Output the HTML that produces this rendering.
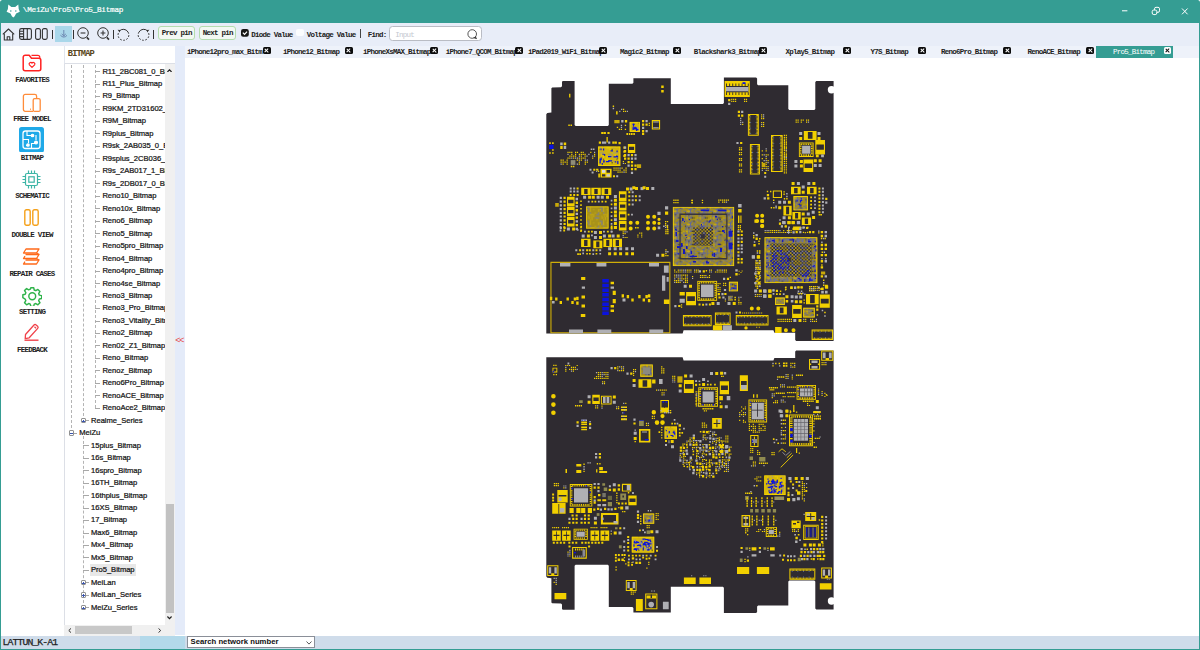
<!DOCTYPE html>
<html><head><meta charset="utf-8"><title>Pro5_Bitmap</title>
<style>
*{box-sizing:border-box;margin:0;padding:0}
html,body{width:1200px;height:650px;overflow:hidden}
body{background:#359d93;position:relative;font-family:"Liberation Mono",monospace;color:#111}
.abs,.abs>*,#tree>*,#tabs>*,#side>*,#tool>*{position:absolute}
i,b{display:block;font-style:normal}
#corner1,#corner2{position:absolute;top:0;width:3px;height:3px;background:#fff}
#title{left:0;top:0;width:1200px;height:22.600px;background:#359d93;border-radius:2.500px 2.500px 0 0}
#ttext{left:22.800px;top:5.100px;font-size:7.700px;letter-spacing:-0.250px;color:#fff;line-height:10px;white-space:nowrap;-webkit-text-stroke:0.200px #fff}
#inner{left:1.200px;top:22.600px;width:1197.600px;height:625.900px;background:#fff;overflow:hidden}
#tool{left:1.200px;top:22.600px;width:1197.600px;height:23.100px;background:#e8edf8}
#side{left:1.200px;top:45.700px;width:62.400px;height:590px;background:#fff}
.sic{}
.sic.c{left:0;width:61.400px;display:flex;justify-content:center}
.sic svg{display:block}
.slb{left:0;width:61.200px;text-align:center;font-size:7.500px;letter-spacing:-0.750px;line-height:10px;font-weight:bold;color:#222;white-space:nowrap;text-indent:0.700px}
#thead{left:63.600px;top:45.700px;width:111.400px;height:18.700px;background:#fff;border-left:1px solid #e2e6ee;border-bottom:1px solid #dcdfe6}
#thead span{position:absolute;left:3.200px;top:3px;font-size:8.700px;letter-spacing:-0.850px;line-height:10px;color:#5a4620;font-weight:bold}
#tree{left:0;top:0;width:164.800px;height:625px;overflow:hidden}
#treeb{left:63.600px;top:64.400px;width:111.400px;height:571px;border-left:1px solid #dcdfe6;border-right:1px solid #dcdfe6}
.ti{font-family:"Liberation Sans",sans-serif;font-size:7.600px;line-height:12px;height:12px;white-space:nowrap;color:#111;padding:0 1.500px;letter-spacing:-0.030px;-webkit-text-stroke:0.220px #111}
.ti.sel{background:#e8e8e8}
.hd{height:0.600px;background:#a8a8a8}
.vd{width:0;border-left:0.700px dashed #b4b4b4}
.bx{width:5.600px;height:5.600px;border:0.600px solid #919191;background:#fff;border-radius:1px}
.bx .h{position:absolute;left:0.800px;top:1.900px;width:2.800px;height:0.700px;background:#3a55b0}
.bx .v{position:absolute;left:1.850px;top:0.800px;width:0.700px;height:2.800px;background:#3a55b0}
#vsb{left:164.800px;top:64.400px;width:10.200px;height:560.600px;background:#f0f0f0}
#vsb .th{position:absolute;left:1.400px;top:440px;width:7.800px;height:108.500px;background:#c2c2c2}
#hsb{left:64.200px;top:625px;width:100.600px;height:10.500px;background:#f0f0f0}
#hsb .th{position:absolute;left:10.800px;top:1.200px;width:57px;height:8px;background:#c8c8c8}
#sbc{left:164.800px;top:625px;width:10.200px;height:10.500px;background:#f0f0f0}
#split{left:175px;top:45.700px;width:10px;height:589.800px;background:#e4ebf9}
#split span{position:absolute;left:0.300px;top:289.400px;font-size:8.800px;letter-spacing:-1.200px;line-height:10px;color:#e8483f;font-family:"Liberation Sans",sans-serif}
#tabs{left:185px;top:45.700px;width:1013.800px;height:12.400px;background:#eef2fa}
#tabs>*{margin-left:-185px}
.tb{top:1.700px;font-size:7.500px;letter-spacing:-0.750px;line-height:10px;white-space:nowrap;color:#222;font-weight:bold}
.tb.w{color:#fff;font-weight:normal}
.cx{top:0.900px;margin-left:-185.800px !important;width:7.800px;height:7.600px;background:#0c0c0c;border-radius:1.500px}
.cx:before,.cx:after{content:"";position:absolute;left:1.500px;top:3.200px;width:4.800px;height:1.200px;background:#fff;transform:rotate(45deg)}
.cx:after{transform:rotate(-45deg)}
.tbact{left:1096px;top:0.300px;width:77.200px;height:12.100px;background:#359d93}
.tbact + .tb + .cx{background:#fff}
.tbact + .tb + .cx:before,.tbact + .tb + .cx:after{background:#111}
#canvas{left:185px;top:58.100px;width:1013.800px;height:577.400px;background:#fff}
#status{left:1.200px;top:635.500px;width:1197.600px;height:13px;background:#cfdcea}
#status .seg{position:absolute;left:139px;top:0;width:45px;height:13px;background:#b3d9ea}
#status .lt{position:absolute;left:1.300px;top:2.300px;font-size:9.800px;letter-spacing:-0.900px;line-height:10px;-webkit-text-stroke:0.250px #222;color:#222;white-space:nowrap}
#combo{position:absolute;left:185.800px;top:0.300px;width:128.400px;height:12.600px;background:#fff;border:0.800px solid #8a8f98}
#combo span{position:absolute;left:2.500px;top:0.600px;font-family:"Liberation Sans",sans-serif;font-weight:bold;font-size:7.700px;line-height:10px;white-space:nowrap;color:#111;letter-spacing:0.020px}
#combo svg{position:absolute;right:2.200px;top:3.800px}
.sep{top:7.600px;width:1px;height:8.600px;background:#333}
.tico{top:5px}
.pin{top:3.800px;height:13.700px;border:1px solid #b4dcae;border-radius:3px;background:#f3f8f3;font-size:7.500px;letter-spacing:-0.750px;line-height:12.800px;font-weight:bold;color:#222;text-align:center;white-space:nowrap}
.tl{top:7.200px;font-size:7.500px;letter-spacing:-0.750px;line-height:10px;font-weight:bold;color:#222;white-space:nowrap}
#find{left:388px;top:3.600px;width:92.500px;height:15.200px;border:1px solid #b9bcc4;border-radius:3.500px;background:#fff}
#find span{position:absolute;left:5px;top:2.600px;font-size:7.500px;letter-spacing:-0.750px;line-height:10px;color:#c4c8d0}
</style></head><body>
<div class="abs">
<div id="corner1" style="left:0"></div><div id="corner2" style="left:1197px"></div>
<div id="title"></div>
<svg style="left:6px;top:3.500px" width="14.500" height="14" viewBox="0 0 14.500 14"><path d="M2.300 0.400L5.400 2.900L9.200 2.900L12.300 0.400L12.700 5L13.800 7.800L10.100 9.600L8.700 12.200L7.300 13.600L5.900 12.200L4.500 9.600L0.600 7.800L1.900 5z" fill="#fff"/><circle cx="4.800" cy="7" r="0.750" fill="#359d93"/><circle cx="9.800" cy="7" r="0.750" fill="#359d93"/></svg>
<div id="ttext">\MeiZu\Pro5\Pro5_Bitmap</div>
<svg style="left:1120px;top:5px" width="72" height="13" viewBox="0 0 72 13" fill="none" stroke="#fff" stroke-width="1"><path d="M2 5.800h5.400"/><rect x="32.200" y="5" width="4.600" height="4.600" rx="1.600"/><path d="M34.500 4.800v-1a1.500 1.500 0 0 1 1.500-1.500h2a1.500 1.500 0 0 1 1.500 1.500v2a1.500 1.500 0 0 1-1.500 1.500h-1"/><path d="M62 3.500l5.600 5.800M67.600 3.500l-5.600 5.800"/></svg>
<div id="inner"></div>
<div id="tool">

<svg class="tico" style="left:0.700px;top:5px" width="13" height="13" viewBox="0 0 13 13" fill="none" stroke="#333" stroke-width="1.100" stroke-linejoin="round"><path d="M0.800 6.400l5.700-5.400l5.700 5.400"/><path d="M2.300 5.600v6.400h8.400v-6.400"/><path d="M5.200 12v-3.300h2.600v3.300"/></svg>
<svg class="tico" style="left:17.500px;top:5.200px" width="13" height="12" viewBox="0 0 13 12" fill="none" stroke="#333" stroke-width="1.100"><rect x="0.600" y="0.600" width="11.800" height="10.800" rx="1.800"/><path d="M4.600 0.600v10.800M8.300 0.600v10.800M0.600 3.200h4M0.600 5.900h4M0.600 8.600h4"/></svg>
<svg class="tico" style="left:33.500px;top:5.200px" width="13" height="12" viewBox="0 0 13 12" fill="none" stroke="#333" stroke-width="1.100"><rect x="0.600" y="0.600" width="4.800" height="10.800" rx="1.600"/><rect x="7.400" y="0.600" width="4.800" height="10.800" rx="1.600"/></svg>
<i class="sep" style="left:50.800px"></i>
<i style="left:54.300px;top:3.400px;width:16.500px;height:16.200px;background:#a9d7ea"></i>
<svg class="tico" style="left:58.700px;top:7.400px" width="7.600" height="8" viewBox="0 0 9 9.500" fill="none" stroke="#5b6fa0" stroke-width="0.900"><path d="M4.500 0v6.800M2 4.600l2.500 2.400l2.500-2.400M0.500 6.200q4 4.400 8 0"/></svg>
<i class="sep" style="left:71.500px"></i>
<svg class="tico" style="left:75.600px;top:4.800px" width="13" height="13.500" viewBox="0 0 13 13.500" fill="none" stroke="#333" stroke-width="1"><circle cx="6" cy="6" r="5.300"/><path d="M3.600 6h4.800" stroke-width="1.100"/><path d="M9.800 10.400l2.200 2.200" stroke-width="1.600"/></svg>
<svg class="tico" style="left:95.600px;top:4.800px" width="13" height="13.500" viewBox="0 0 13 13.500" fill="none" stroke="#333" stroke-width="1"><circle cx="6" cy="6" r="5.300"/><path d="M3.600 6h4.800M6 3.600v4.800" stroke-width="1.100"/><path d="M9.800 10.400l2.200 2.200" stroke-width="1.600"/></svg>
<i class="sep" style="left:111.800px"></i>
<svg class="tico" style="left:115.600px;top:5px" width="13" height="13" viewBox="0 0 13 13" fill="none" stroke="#333" stroke-width="1"><path d="M2.200 3.200a5.400 5.400 0 0 1 8.800 0.800"/><path d="M11 4a5.400 5.400 0 1 1-9.600 1" stroke-dasharray="1.800 1.500"/><path d="M0.600 1.800l2.600 0.200l-0.400 2.600z" fill="#333" stroke="none"/></svg>
<svg class="tico" style="left:135.600px;top:5px" width="13" height="13" viewBox="0 0 13 13" fill="none" stroke="#333" stroke-width="1"><path d="M10.800 3.200a5.400 5.400 0 0 0-8.800 0.800"/><path d="M2 4a5.400 5.400 0 1 0 9.600 1" stroke-dasharray="1.800 1.500"/><path d="M12.400 1.800l-2.600 0.200l0.400 2.600z" fill="#333" stroke="none"/></svg>
<i class="sep" style="left:151.800px"></i>
<div class="pin" style="left:157.200px;width:37px">Prev pin</div>
<div class="pin" style="left:198px;width:37px">Next pin</div>
<svg style="left:240.300px;top:6.600px" width="7.800" height="7.800" viewBox="0 0 8 8"><rect width="8" height="8" rx="2.200" fill="#151515"/><path d="M1.900 3.800l1.700 1.800l2.600-3" fill="none" stroke="#fff" stroke-width="1.200"/></svg>
<span class="tl" style="left:250px">Diode Value</span>
<i style="left:295.300px;top:6px;width:7.200px;height:7.200px;background:#fbfcfe;border-radius:2px"></i>
<span class="tl" style="left:305.500px">Voltage Value</span>
<i class="sep" style="left:358.600px;top:6.500px;height:9px;background:#444"></i>
<span class="tl" style="left:366.500px">Find:</span>
<div id="find"><span>Input</span><svg style="position:absolute;left:76.500px;top:2.300px" width="10.500" height="10.500" viewBox="0 0 10.500 10.500" fill="none" stroke="#444" stroke-width="0.900"><circle cx="5.200" cy="5" r="4.300"/><path d="M6.400 8.400q2 1.600 3.600 1.200q-1.200-0.800-1.200-2.200" fill="#444" stroke-width="0.500"/></svg></div>

</div>
<div id="side">
<div class="sic c" style="top:8.3px"><svg width="20" height="18" viewBox="0 0 20 18" fill="none" stroke="#ff2222" stroke-width="1.5" stroke-linejoin="round"><path d="M1.2 3.2a2 2 0 0 1 2-2h4l2.3 3h7.3a2 2 0 0 1 2 2v8.600a2 2 0 0 1-2 2H3.200a2 2 0 0 1-2-2z"/><path d="M9.500 1.4h6.300a2 2 0 0 1 2 2v1.200" stroke-width="1.200"/><path d="M10 13.400l-2.600-2.600a1.500 1.500 0 0 1 2.600-1.700a1.500 1.500 0 0 1 2.600 1.700z" stroke-width="1.200"/></svg></div>
<div class="sic c" style="top:47.0px"><svg width="20" height="20" viewBox="0 0 20 20" fill="none" stroke="#ff8c3a" stroke-width="1.300" stroke-linejoin="round"><path d="M11 18.300H3.200a1.800 1.800 0 0 1-1.800-1.800V3.200a1.800 1.800 0 0 1 1.800-1.800h9.600a1.800 1.800 0 0 1 1.800 1.800v2.300"/><rect x="11.200" y="5.600" width="7" height="12.800" rx="1.500" fill="#fff"/><path d="M8 16.200h.8" stroke-width="1.400"/></svg></div>
<div class="sic" style="top:81.0px;left:18.3px"><svg width="25" height="25.500" viewBox="0 0 25 25.500"><rect width="25" height="25.500" rx="2.500" fill="#1fa9e8"/><g fill="none" stroke="#fff" stroke-width="1.300"><rect x="4" y="4" width="17" height="17.500" rx="2.500"/><path d="M8 4v4.500h4.500M17 8v5M4 12.500h5.500v3.500M12.500 21.500v-5h4M9 18.500h-2" stroke-width="1.100"/><circle cx="17" cy="15.500" r="1.400" fill="#fff"/><circle cx="13.500" cy="8.500" r="1.200" fill="#fff"/><circle cx="9" cy="18" r="1.200" fill="#fff"/></g></svg></div>
<div class="sic c" style="top:124.5px"><svg width="19" height="19" viewBox="0 0 19 19" fill="none" stroke="#3cb5a5" stroke-width="1.200"><rect x="3.500" y="3.500" width="12" height="12" rx="1.500"/><rect x="6.800" y="6.800" width="5.400" height="5.400"/><path d="M6.500 0.500v3M9.500 0.500v3M12.500 0.500v3M6.500 15.500v3M9.500 15.500v3M12.500 15.500v3M0.500 6.500h3M0.500 9.500h3M0.500 12.500h3M15.500 6.500h3M15.500 9.500h3M15.500 12.500h3"/></svg></div>
<div class="sic c" style="top:163.3px"><svg width="15" height="17" viewBox="0 0 15 17" fill="none" stroke="#f5a11a" stroke-width="1.400"><rect x="0.800" y="0.800" width="5.400" height="15.400" rx="1.600"/><rect x="8.800" y="0.800" width="5.400" height="15.400" rx="1.600"/></svg></div>
<div class="sic c" style="top:202.0px"><svg width="19" height="17" viewBox="0 0 19 17" fill="none" stroke="#ff6a1a" stroke-width="1.300" stroke-linejoin="round"><path d="M4 1h13l-2.500 4h-13z"/><path d="M3.500 6.500h13.500l-2.500 4h-13l1.500-2.400"/><path d="M3.500 12h13.500l-2.500 4h-13l1.500-2.400"/><path d="M14.500 5l2.500 1.500M14.500 10.500l2.500 1.500" /></svg></div>
<div class="sic c" style="top:240.1px"><svg width="20.500" height="20.500" viewBox="0 0 24 24" fill="none" stroke="#2fb34a" stroke-width="1.700" stroke-linejoin="round"><circle cx="12" cy="12" r="4"/><path d="M10.300 2h3.400l.6 2.700 1.900.8 2.400-1.500 2.400 2.400-1.500 2.400.8 1.900 2.700.6v3.400l-2.700.6-.8 1.900 1.500 2.400-2.400 2.400-2.400-1.500-1.900.8-.6 2.700h-3.400l-.6-2.700-1.900-.8-2.400 1.500-2.400-2.400 1.500-2.400-.8-1.900L1 13.700v-3.400l2.700-.6.8-1.900L3 5.400l2.400-2.400 2.400 1.500 1.900-.8z"/></svg></div>
<div class="sic c" style="top:276.9px"><svg width="17" height="18" viewBox="0 0 17 18" fill="none" stroke="#f0424a" stroke-width="1.300" stroke-linejoin="round"><path d="M2.500 11.500l8.500-9.500a1.500 1.500 0 0 1 2.100-.1l1.500 1.400a1.500 1.500 0 0 1 .1 2.100l-8.500 9.400-4 .9z"/><path d="M11.500 3.800l1.500 1.400" /><path d="M1.500 17.200h14" stroke-width="1.400"/></svg></div>
<div class="slb" style="top:29.5px">FAVORITES</div>
<div class="slb" style="top:68.1px">FREE MODEL</div>
<div class="slb" style="top:107.1px">BITMAP</div>
<div class="slb" style="top:145.7px">SCHEMATIC</div>
<div class="slb" style="top:184.4px">DOUBLE VIEW</div>
<div class="slb" style="top:223.1px">REPAIR CASES</div>
<div class="slb" style="top:261.7px">SETTING</div>
<div class="slb" style="top:299.6px">FEEDBACK</div>
</div>
<div id="thead"><span>BITMAP</span></div>
<div id="treeb"></div>
<div id="tree">
<i class="vd" style="left:71.4px;top:64.5px;height:368.5px"></i>
<i class="vd" style="left:83.4px;top:64.5px;height:356.1px"></i>
<i class="vd" style="left:95.4px;top:64.5px;height:343.6px"></i>
<i class="vd" style="left:83.4px;top:436.0px;height:171.6px"></i>
<div class="ti" style="left:100.9px;top:65.5px">R11_2BC081_0_Bitmap</div>
<i class="hd" style="left:95.4px;top:71.1px;width:4.6px"></i>
<div class="ti" style="left:100.9px;top:78.0px">R11_Plus_Bitmap</div>
<i class="hd" style="left:95.4px;top:83.6px;width:4.6px"></i>
<div class="ti" style="left:100.9px;top:90.4px">R9_Bitmap</div>
<i class="hd" style="left:95.4px;top:96.0px;width:4.6px"></i>
<div class="ti" style="left:100.9px;top:102.9px">R9KM_2TD31602_Bitmap</div>
<i class="hd" style="left:95.4px;top:108.5px;width:4.6px"></i>
<div class="ti" style="left:100.9px;top:115.4px">R9M_Bitmap</div>
<i class="hd" style="left:95.4px;top:121.0px;width:4.6px"></i>
<div class="ti" style="left:100.9px;top:127.8px">R9plus_Bitmap</div>
<i class="hd" style="left:95.4px;top:133.4px;width:4.6px"></i>
<div class="ti" style="left:100.9px;top:140.3px">R9sk_2AB035_0_Bitmap</div>
<i class="hd" style="left:95.4px;top:145.9px;width:4.6px"></i>
<div class="ti" style="left:100.9px;top:152.8px">R9splus_2CB036_Bitmap</div>
<i class="hd" style="left:95.4px;top:158.4px;width:4.6px"></i>
<div class="ti" style="left:100.9px;top:165.3px">R9s_2AB017_1_Bitmap</div>
<i class="hd" style="left:95.4px;top:170.9px;width:4.6px"></i>
<div class="ti" style="left:100.9px;top:177.7px">R9s_2DB017_0_Bitmap</div>
<i class="hd" style="left:95.4px;top:183.3px;width:4.6px"></i>
<div class="ti" style="left:100.9px;top:190.2px">Reno10_Bitmap</div>
<i class="hd" style="left:95.4px;top:195.8px;width:4.6px"></i>
<div class="ti" style="left:100.9px;top:202.7px">Reno10x_Bitmap</div>
<i class="hd" style="left:95.4px;top:208.3px;width:4.6px"></i>
<div class="ti" style="left:100.9px;top:215.1px">Reno6_Bitmap</div>
<i class="hd" style="left:95.4px;top:220.7px;width:4.6px"></i>
<div class="ti" style="left:100.9px;top:227.6px">Reno5_Bitmap</div>
<i class="hd" style="left:95.4px;top:233.2px;width:4.6px"></i>
<div class="ti" style="left:100.9px;top:240.1px">Reno5pro_Bitmap</div>
<i class="hd" style="left:95.4px;top:245.7px;width:4.6px"></i>
<div class="ti" style="left:100.9px;top:252.6px">Reno4_Bitmap</div>
<i class="hd" style="left:95.4px;top:258.2px;width:4.6px"></i>
<div class="ti" style="left:100.9px;top:265.0px">Reno4pro_Bitmap</div>
<i class="hd" style="left:95.4px;top:270.6px;width:4.6px"></i>
<div class="ti" style="left:100.9px;top:277.5px">Reno4se_Bitmap</div>
<i class="hd" style="left:95.4px;top:283.1px;width:4.6px"></i>
<div class="ti" style="left:100.9px;top:290.0px">Reno3_Bitmap</div>
<i class="hd" style="left:95.4px;top:295.6px;width:4.6px"></i>
<div class="ti" style="left:100.9px;top:302.4px">Reno3_Pro_Bitmap</div>
<i class="hd" style="left:95.4px;top:308.0px;width:4.6px"></i>
<div class="ti" style="left:100.9px;top:314.9px">Reno3_Vitality_Bitmap</div>
<i class="hd" style="left:95.4px;top:320.5px;width:4.6px"></i>
<div class="ti" style="left:100.9px;top:327.4px">Reno2_Bitmap</div>
<i class="hd" style="left:95.4px;top:333.0px;width:4.6px"></i>
<div class="ti" style="left:100.9px;top:339.8px">Ren02_Z1_Bitmap</div>
<i class="hd" style="left:95.4px;top:345.4px;width:4.6px"></i>
<div class="ti" style="left:100.9px;top:352.3px">Reno_Bitmap</div>
<i class="hd" style="left:95.4px;top:357.9px;width:4.6px"></i>
<div class="ti" style="left:100.9px;top:364.8px">Renoz_Bitmap</div>
<i class="hd" style="left:95.4px;top:370.4px;width:4.6px"></i>
<div class="ti" style="left:100.9px;top:377.2px">Reno6Pro_Bitmap</div>
<i class="hd" style="left:95.4px;top:382.8px;width:4.6px"></i>
<div class="ti" style="left:100.9px;top:389.7px">RenoACE_Bitmap</div>
<i class="hd" style="left:95.4px;top:395.3px;width:4.6px"></i>
<div class="ti" style="left:100.9px;top:402.2px">RenoAce2_Bitmap</div>
<i class="hd" style="left:95.4px;top:407.8px;width:4.6px"></i>
<div class="ti" style="left:89.5px;top:414.7px">Realme_Series</div>
<i class="hd" style="left:83.4px;top:420.3px;width:5.2px"></i>
<i class="bx" style="left:80.6px;top:417.8px"><b class="h"></b><b class="v"></b></i>
<div class="ti" style="left:77.8px;top:427.1px">MeiZu</div>
<i class="hd" style="left:71.4px;top:432.7px;width:5.5px"></i>
<i class="bx" style="left:68.6px;top:430.2px"><b class="h"></b></i>
<div class="ti" style="left:89.5px;top:439.6px">15plus_Bitmap</div>
<i class="hd" style="left:83.4px;top:445.2px;width:5.2px"></i>
<div class="ti" style="left:89.5px;top:452.1px">16s_Bitmap</div>
<i class="hd" style="left:83.4px;top:457.7px;width:5.2px"></i>
<div class="ti" style="left:89.5px;top:464.5px">16spro_Bitmap</div>
<i class="hd" style="left:83.4px;top:470.1px;width:5.2px"></i>
<div class="ti" style="left:89.5px;top:477.0px">16TH_Bitmap</div>
<i class="hd" style="left:83.4px;top:482.6px;width:5.2px"></i>
<div class="ti" style="left:89.5px;top:489.5px">16thplus_Bitmap</div>
<i class="hd" style="left:83.4px;top:495.1px;width:5.2px"></i>
<div class="ti" style="left:89.5px;top:502.0px">16XS_Bitmap</div>
<i class="hd" style="left:83.4px;top:507.6px;width:5.2px"></i>
<div class="ti" style="left:89.5px;top:514.4px">17_Bitmap</div>
<i class="hd" style="left:83.4px;top:520.0px;width:5.2px"></i>
<div class="ti" style="left:89.5px;top:526.9px">Max6_Bitmap</div>
<i class="hd" style="left:83.4px;top:532.5px;width:5.2px"></i>
<div class="ti" style="left:89.5px;top:539.4px">Mx4_Bitmap</div>
<i class="hd" style="left:83.4px;top:545.0px;width:5.2px"></i>
<div class="ti" style="left:89.5px;top:551.8px">Mx5_Bitmap</div>
<i class="hd" style="left:83.4px;top:557.4px;width:5.2px"></i>
<div class="ti sel" style="left:89.5px;top:564.3px">Pro5_Bitmap</div>
<i class="hd" style="left:83.4px;top:569.9px;width:5.2px"></i>
<div class="ti" style="left:89.5px;top:576.8px">MeiLan</div>
<i class="hd" style="left:83.4px;top:582.4px;width:5.2px"></i>
<i class="bx" style="left:80.6px;top:579.9px"><b class="h"></b><b class="v"></b></i>
<div class="ti" style="left:89.5px;top:589.2px">MeiLan_Series</div>
<i class="hd" style="left:83.4px;top:594.8px;width:5.2px"></i>
<i class="bx" style="left:80.6px;top:592.3px"><b class="h"></b><b class="v"></b></i>
<div class="ti" style="left:89.5px;top:601.7px">MeiZu_Series</div>
<i class="hd" style="left:83.4px;top:607.3px;width:5.2px"></i>
<i class="bx" style="left:80.6px;top:604.8px"><b class="h"></b><b class="v"></b></i>
</div>
<div id="vsb"><svg style="position:absolute;left:2.600px;top:4.500px" width="5" height="3.500" viewBox="0 0 5 3.500" fill="none" stroke="#222" stroke-width="1.200"><path d="M0.400 3l2.100-2.200l2.100 2.200"/></svg><div class="th"></div><svg style="position:absolute;left:2.600px;top:552px" width="5" height="3.500" viewBox="0 0 5 3.500" fill="none" stroke="#222" stroke-width="1.200"><path d="M0.400 0.500l2.100 2.200l2.100-2.200"/></svg></div>
<div id="hsb"><svg style="position:absolute;left:3.500px;top:3px" width="3.500" height="5" viewBox="0 0 3.500 5" fill="none" stroke="#333" stroke-width="1"><path d="M3 0.400l-2.200 2.100l2.200 2.100"/></svg><div class="th"></div><svg style="position:absolute;left:93.500px;top:3px" width="3.500" height="5" viewBox="0 0 3.500 5" fill="none" stroke="#333" stroke-width="1"><path d="M0.500 0.400l2.200 2.100l-2.200 2.100"/></svg></div>
<div id="sbc"></div>
<div id="tabs">
<span class="tb" style="left:187px">iPhone12pro_max_Bitm</span><i class="cx" style="left:263.5px"></i>
<span class="tb" style="left:283px">iPhone12_Bitmap</span><i class="cx" style="left:345.5px"></i>
<span class="tb" style="left:363px">iPhoneXsMAX_Bitmap</span><i class="cx" style="left:431px"></i>
<span class="tb" style="left:445.8px">iPhone7_QCOM_Bitmap</span><i class="cx" style="left:515.8px"></i>
<span class="tb" style="left:528px">iPad2019_WiFi_Bitmap</span><i class="cx" style="left:600px"></i>
<span class="tb" style="left:620px">Magic2_Bitmap</span><i class="cx" style="left:674px"></i>
<span class="tb" style="left:693.8px">Blackshark3_Bitmap</span><i class="cx" style="left:760px"></i>
<span class="tb" style="left:785.5px">Xplay5_Bitmap</span><i class="cx" style="left:844px"></i>
<span class="tb" style="left:870.5px">Y7S_Bitmap</span><i class="cx" style="left:918.8px"></i>
<span class="tb" style="left:941px">Reno6Pro_Bitmap</span><i class="cx" style="left:1004px"></i>
<span class="tb" style="left:1027.5px">RenoACE_Bitmap</span><i class="cx" style="left:1086.8px"></i>
<div class="tbact"></div><span class="tb w" style="left:1113px">Pro5_Bitmap</span><i class="cx" style="left:1164.3px"></i>
</div>
<div id="split"><span>&lt;&lt;</span></div>
<div id="canvas">
<svg style="position:absolute;left:-185px;top:-58.1px" width="1200" height="650" viewBox="0 0 1200 650" shape-rendering="auto"><defs><pattern id="bga" width="13.36" height="13.36" patternUnits="userSpaceOnUse"><rect width="13.36" height="13.36" fill="#a48e1c"/><path fill="#c8ab12" d="M6.98 8.65v4.51h1.05v-4.51zM0.30 11.99v1.17h1.05v-1.17zM3.64 1.97h2.84v1.05h-2.84zM5.31 10.32h4.51v1.05h-4.51zM5.31 0.30h4.51v1.05h-4.51zM6.98 3.64h2.84v1.05h-2.84zM1.97 3.64v4.51h1.05v-4.51zM3.64 3.64v1.17h1.05v-1.17zM0.30 5.31v1.17h1.05v-1.17zM3.64 3.64h2.84v1.05h-2.84zM5.31 5.31v1.17h1.05v-1.17zM5.31 10.32h2.84v1.05h-2.84z"/><path fill="#5f66a0" d="M10.32 3.64h1.17v1.05h-1.17zM8.65 6.98v4.51h1.05v-4.51zM8.65 1.97h2.84v1.05h-2.84zM6.98 11.99h4.51v1.05h-4.51zM11.99 11.99h4.51v1.05h-4.51zM6.98 0.30h4.51v1.05h-4.51zM10.32 0.30v4.51h1.05v-4.51zM8.65 10.32v4.51h1.05v-4.51zM11.99 0.30h4.51v1.05h-4.51zM5.31 1.97v1.17h1.05v-1.17zM11.99 8.65h4.51v1.05h-4.51zM6.98 11.99v1.17h1.05v-1.17zM8.65 6.98h1.17v1.05h-1.17zM1.97 5.31v2.84h1.05v-2.84zM8.65 3.64h2.84v1.05h-2.84zM1.97 6.98h4.51v1.05h-4.51zM3.64 1.97h4.51v1.05h-4.51zM6.98 11.99v1.17h1.05v-1.17zM1.97 10.32h1.17v1.05h-1.17zM8.65 6.98v2.84h1.05v-2.84zM3.64 0.30h4.51v1.05h-4.51zM11.99 8.65h1.17v1.05h-1.17zM3.64 10.32h1.17v1.05h-1.17zM8.65 3.64v1.17h1.05v-1.17zM6.98 3.64v2.84h1.05v-2.84zM3.64 11.99v2.84h1.05v-2.84zM8.65 11.99h2.84v1.05h-2.84zM10.32 3.64h1.17v1.05h-1.17zM3.64 11.99h2.84v1.05h-2.84zM11.99 6.98v4.51h1.05v-4.51zM8.65 1.97v2.84h1.05v-2.84zM0.30 6.98v2.84h1.05v-2.84zM6.98 11.99v2.84h1.05v-2.84zM6.98 8.65h4.51v1.05h-4.51zM0.30 11.99v4.51h1.05v-4.51zM8.65 6.98h2.84v1.05h-2.84zM8.65 8.65v2.84h1.05v-2.84zM10.32 8.65v1.17h1.05v-1.17zM11.99 8.65v2.84h1.05v-2.84zM3.64 5.31v2.84h1.05v-2.84z"/><path fill="#3a3626" d="M11.99 6.98v1.17h1.05v-1.17zM10.32 3.64h1.17v1.05h-1.17zM6.98 0.30h1.17v1.05h-1.17zM11.99 3.64v1.17h1.05v-1.17zM3.64 0.30v1.17h1.05v-1.17zM3.64 0.30h1.17v1.05h-1.17zM3.64 11.99v1.17h1.05v-1.17z"/></pattern><pattern id="bgb" width="13.36" height="13.36" patternUnits="userSpaceOnUse"><rect width="13.36" height="13.36" fill="#d2b40e"/><path fill="#ecd000" d="M1.97 11.99h2.84v1.05h-2.84zM3.64 11.99h4.51v1.05h-4.51zM0.30 6.98v2.84h1.05v-2.84zM10.32 1.97v1.17h1.05v-1.17zM6.98 1.97h2.84v1.05h-2.84zM1.97 8.65v2.84h1.05v-2.84zM11.99 1.97v1.17h1.05v-1.17zM6.98 1.97v1.17h1.05v-1.17zM5.31 8.65v2.84h1.05v-2.84zM5.31 0.30h4.51v1.05h-4.51z"/><path fill="#8a8ca6" d="M10.32 6.98v2.84h1.05v-2.84zM1.97 5.31v1.17h1.05v-1.17zM6.98 6.98h4.51v1.05h-4.51zM11.99 5.31v1.17h1.05v-1.17zM0.30 5.31h1.17v1.05h-1.17zM8.65 6.98h2.84v1.05h-2.84zM10.32 6.98v1.17h1.05v-1.17zM11.99 0.30h1.17v1.05h-1.17z"/><path fill="#3a3626" d="M10.32 1.97h1.17v1.05h-1.17zM1.97 11.99v1.17h1.05v-1.17zM10.32 1.97h1.17v1.05h-1.17z"/></pattern><pattern id="bgu" width="13.36" height="13.36" patternUnits="userSpaceOnUse"><rect width="13.36" height="13.36" fill="#a8921a"/><path fill="#c4a814" d="M8.65 3.64v2.84h1.05v-2.84zM1.97 1.97v2.84h1.05v-2.84zM5.31 0.30h1.17v1.05h-1.17zM1.97 5.31v1.17h1.05v-1.17zM0.30 1.97v1.17h1.05v-1.17zM0.30 10.32v1.17h1.05v-1.17zM0.30 3.64h2.84v1.05h-2.84zM1.97 6.98v4.51h1.05v-4.51zM3.64 1.97v4.51h1.05v-4.51zM5.31 8.65v1.17h1.05v-1.17zM1.97 0.30h4.51v1.05h-4.51zM10.32 8.65v2.84h1.05v-2.84zM11.99 8.65h2.84v1.05h-2.84zM3.64 5.31v1.17h1.05v-1.17zM11.99 8.65h4.51v1.05h-4.51zM1.97 1.97h4.51v1.05h-4.51zM8.65 3.64h2.84v1.05h-2.84zM1.97 8.65v2.84h1.05v-2.84zM11.99 11.99v1.17h1.05v-1.17zM6.98 11.99v4.51h1.05v-4.51z"/><path fill="#767ba0" d="M0.30 6.98v4.51h1.05v-4.51zM11.99 6.98h4.51v1.05h-4.51zM8.65 0.30h2.84v1.05h-2.84zM1.97 11.99h1.17v1.05h-1.17zM6.98 3.64h4.51v1.05h-4.51zM10.32 11.99h1.17v1.05h-1.17z"/></pattern><pattern id="chk" width="13.36" height="13.36" patternUnits="userSpaceOnUse"><rect width="13.36" height="13.36" fill="#17173c"/><path fill="#ccae14" d="M0.00 0.00h1.67v1.67h-1.67zM3.34 0.00h1.67v1.67h-1.67zM10.02 0.00h1.67v1.67h-1.67zM5.01 1.67h1.67v1.67h-1.67zM8.35 1.67h1.67v1.67h-1.67zM11.69 1.67h1.67v1.67h-1.67zM0.00 3.34h1.67v1.67h-1.67zM3.34 3.34h1.67v1.67h-1.67zM6.68 3.34h1.67v1.67h-1.67zM10.02 3.34h1.67v1.67h-1.67zM1.67 5.01h1.67v1.67h-1.67zM5.01 5.01h1.67v1.67h-1.67zM11.69 5.01h1.67v1.67h-1.67zM3.34 6.68h1.67v1.67h-1.67zM6.68 6.68h1.67v1.67h-1.67zM10.02 6.68h1.67v1.67h-1.67zM1.67 8.35h1.67v1.67h-1.67zM8.35 8.35h1.67v1.67h-1.67zM11.69 8.35h1.67v1.67h-1.67zM3.34 10.02h1.67v1.67h-1.67zM6.68 10.02h1.67v1.67h-1.67zM10.02 10.02h1.67v1.67h-1.67zM1.67 11.69h1.67v1.67h-1.67zM5.01 11.69h1.67v1.67h-1.67zM8.35 11.69h1.67v1.67h-1.67zM11.69 11.69h1.67v1.67h-1.67z"/><path fill="#8e8e98" d="M6.68 0.00h1.67v1.67h-1.67zM1.67 1.67h1.67v1.67h-1.67zM8.35 5.01h1.67v1.67h-1.67zM0.00 6.68h1.67v1.67h-1.67zM5.01 8.35h1.67v1.67h-1.67zM0.00 10.02h1.67v1.67h-1.67z"/></pattern><pattern id="chkg" width="13.36" height="13.36" patternUnits="userSpaceOnUse"><rect width="13.36" height="13.36" fill="#17173c"/><path fill="#ccae14" d="M0.00 0.00h1.67v1.67h-1.67zM3.34 0.00h1.67v1.67h-1.67zM10.02 0.00h1.67v1.67h-1.67zM5.01 1.67h1.67v1.67h-1.67zM8.35 1.67h1.67v1.67h-1.67zM0.00 3.34h1.67v1.67h-1.67zM3.34 3.34h1.67v1.67h-1.67zM10.02 3.34h1.67v1.67h-1.67zM1.67 5.01h1.67v1.67h-1.67zM5.01 5.01h1.67v1.67h-1.67zM8.35 5.01h1.67v1.67h-1.67zM6.68 6.68h1.67v1.67h-1.67zM10.02 6.68h1.67v1.67h-1.67zM1.67 8.35h1.67v1.67h-1.67zM5.01 8.35h1.67v1.67h-1.67zM8.35 8.35h1.67v1.67h-1.67zM11.69 8.35h1.67v1.67h-1.67zM6.68 10.02h1.67v1.67h-1.67zM10.02 10.02h1.67v1.67h-1.67zM1.67 11.69h1.67v1.67h-1.67z"/><path fill="#8e8e98" d="M6.68 0.00h1.67v1.67h-1.67zM1.67 1.67h1.67v1.67h-1.67zM11.69 1.67h1.67v1.67h-1.67zM6.68 3.34h1.67v1.67h-1.67zM11.69 5.01h1.67v1.67h-1.67zM0.00 6.68h1.67v1.67h-1.67zM3.34 6.68h1.67v1.67h-1.67zM0.00 10.02h1.67v1.67h-1.67zM3.34 10.02h1.67v1.67h-1.67zM5.01 11.69h1.67v1.67h-1.67zM8.35 11.69h1.67v1.67h-1.67zM11.69 11.69h1.67v1.67h-1.67z"/></pattern></defs><path d="M546.3 333.4L546.3 114.2L547.3 112.9L551.4 112.5L551.4 88.3L552.2 87.4L561.0 87.2L562.0 86.2L562.0 81.8L562.8 81.0L574.6 81.0L574.6 125.0L575.6 126.0L607.8 126.0L608.8 125.0L608.8 83.8L632.4 83.8L633.4 82.8L633.4 78.3L670.8 78.3L670.8 103.9L722.9 103.9L723.9 102.9L723.9 77.6L756.1 77.6L757.1 78.6L757.1 84.2L758.1 85.2L788.3 85.2L788.3 109.1L789.3 110.1L814.3 110.1L815.3 109.1L815.3 82.1L816.3 81.1L833.6 81.1L833.6 341.0L796.2 341.0L795.2 340.0L795.2 332.7L774.4 332.7L773.4 330.3L683.6 330.3L682.6 333.4z" fill="#2f2b31"/><circle cx="831.5" cy="89.7" r="3.7" fill="#fff"/><rect x="831.5" y="87.2" width="3" height="5" fill="#fff"/><rect x="672.9" y="206.9" width="61.2" height="59.2" fill="url(#bga)"/>
<path fill="#f2d000" d="M672.9 206.9h61.2v.9h-61.2zM672.9 265.2h61.2v.9h-61.2zM672.9 207.8h.9v57.4h-.9zM733.2 207.8h.9v57.4h-.9z"/>
<path fill="#38343c" d="M679.4 213.6h48.1v1.3h-48.1zM679.4 258.1h48.1v1.3h-48.1zM679.4 214.9h1.3v43.2h-1.3zM726.2 214.9h1.3v43.2h-1.3z"/>
<rect x="693.1" y="227.4" width="20" height="18.4" fill="url(#chk)" /><rect x="701" y="234.2" width="3.8" height="4.4" fill="#35313a"/>
<path fill="#1418c0" d="M700.6 209.4h8.6v1.8h-8.6zM717.8 209.4h8.7v1.8h-8.7zM728.6 230.7h3.8v6.1h-3.8zM728.6 242.4h3.8v6.8h-3.8zM689.5 255.7h7.5v1.2h-7.5zM713.5 253h1.5v4h-1.5zM675.5 232h1.5v4h-1.5zM676 240h2.6v2h-2.6zM677 246h3.6v2h-3.6zM681 243h1.6v4h-1.6zM683 249h2v5h-2zM686 246h1.6v3h-1.6zM722 230h2.6v2h-2.6zM720 248h2v4h-2zM706 262h3v1.6h-3zM693 261h3v1.6h-3zM682 218h1.6v3h-1.6zM715 216h2v1.6h-2zM722.4 226.3h.9v1.2h-.9zM694.3 243.6h1.2v1.2h-1.2zM690.8 252.1h1.2v1.9h-1.2zM708.6 221.3h1.3v1.2h-1.3zM709.5 220.1h1.2v1.7h-1.2zM723.8 232h1.2v.9h-1.2zM718.4 243.7h2.2v1.2h-2.2zM689 219h1v1.2h-1zM700.8 224.1h1.2v1.5h-1.2zM716.8 218.7h1.2v1.5h-1.2zM686 237.2h1.2v.8h-1.2zM704.6 234h.9v1.2h-.9zM685.1 234.8h1.5v1.2h-1.5zM683.9 221h1.1v1.2h-1.1zM711.9 254.1h1.2v1.6h-1.2zM722 226h1.4v1.2h-1.4zM701.5 225.7h1.2v1.1h-1.2zM724.1 239.7h1.2v.8h-1.2zM690.7 250.7h1.4v1.2h-1.4zM675.6 229.3h1.2v1.6h-1.2zM692.2 255.3h1.7v1.1h-1.7zM677.5 253.3h1.9v1.2h-1.9zM705.9 261.5h1.9v1h-1.9zM711 225.3h1.1v1.2h-1.1zM731.9 215.8h.9v1.9h-.9zM675 228.8h1.8v1.2h-1.8zM729.8 228.7h.9v1.7h-.9zM706.2 260.8h1.2v1.8h-1.2zM719.5 218.7h1.2v1.2h-1.2zM681.4 244.7h1.5v1.2h-1.5zM726.5 240.3h1.2v1.2h-1.2zM694.1 234.2h1.1v.8h-1.1z"/>
<rect x="764.6" y="237.2" width="52.7" height="45.9" fill="url(#bga)"/>
<path fill="#f2d000" d="M764.6 237.2h52.7v.9h-52.7zM764.6 282.2h52.7v.9h-52.7zM764.6 238.1h.9v44.1h-.9zM816.4 238.1h.9v44.1h-.9z"/>
<rect x="770.4" y="243.4" width="41.7" height="33.4" fill="url(#chkg)"/><rect x="787.4" y="258" width="3.4" height="3.4" fill="#35313a"/>
<path fill="#666c9e" d="M810.6 240.1h1.2v1.7h-1.2zM801.7 239.6h1.2v2.7h-1.2zM786.5 239h3.3v1.2h-3.3zM797.9 239.3h1.2v3.2h-1.2zM808.3 239.5h1.2v3.4h-1.2zM772 240.7h1.6v1.2h-1.6zM813.7 238.7h1.4v1.2h-1.4zM774.7 241.4h2v1.2h-2zM798.6 239.6h1.2v1.9h-1.2zM767.1 238.8h1.2v2.5h-1.2zM802.3 239.2h1.2v3.2h-1.2zM772.8 238.6h1.2v3h-1.2zM802.7 238.9h1.1v1.2h-1.1zM796.8 241h3v1.2h-3zM776.9 279.9h1.2v1.1h-1.2zM786.6 277h1.2v3.7h-1.2zM775.7 278.6h1.2v2.5h-1.2zM804.3 277h2.6v1.2h-2.6zM773.6 278.8h1.2v3.1h-1.2zM807.4 279.2h1.2v1.3h-1.2zM811.3 278.4h3.4v1.2h-3.4zM806.8 279.2h2.7v1.2h-2.7zM780.1 277.3h1.2v1.1h-1.2zM797 278.3h1.2v1.3h-1.2zM811.7 279.2h1.2v1.6h-1.2zM773.7 278.4h2.8v1.2h-2.8zM797.5 280.2h4v1.2h-4zM781.4 277.9h1.2v1.7h-1.2zM767.4 264.2h1.1v2.4h-1.1zM766.1 256.9h1.2v1.9h-1.2zM767.7 257.2h1.7v1.2h-1.7zM767 246.1h1.4v1.2h-1.4zM767.2 259.6h2v1.2h-2zM766.2 273.4h1.2v1.8h-1.2zM766.7 246.4h2.7v1.2h-2.7zM766.9 246.1h2.7v1.2h-2.7zM766.6 260.3h2.2v1.2h-2.2zM767.2 244.6h2.4v1.2h-2.4zM812.5 250.4h1.8v1.2h-1.8zM812.5 259.8h1.1v1.2h-1.1zM813.3 264.9h1.2v2.4h-1.2zM813.8 246.7h1.7v1.1h-1.7zM812.4 263.5h1.1v1.2h-1.1zM813.6 273.2h1.2v1.1h-1.2zM812.2 264.9h1.2v1.5h-1.2zM814.4 266.7h1.2v1.9h-1.2zM813.4 262.4h2.3v1.2h-2.3zM814.6 265.2h1.2v1.5h-1.2z"/>
<path fill="#1418c0" d="M789.3 239.2h1.4v1.2h-1.4zM789.7 239.3h3v1.2h-3zM769.4 241.1h1v1.2h-1zM814.7 240.7h1.2v1.6h-1.2zM782.1 239.5h1.2v2.5h-1.2zM773.6 239.4h1.2v3.4h-1.2zM792.9 238.9h1.2v3.3h-1.2zM808.3 239.2h1.2v1.5h-1.2zM808.1 241h3v1.2h-3zM771.8 240.1h2.9v1.2h-2.9zM814.7 277.7h1.2v1.3h-1.2zM809.4 277.6h1.2v2.3h-1.2zM809.9 279.6h2.9v1.2h-2.9zM809 278.5h1.2v2.4h-1.2zM794.2 280.6h1.6v1.2h-1.6zM799.1 279.3h2.5v1.2h-2.5zM804.1 279h1.2v2.9h-1.2zM797.8 277.7h2.3v1.2h-2.3zM766.1 262.4h2.4v1.2h-2.4zM766.5 257.3h1.2v1.8h-1.2zM766.2 265.9h1.2v1.7h-1.2zM766.9 244.9h1.6v1.2h-1.6zM767.1 274.8h2.2v1.2h-2.2zM767.6 264h1.2v2.1h-1.2zM768 262.4h1.2v1.1h-1.2zM766.5 253.4h1.2v2h-1.2zM815.3 249.2h1.2v2.3h-1.2zM812.4 266.2h2v1.1h-2zM814.9 274.5h1.2v2.1h-1.2zM814.5 257.6h1.2v1.2h-1.2zM814.5 269.6h1.2v2.4h-1.2zM813.8 254.9h1.2v1.5h-1.2zM815 245.2h1.2v2.4h-1.2zM814.7 275.5h1.1v1.2h-1.1zM814 246.1h2.3v1.2h-2.3zM813.6 265h1.2v1.2h-1.2zM777.1 250.1h1.7v1.7h-1.7zM780.4 250.1h1.7v1.7h-1.7zM773.7 253.4h1.7v1.7h-1.7zM780.4 253.4h1.7v1.7h-1.7zM783.8 253.4h1.7v1.7h-1.7zM772.1 255.1h1.7v1.7h-1.7zM775.4 255.1h1.7v1.7h-1.7zM785.4 255.1h1.7v1.7h-1.7zM773.7 256.8h1.7v1.7h-1.7zM780.4 256.8h1.7v1.7h-1.7zM783.8 256.8h1.7v1.7h-1.7zM787.1 256.8h1.7v1.7h-1.7zM772.1 258.4h1.7v1.7h-1.7zM775.4 258.4h1.7v1.7h-1.7zM782.1 258.4h1.7v1.7h-1.7zM770.4 260.1h1.7v1.7h-1.7zM780.4 260.1h1.7v1.7h-1.7zM783.8 260.1h1.7v1.7h-1.7zM787.1 260.1h1.7v1.7h-1.7zM772.1 261.8h1.7v1.7h-1.7zM775.4 261.8h1.7v1.7h-1.7zM782.1 261.8h1.7v1.7h-1.7zM785.4 261.8h1.7v1.7h-1.7zM773.7 263.4h1.7v1.7h-1.7zM777.1 263.4h1.7v1.7h-1.7zM780.4 263.4h1.7v1.7h-1.7zM787.1 263.4h1.7v1.7h-1.7zM772.1 265.1h1.7v1.7h-1.7zM778.8 265.1h1.7v1.7h-1.7zM773.7 266.8h1.7v1.7h-1.7zM777.1 266.8h1.7v1.7h-1.7zM780.4 266.8h1.7v1.7h-1.7zM783.8 266.8h1.7v1.7h-1.7zM787.1 266.8h1.7v1.7h-1.7zM778.8 268.4h1.7v1.7h-1.7zM782.1 268.4h1.7v1.7h-1.7zM773.7 270.1h1.7v1.7h-1.7zM807.1 270.1h1.7v1.7h-1.7zM778.8 271.8h1.7v1.7h-1.7zM782.1 271.8h1.7v1.7h-1.7zM805.5 271.8h1.7v1.7h-1.7zM803.8 273.5h1.7v1.7h-1.7zM807.1 273.5h1.7v1.7h-1.7zM802.1 275.1h1.7v1.7h-1.7zM805.5 275.1h1.7v1.7h-1.7z"/>
<rect x="586.1" y="206.4" width="22.4" height="22.2" fill="url(#bgu)"/>
<path fill="#f2d000" d="M586.1 206.4h22.4v.8h-22.4zM586.1 227.8h22.4v.8h-22.4zM586.1 207.2h.8v20.6h-.8zM607.7 207.2h.8v20.6h-.8z"/>
<rect x="598.1" y="146.6" width="22.2" height="19.4" fill="url(#bgb)"/>
<path fill="#f2d000" d="M598.1 146.6h22.2v.9h-22.2zM598.1 165.1h22.2v.9h-22.2zM598.1 147.5h.9v17.6h-.9zM619.4 147.5h.9v17.6h-.9z"/>
<path fill="#0a12de" d="M616 155.6h1.2v1.7h-1.2zM613.5 156.3h2.9v1.2h-2.9zM599.5 158.4h1.2v3.2h-1.2zM614.7 161.2h1.5v1.2h-1.5zM601.7 163h1.2v1.7h-1.2zM600.4 148.6h1.2v1.6h-1.2zM616.5 150.6h1.2v1.6h-1.2zM609 160.2h3.1v1.2h-3.1zM604 154.1h1.2v1.7h-1.2zM608.2 160h1.2v2.2h-1.2zM600.6 157.4h1.2v2.8h-1.2zM603 148.5h1.2v1.9h-1.2zM616.9 155.8h1.2v1.2h-1.2zM608 156h3.4v1.2h-3.4zM603 161.4h1.7v1.2h-1.7zM610.6 150.2h2.4v1.2h-2.4zM616.9 157.4h1.2v1.2h-1.2zM617.2 160.9h1.2v3h-1.2zM602.5 153.7h1.2v1.4h-1.2zM603.3 160.3h1.4v1.2h-1.4zM605.9 161h2.5v1.2h-2.5zM599.6 160h1.2v3.4h-1.2z"/>
<rect x="629.7" y="121.9" width="10.2" height="10" fill="url(#bgb)"/>
<path fill="#f2d000" d="M629.7 121.9h10.2v.9h-10.2zM629.7 131h10.2v.9h-10.2zM629.7 122.8h.9v8.2h-.9zM639 122.8h.9v8.2h-.9zM651.8 120.1h8.3v1.1h-8.3zM651.8 128.4h8.3v1.1h-8.3zM651.8 121.2h1.1v7.2h-1.1zM659 121.2h1.1v7.2h-1.1zM600.5 168.7h11.1v8.9h-11.1z"/>
<path fill="#0a12de" d="M636.2 129h2.2v1.2h-2.2zM632.9 123.5h1.2v2.9h-1.2zM635.1 128.1h1.2v1.5h-1.2zM632.6 126.7h1.2v1.4h-1.2zM634 127.3h2.7v1.2h-2.7zM634.5 126.8h1.2v1.8h-1.2zM632.5 128h1.2v1.9h-1.2zM632.5 123.8h2.2v1.2h-2.2zM633.4 128.3h1.7v1.2h-1.7zM636 128.1h1.2v2.8h-1.2z"/>
<path fill="#b0b0b4" d="M653.2 121.4h5.5v1h-5.5zM653.2 127.2h5.5v1h-5.5z"/>
<path fill="#d8d8e0" d="M602 170h3.3v2.8h-3.3z"/>
<path fill="#c8c8cc" d="M606.5 174.2h3.5v2.4h-3.5z"/>
<path fill="#2f2b31" d="M606.5 170h3.5v2.8h-3.5zM602 174.2h3.3v2.4h-3.3z"/>
<rect x="793.5" y="196.1" width="14.4" height="14.2" fill="url(#bga)"/>
<path fill="#f2d000" d="M793.5 196.1h14.4v.9h-14.4zM793.5 209.4h14.4v.9h-14.4zM793.5 197h.9v12.4h-.9zM807 197h.9v12.4h-.9zM772.8 190.5h9.2v1.1h-9.2zM772.8 197h9.2v1.1h-9.2zM772.8 191.6h1.1v5.4h-1.1zM780.9 191.6h1.1v5.4h-1.1z"/>
<path fill="#0a12de" d="M800.5 199.9h1.7v1.2h-1.7zM799.4 205.2h2.2v1.2h-2.2zM798.9 203.7h1.3v1.2h-1.3zM799.9 200.3h1.2v2.1h-1.2zM796.6 200h1v1.8h-1zM800.8 198.2h1.2v1.2h-1.2z"/>
<path fill="#2f2b31" d="M774.4 192.8h6v3h-6z"/>
<rect x="728.9" y="281.8" width="9.1" height="9.5" fill="url(#bga)"/>
<path fill="#f2d000" d="M728.9 281.8h9.1v.9h-9.1zM728.9 290.4h9.1v.9h-9.1zM728.9 282.7h.9v7.7h-.9zM737.1 282.7h.9v7.7h-.9z"/>
<path fill="#0a12de" d="M735.1 287.6h1.4v1.2h-1.4zM731.2 287.4h2.1v1h-2.1zM733.2 287.8h1.5v1.2h-1.5zM734.3 285.3h2.2v1.2h-2.2z"/>
<rect x="728" y="295.8" width="4.9" height="5" fill="url(#bga)"/>
<path fill="#f2d000" d="M697.3 280.9h19.8v19.9h-19.8z"/>
<path fill="#2f2b31" d="M698.2 281.8h18v18.1h-18z"/>
<path fill="#f2d000" d="M699.3 281.8h1v1.7h-1zM699.3 298.2h1v1.7h-1zM701.1 281.8h1v1.7h-1zM701.1 298.2h1v1.7h-1zM702.8 281.8h1v1.7h-1zM702.8 298.2h1v1.7h-1zM704.6 281.8h1v1.7h-1zM704.6 298.2h1v1.7h-1zM706.3 281.8h1v1.7h-1zM706.3 298.2h1v1.7h-1zM708.1 281.8h1v1.7h-1zM708.1 298.2h1v1.7h-1zM709.8 281.8h1v1.7h-1zM709.8 298.2h1v1.7h-1zM711.6 281.8h1v1.7h-1zM711.6 298.2h1v1.7h-1zM713.3 281.8h1v1.7h-1zM713.3 298.2h1v1.7h-1zM698.2 282.9h1.7v1h-1.7zM714.5 282.9h1.7v1h-1.7zM698.2 284.7h1.7v1h-1.7zM714.5 284.7h1.7v1h-1.7zM698.2 286.4h1.7v1h-1.7zM714.5 286.4h1.7v1h-1.7zM698.2 288.2h1.7v1h-1.7zM714.5 288.2h1.7v1h-1.7zM698.2 290h1.7v1h-1.7zM714.5 290h1.7v1h-1.7zM698.2 291.7h1.7v1h-1.7zM714.5 291.7h1.7v1h-1.7zM698.2 293.5h1.7v1h-1.7zM714.5 293.5h1.7v1h-1.7zM698.2 295.3h1.7v1h-1.7zM714.5 295.3h1.7v1h-1.7zM698.2 297h1.7v1h-1.7zM714.5 297h1.7v1h-1.7zM798.9 142.5h14.7v14.4h-14.7z"/>
<path fill="#b0b0b4" d="M701 284.6h12.4v12.5h-12.4z"/>
<path fill="#2f2b31" d="M799.8 143.4h12.9v12.6h-12.9z"/>
<path fill="#f2d000" d="M800.9 143.4h1v1.7h-1zM800.9 154.3h1v1.7h-1zM802.7 143.4h1v1.7h-1zM802.7 154.3h1v1.7h-1zM804.5 143.4h1v1.7h-1zM804.5 154.3h1v1.7h-1zM806.2 143.4h1v1.7h-1zM806.2 154.3h1v1.7h-1zM808 143.4h1v1.7h-1zM808 154.3h1v1.7h-1zM809.8 143.4h1v1.7h-1zM809.8 154.3h1v1.7h-1zM799.8 144.5h1.7v1h-1.7zM811 144.5h1.7v1h-1.7zM799.8 146.2h1.7v1h-1.7zM811 146.2h1.7v1h-1.7zM799.8 148h1.7v1h-1.7zM811 148h1.7v1h-1.7zM799.8 149.7h1.7v1h-1.7zM811 149.7h1.7v1h-1.7zM799.8 151.4h1.7v1h-1.7zM811 151.4h1.7v1h-1.7zM799.8 153.2h1.7v1h-1.7zM811 153.2h1.7v1h-1.7zM724.6 81.1h25.2v15.9h-25.2z"/>
<path fill="#b0b0b4" d="M802.1 145.7h8.3v8h-8.3z"/>
<path fill="#2f2b31" d="M726 86h22.4v6.3h-22.4z"/>
<path fill="#b0b0b4" d="M726 87h22.4v4.3h-22.4z"/>
<path fill="#2f2b31" d="M726.1 83.4h.9v2.6h-.9zM726.1 92.3h.9v2.6h-.9zM729.2 83.4h.9v2.6h-.9zM729.2 92.3h.9v2.6h-.9zM732.3 83.4h.9v2.6h-.9zM732.3 92.3h.9v2.6h-.9zM735.4 83.4h.9v2.6h-.9zM735.4 92.3h.9v2.6h-.9zM738.5 83.4h.9v2.6h-.9zM738.5 92.3h.9v2.6h-.9zM741.6 83.4h.9v2.6h-.9zM741.6 92.3h.9v2.6h-.9zM744.7 83.4h.9v2.6h-.9zM744.7 92.3h.9v2.6h-.9zM747.8 83.4h.9v2.6h-.9zM747.8 92.3h.9v2.6h-.9z"/>
<path fill="#f2d000" d="M747.9 114h10.9v1h-10.9zM747.9 134.7h10.9v1h-10.9zM747.9 115h1v19.7h-1zM757.8 115h1v19.7h-1zM749.9 143.9h10v1h-10zM749.9 173.6h10v1h-10zM749.9 144.9h1v28.7h-1zM758.9 144.9h1v28.7h-1zM771 135h11.7v1h-11.7zM771 171.1h11.7v1h-11.7zM771 136h1v35.1h-1zM781.7 136h1v35.1h-1zM682.9 314.9h28.7v1h-28.7zM682.9 325.2h28.7v1h-28.7zM682.9 315.9h1v9.3h-1zM710.6 315.9h1v9.3h-1zM714.9 312.5h15.7v1h-15.7zM714.9 323.9h15.7v1h-15.7zM714.9 313.5h1v10.4h-1zM729.6 313.5h1v10.4h-1zM735.8 314.9h32.7v1h-32.7zM735.8 324.6h32.7v1h-32.7zM735.8 315.9h1v8.7h-1zM767.5 315.9h1v8.7h-1zM811.6 329.4h21.5v1h-21.5zM811.6 339.1h21.5v1h-21.5zM811.6 330.4h1v8.7h-1zM832.1 330.4h1v8.7h-1zM712.9 325.3h9.2v4.9h-9.2zM627.9 143.9h7.3v9.2h-7.3zM581.2 187.8h9.4v7.3h-9.4zM591.3 187.8h9.5v7.3h-9.5zM601.5 187.8h9.8v7.3h-9.8zM567 196.7h7.6v9.7h-7.6zM567 207.1h7.6v9h-7.6zM567 216.8h7.6v9.7h-7.6zM618.9 191.2h7.6v9.7h-7.6zM618.9 201.6h7.6v9h-7.6zM618.9 211.3h7.6v9h-7.6zM618.9 221h7.6v9.5h-7.6zM581.1 238.8h9.4v8.3h-9.4zM593.3 240.5h9v7.8h-9zM603.4 238.8h8.6v8.3h-8.6zM612.7 238.8h9.3v8.3h-9.3zM803.8 130.9h12.8v9h-12.8zM815.3 139.9h9.7v14.5h-9.7zM803.5 159.4h9.7v12.7h-9.7zM791 186.8h9.7v7.5h-9.7zM807 186.8h9.6v7.5h-9.6zM783.4 205.7h8.3v9.7h-8.3zM792.4 212h8.3v7.6h-8.3zM801.8 217.5h9.3v7.6h-9.3zM686.1 291.9h9.9v13.4h-9.9z"/>
<path fill="#0a12de" d="M742.5 82.2h3v1.8h-3z"/>
<path fill="#dcbc0a" d="M748.7 115h1.6v.9h-1.6zM756.4 115h1.6v.9h-1.6zM748.7 116.4h1.6v.9h-1.6zM756.4 116.4h1.6v.9h-1.6zM748.7 117.8h1.6v.9h-1.6zM756.4 117.8h1.6v.9h-1.6zM748.7 119.2h1.6v.9h-1.6zM756.4 119.2h1.6v.9h-1.6zM748.7 120.6h1.6v.9h-1.6zM756.4 120.6h1.6v.9h-1.6zM748.7 122h1.6v.9h-1.6zM756.4 122h1.6v.9h-1.6zM748.7 123.4h1.6v.9h-1.6zM756.4 123.4h1.6v.9h-1.6zM748.7 124.8h1.6v.9h-1.6zM756.4 124.8h1.6v.9h-1.6zM748.7 126.3h1.6v.9h-1.6zM756.4 126.3h1.6v.9h-1.6zM748.7 127.7h1.6v.9h-1.6zM756.4 127.7h1.6v.9h-1.6zM748.7 129.1h1.6v.9h-1.6zM756.4 129.1h1.6v.9h-1.6zM748.7 130.5h1.6v.9h-1.6zM756.4 130.5h1.6v.9h-1.6zM748.7 131.9h1.6v.9h-1.6zM756.4 131.9h1.6v.9h-1.6zM748.7 133.3h1.6v.9h-1.6zM756.4 133.3h1.6v.9h-1.6zM750.7 144.9h1.6v.9h-1.6zM757.5 144.9h1.6v.9h-1.6zM750.7 146.3h1.6v.9h-1.6zM757.5 146.3h1.6v.9h-1.6zM750.7 147.8h1.6v.9h-1.6zM757.5 147.8h1.6v.9h-1.6zM750.7 149.2h1.6v.9h-1.6zM757.5 149.2h1.6v.9h-1.6zM750.7 150.6h1.6v.9h-1.6zM757.5 150.6h1.6v.9h-1.6zM750.7 152.1h1.6v.9h-1.6zM757.5 152.1h1.6v.9h-1.6zM750.7 153.5h1.6v.9h-1.6zM757.5 153.5h1.6v.9h-1.6zM750.7 154.9h1.6v.9h-1.6zM757.5 154.9h1.6v.9h-1.6zM750.7 156.4h1.6v.9h-1.6zM757.5 156.4h1.6v.9h-1.6zM750.7 157.8h1.6v.9h-1.6zM757.5 157.8h1.6v.9h-1.6zM750.7 159.2h1.6v.9h-1.6zM757.5 159.2h1.6v.9h-1.6zM750.7 160.7h1.6v.9h-1.6zM757.5 160.7h1.6v.9h-1.6zM750.7 162.1h1.6v.9h-1.6zM757.5 162.1h1.6v.9h-1.6zM750.7 163.6h1.6v.9h-1.6zM757.5 163.6h1.6v.9h-1.6zM750.7 165h1.6v.9h-1.6zM757.5 165h1.6v.9h-1.6zM750.7 166.4h1.6v.9h-1.6zM757.5 166.4h1.6v.9h-1.6zM750.7 167.9h1.6v.9h-1.6zM757.5 167.9h1.6v.9h-1.6zM750.7 169.3h1.6v.9h-1.6zM757.5 169.3h1.6v.9h-1.6zM750.7 170.7h1.6v.9h-1.6zM757.5 170.7h1.6v.9h-1.6zM750.7 172.2h1.6v.9h-1.6zM757.5 172.2h1.6v.9h-1.6zM771.8 136h1.6v.9h-1.6zM780.3 136h1.6v.9h-1.6zM771.8 137.5h1.6v.9h-1.6zM780.3 137.5h1.6v.9h-1.6zM771.8 138.9h1.6v.9h-1.6zM780.3 138.9h1.6v.9h-1.6zM771.8 140.4h1.6v.9h-1.6zM780.3 140.4h1.6v.9h-1.6zM771.8 141.8h1.6v.9h-1.6zM780.3 141.8h1.6v.9h-1.6zM771.8 143.3h1.6v.9h-1.6zM780.3 143.3h1.6v.9h-1.6zM771.8 144.8h1.6v.9h-1.6zM780.3 144.8h1.6v.9h-1.6zM771.8 146.2h1.6v.9h-1.6zM780.3 146.2h1.6v.9h-1.6zM771.8 147.7h1.6v.9h-1.6zM780.3 147.7h1.6v.9h-1.6zM771.8 149.2h1.6v.9h-1.6zM780.3 149.2h1.6v.9h-1.6zM771.8 150.6h1.6v.9h-1.6zM780.3 150.6h1.6v.9h-1.6zM771.8 152.1h1.6v.9h-1.6zM780.3 152.1h1.6v.9h-1.6zM771.8 153.6h1.6v.9h-1.6zM780.3 153.6h1.6v.9h-1.6zM771.8 155h1.6v.9h-1.6zM780.3 155h1.6v.9h-1.6zM771.8 156.5h1.6v.9h-1.6zM780.3 156.5h1.6v.9h-1.6zM771.8 157.9h1.6v.9h-1.6zM780.3 157.9h1.6v.9h-1.6zM771.8 159.4h1.6v.9h-1.6zM780.3 159.4h1.6v.9h-1.6zM771.8 160.9h1.6v.9h-1.6zM780.3 160.9h1.6v.9h-1.6zM771.8 162.3h1.6v.9h-1.6zM780.3 162.3h1.6v.9h-1.6zM771.8 163.8h1.6v.9h-1.6zM780.3 163.8h1.6v.9h-1.6zM771.8 165.2h1.6v.9h-1.6zM780.3 165.2h1.6v.9h-1.6zM771.8 166.7h1.6v.9h-1.6zM780.3 166.7h1.6v.9h-1.6zM771.8 168.2h1.6v.9h-1.6zM780.3 168.2h1.6v.9h-1.6zM771.8 169.6h1.6v.9h-1.6zM780.3 169.6h1.6v.9h-1.6zM683.9 315.7h.9v1.6h-.9zM683.9 323.8h.9v1.6h-.9zM685.3 315.7h.9v1.6h-.9zM685.3 323.8h.9v1.6h-.9zM686.7 315.7h.9v1.6h-.9zM686.7 323.8h.9v1.6h-.9zM688.1 315.7h.9v1.6h-.9zM688.1 323.8h.9v1.6h-.9zM689.5 315.7h.9v1.6h-.9zM689.5 323.8h.9v1.6h-.9zM690.9 315.7h.9v1.6h-.9zM690.9 323.8h.9v1.6h-.9zM692.3 315.7h.9v1.6h-.9zM692.3 323.8h.9v1.6h-.9zM693.7 315.7h.9v1.6h-.9zM693.7 323.8h.9v1.6h-.9zM695.1 315.7h.9v1.6h-.9zM695.1 323.8h.9v1.6h-.9zM696.5 315.7h.9v1.6h-.9zM696.5 323.8h.9v1.6h-.9zM698 315.7h.9v1.6h-.9zM698 323.8h.9v1.6h-.9zM699.4 315.7h.9v1.6h-.9zM699.4 323.8h.9v1.6h-.9zM700.8 315.7h.9v1.6h-.9zM700.8 323.8h.9v1.6h-.9zM702.2 315.7h.9v1.6h-.9zM702.2 323.8h.9v1.6h-.9zM703.6 315.7h.9v1.6h-.9zM703.6 323.8h.9v1.6h-.9zM705 315.7h.9v1.6h-.9zM705 323.8h.9v1.6h-.9zM706.4 315.7h.9v1.6h-.9zM706.4 323.8h.9v1.6h-.9zM707.8 315.7h.9v1.6h-.9zM707.8 323.8h.9v1.6h-.9zM709.2 315.7h.9v1.6h-.9zM709.2 323.8h.9v1.6h-.9zM715.9 313.3h.9v1.6h-.9zM715.9 322.5h.9v1.6h-.9zM717.3 313.3h.9v1.6h-.9zM717.3 322.5h.9v1.6h-.9zM718.6 313.3h.9v1.6h-.9zM718.6 322.5h.9v1.6h-.9zM720 313.3h.9v1.6h-.9zM720 322.5h.9v1.6h-.9zM721.4 313.3h.9v1.6h-.9zM721.4 322.5h.9v1.6h-.9zM722.8 313.3h.9v1.6h-.9zM722.8 322.5h.9v1.6h-.9zM724.1 313.3h.9v1.6h-.9zM724.1 322.5h.9v1.6h-.9zM725.5 313.3h.9v1.6h-.9zM725.5 322.5h.9v1.6h-.9zM726.9 313.3h.9v1.6h-.9zM726.9 322.5h.9v1.6h-.9zM728.2 313.3h.9v1.6h-.9zM728.2 322.5h.9v1.6h-.9zM736.8 315.7h.9v1.6h-.9zM736.8 323.2h.9v1.6h-.9zM738.3 315.7h.9v1.6h-.9zM738.3 323.2h.9v1.6h-.9zM739.7 315.7h.9v1.6h-.9zM739.7 323.2h.9v1.6h-.9zM741.2 315.7h.9v1.6h-.9zM741.2 323.2h.9v1.6h-.9zM742.6 315.7h.9v1.6h-.9zM742.6 323.2h.9v1.6h-.9zM744.1 315.7h.9v1.6h-.9zM744.1 323.2h.9v1.6h-.9zM745.6 315.7h.9v1.6h-.9zM745.6 323.2h.9v1.6h-.9zM747 315.7h.9v1.6h-.9zM747 323.2h.9v1.6h-.9zM748.5 315.7h.9v1.6h-.9zM748.5 323.2h.9v1.6h-.9zM750 315.7h.9v1.6h-.9zM750 323.2h.9v1.6h-.9zM751.4 315.7h.9v1.6h-.9zM751.4 323.2h.9v1.6h-.9zM752.9 315.7h.9v1.6h-.9zM752.9 323.2h.9v1.6h-.9zM754.3 315.7h.9v1.6h-.9zM754.3 323.2h.9v1.6h-.9zM755.8 315.7h.9v1.6h-.9zM755.8 323.2h.9v1.6h-.9zM757.3 315.7h.9v1.6h-.9zM757.3 323.2h.9v1.6h-.9zM758.7 315.7h.9v1.6h-.9zM758.7 323.2h.9v1.6h-.9zM760.2 315.7h.9v1.6h-.9zM760.2 323.2h.9v1.6h-.9zM761.7 315.7h.9v1.6h-.9zM761.7 323.2h.9v1.6h-.9zM763.1 315.7h.9v1.6h-.9zM763.1 323.2h.9v1.6h-.9zM764.6 315.7h.9v1.6h-.9zM764.6 323.2h.9v1.6h-.9zM766 315.7h.9v1.6h-.9zM766 323.2h.9v1.6h-.9zM812.6 330.2h.9v1.6h-.9zM812.6 337.7h.9v1.6h-.9zM814 330.2h.9v1.6h-.9zM814 337.7h.9v1.6h-.9zM815.4 330.2h.9v1.6h-.9zM815.4 337.7h.9v1.6h-.9zM816.8 330.2h.9v1.6h-.9zM816.8 337.7h.9v1.6h-.9zM818.2 330.2h.9v1.6h-.9zM818.2 337.7h.9v1.6h-.9zM819.6 330.2h.9v1.6h-.9zM819.6 337.7h.9v1.6h-.9zM821 330.2h.9v1.6h-.9zM821 337.7h.9v1.6h-.9zM822.4 330.2h.9v1.6h-.9zM822.4 337.7h.9v1.6h-.9zM823.7 330.2h.9v1.6h-.9zM823.7 337.7h.9v1.6h-.9zM825.1 330.2h.9v1.6h-.9zM825.1 337.7h.9v1.6h-.9zM826.5 330.2h.9v1.6h-.9zM826.5 337.7h.9v1.6h-.9zM827.9 330.2h.9v1.6h-.9zM827.9 337.7h.9v1.6h-.9zM829.3 330.2h.9v1.6h-.9zM829.3 337.7h.9v1.6h-.9zM830.7 330.2h.9v1.6h-.9zM830.7 337.7h.9v1.6h-.9z"/>
<path fill="#5a7ad0" d="M750.3 116.4h.8v.8h-.8zM755.6 116.4h.8v.8h-.8zM750.3 122h.8v.8h-.8zM755.6 122h.8v.8h-.8zM750.3 127.7h.8v.8h-.8zM755.6 127.7h.8v.8h-.8zM750.3 133.3h.8v.8h-.8zM755.6 133.3h.8v.8h-.8zM752.3 146.3h.8v.8h-.8zM756.7 146.3h.8v.8h-.8zM752.3 152.1h.8v.8h-.8zM756.7 152.1h.8v.8h-.8zM752.3 157.8h.8v.8h-.8zM756.7 157.8h.8v.8h-.8zM752.3 163.6h.8v.8h-.8zM756.7 163.6h.8v.8h-.8zM752.3 169.3h.8v.8h-.8zM756.7 169.3h.8v.8h-.8zM773.4 137.5h.8v.8h-.8zM779.5 137.5h.8v.8h-.8zM773.4 143.3h.8v.8h-.8zM779.5 143.3h.8v.8h-.8zM773.4 149.2h.8v.8h-.8zM779.5 149.2h.8v.8h-.8zM773.4 155h.8v.8h-.8zM779.5 155h.8v.8h-.8zM773.4 160.9h.8v.8h-.8zM779.5 160.9h.8v.8h-.8zM773.4 166.7h.8v.8h-.8zM779.5 166.7h.8v.8h-.8zM685.3 317.3h.8v.8h-.8zM685.3 323h.8v.8h-.8zM690.9 317.3h.8v.8h-.8zM690.9 323h.8v.8h-.8zM696.5 317.3h.8v.8h-.8zM696.5 323h.8v.8h-.8zM702.2 317.3h.8v.8h-.8zM702.2 323h.8v.8h-.8zM707.8 317.3h.8v.8h-.8zM707.8 323h.8v.8h-.8zM717.3 314.9h.8v.8h-.8zM717.3 321.7h.8v.8h-.8zM722.8 314.9h.8v.8h-.8zM722.8 321.7h.8v.8h-.8zM728.2 314.9h.8v.8h-.8zM728.2 321.7h.8v.8h-.8zM738.3 317.3h.8v.8h-.8zM738.3 322.4h.8v.8h-.8zM744.1 317.3h.8v.8h-.8zM744.1 322.4h.8v.8h-.8zM750 317.3h.8v.8h-.8zM750 322.4h.8v.8h-.8zM755.8 317.3h.8v.8h-.8zM755.8 322.4h.8v.8h-.8zM761.7 317.3h.8v.8h-.8zM761.7 322.4h.8v.8h-.8zM814 331.8h.8v.8h-.8zM814 336.9h.8v.8h-.8zM819.6 331.8h.8v.8h-.8zM819.6 336.9h.8v.8h-.8zM825.1 331.8h.8v.8h-.8zM825.1 336.9h.8v.8h-.8zM830.7 331.8h.8v.8h-.8zM830.7 336.9h.8v.8h-.8z"/>
<path fill="#b0b0b4" d="M722.7 325.3h9.2v4.9h-9.2zM560 263h10.4v3.5h-10.4zM596.5 263h9.9v3.5h-9.9zM649 263h10v3.5h-10z"/>
<path fill="#d0ae08" d="M550.4 261.8h120v1.1h-120zM550.4 332.2h120v1.1h-120zM550.4 262.9h1.1v69.3h-1.1zM669.3 262.9h1.1v69.3h-1.1z"/>
<path fill="#2f2b31" d="M629 146.8h5.1v3.3h-5.1zM584.2 188.9h3.4v5.1h-3.4zM594.3 188.9h3.4v5.1h-3.4zM604.6 188.9h3.5v5.1h-3.5zM568.1 199.8h5.4v3.5h-5.4zM568.1 210h5.4v3.2h-5.4zM568.1 219.9h5.4v3.5h-5.4zM620 194.3h5.4v3.5h-5.4zM620 204.5h5.4v3.2h-5.4zM620 214.2h5.4v3.2h-5.4zM620 224h5.4v3.4h-5.4zM584.1 239.9h3.4v6.1h-3.4zM596.2 241.6h3.2v5.6h-3.2zM606.2 239.9h3.1v6.1h-3.1zM615.7 239.9h3.3v6.1h-3.3zM807.9 132h4.6v6.8h-4.6zM816.4 144.5h7.5v5.2h-7.5zM804.6 163.5h7.5v4.6h-7.5zM794.1 187.9h3.5v5.3h-3.5zM810.1 187.9h3.5v5.3h-3.5zM786.1 206.8h3v7.5h-3zM795.1 213.1h3v5.4h-3zM804.8 218.6h3.3v5.4h-3.3zM687.2 296.2h7.7v4.8h-7.7z"/>
<path fill="#c9a90a" d="M614.3 120.1h5.3v3.2h-5.3zM636.9 164.2h4.2v3.7h-4.2zM555.2 203h3.6v3.7h-3.6z"/>
<path fill="#f2d000" d="M663.9 299.5h5.5v4.4h-5.5zM581.1 276.9h4.2v3.1h-4.2zM581.5 295.6h3.5v2.8h-3.5zM581.5 304.6h3.5v2.8h-3.5zM580.8 314h4.5v3h-4.5zM610.6 281.7h3.4v2.5h-3.4zM612.7 290.7h3.1v4.2h-3.1zM612.7 299h3.1v4.2h-3.1zM610.6 305h3.4v2.4h-3.4zM610.6 309.4h3.4v2.5h-3.4zM549.9 296.8h2.4v3.2h-2.4zM555.1 297.4h2.4v3.2h-2.4zM559.6 300.9h2.4v3.2h-2.4zM566.5 297.4h2.4v3.2h-2.4zM571.3 300.9h2.4v3.2h-2.4zM573.7 297.4h2.4v3.2h-2.4zM576.2 296.8h2.4v3.2h-2.4zM576.2 301.6h2.4v3.2h-2.4zM621.6 294.3h2.4v3.2h-2.4zM626.7 295h2.4v3.2h-2.4zM631.3 298.4h2.4v3.2h-2.4zM638.2 295h2.4v3.2h-2.4zM642.6 298.4h2.4v3.2h-2.4zM645.4 295h2.4v3.2h-2.4zM647.9 294.3h2.4v3.2h-2.4zM647.9 299.1h2.4v3.2h-2.4zM569.1 93.8h1.3v3.6h-1.3zM661.2 85.6h2.5v2.5h-2.5zM661.2 89.9h2.5v2.5h-2.5zM612.7 105.6h1.4v1.4h-1.4zM616.1 111.3h1.5v3.2h-1.5zM623 108.8h1.2v1.2h-1.2zM623 110.7h1.2v1.2h-1.2zM624.9 110.7h1.2v1.2h-1.2zM624.9 120.1h2.3v2.3h-2.3zM624.8 124.7h1.3v1.3h-1.3zM616.8 126.7h1.3v1.3h-1.3zM618.8 128.7h1.3v1.3h-1.3zM620.8 128.7h1.3v1.3h-1.3zM624.8 128.7h1.3v1.3h-1.3zM642 120.1h2.2v2.2h-2.2zM642 123.6h2.2v2.2h-2.2zM642 130.1h2.2v2.2h-2.2zM642 132.8h2.2v2.2h-2.2zM645.5 123.6h2.2v2.2h-2.2zM648.7 122.7h1.2v1.2h-1.2zM648.7 124.8h1.2v1.2h-1.2zM626.4 132.9h1.6v2h-1.6zM628.8 132.9h1.6v2h-1.6zM631 132.9h1.6v2h-1.6zM633.3 132.9h1.6v2h-1.6zM568.3 124.6h1.5v1.5h-1.5zM570.5 124.6h1.5v1.5h-1.5zM601.2 131.9h2.2v2.2h-2.2zM603.7 131.9h2.2v2.2h-2.2zM607.4 131.9h2.2v2.2h-2.2zM606.5 137.1h1.3v5.5h-1.3zM598.8 141.6h2.2v2.2h-2.2zM612.3 141.6h2.2v2.2h-2.2zM614.7 141.6h2.2v2.2h-2.2zM618.5 142h2.2v2.2h-2.2zM623.3 146.4h2.3v2.3h-2.3zM623.3 150.5h2.3v2.3h-2.3zM623.3 154.7h2.3v2.3h-2.3zM549.2 142.3h1.6v1.6h-1.6zM552.1 142.3h1.6v1.6h-1.6zM552.1 149.2h1.6v1.6h-1.6zM549.2 152.2h1.6v1.6h-1.6zM552.1 152.2h1.6v1.6h-1.6zM563.7 142.4h2.5v2.8h-2.5zM560.2 146.1h2.5v2.8h-2.5zM567.4 151.8h1.2v1.2h-1.2zM569.3 151.8h1.2v1.2h-1.2zM571.2 151.8h1.2v1.2h-1.2zM575 151.8h1.2v1.2h-1.2zM576.9 151.8h1.2v1.2h-1.2zM580.7 151.8h1.2v1.2h-1.2zM582.6 151.8h1.2v1.2h-1.2zM590.2 151.8h1.2v1.2h-1.2zM571.2 153.7h1.2v1.2h-1.2zM575 153.7h1.2v1.2h-1.2zM578.8 153.7h1.2v1.2h-1.2zM580.7 153.7h1.2v1.2h-1.2zM582.6 153.7h1.2v1.2h-1.2zM584.5 153.7h1.2v1.2h-1.2zM594 153.7h1.2v1.2h-1.2zM569.3 155.6h1.2v1.2h-1.2zM571.2 155.6h1.2v1.2h-1.2zM573.1 155.6h1.2v1.2h-1.2zM575 155.6h1.2v1.2h-1.2zM580.7 155.6h1.2v1.2h-1.2zM584.5 155.6h1.2v1.2h-1.2zM594 155.6h1.2v1.2h-1.2zM567.4 157.5h1.2v1.2h-1.2zM569.3 157.5h1.2v1.2h-1.2zM573.1 157.5h1.2v1.2h-1.2zM578.8 157.5h1.2v1.2h-1.2zM580.7 157.5h1.2v1.2h-1.2zM582.6 157.5h1.2v1.2h-1.2zM584.5 157.5h1.2v1.2h-1.2zM592.1 157.5h1.2v1.2h-1.2zM560.5 159.4h1.3v1.3h-1.3zM562.5 159.4h1.3v1.3h-1.3zM566.5 159.4h1.3v1.3h-1.3zM560.5 161.4h1.3v1.3h-1.3zM562.5 161.4h1.3v1.3h-1.3zM564.5 161.4h1.3v1.3h-1.3zM566.5 161.4h1.3v1.3h-1.3zM562.5 163.4h1.3v1.3h-1.3zM566.5 163.4h1.3v1.3h-1.3zM576.7 159.4h1.3v1.3h-1.3zM580.7 159.4h1.3v1.3h-1.3zM578.7 161.4h1.3v1.3h-1.3zM584.7 161.4h1.3v1.3h-1.3zM586.7 161.4h1.3v1.3h-1.3zM578.7 163.4h1.3v1.3h-1.3zM584.7 163.4h1.3v1.3h-1.3zM570.8 165.8h1.5v1.5h-1.5zM572.9 165.8h1.5v1.5h-1.5zM593.3 168.8h2v2h-2zM596.4 168.8h2v2h-2zM596.1 168.8h1.2v1.2h-1.2zM598 170.7h1.2v1.2h-1.2zM598.3 173.6h1.6v4h-1.6zM624 150h2.2v2.2h-2.2zM624 154.1h2.2v2.2h-2.2zM630.9 154.1h2.2v2.2h-2.2zM624 157.6h2.2v2.2h-2.2zM627.5 157.6h2.2v2.2h-2.2zM627.5 161h2.2v2.2h-2.2zM630.9 161h2.2v2.2h-2.2zM630.9 164.5h2.2v2.2h-2.2zM634.4 164.5h2.2v2.2h-2.2zM630.9 168h2.2v2.2h-2.2zM634.4 168h2.2v2.2h-2.2zM622.8 161h1.2v1.2h-1.2zM624.7 162.9h1.2v1.2h-1.2zM613.4 167.4h1.3v1.3h-1.3zM615.4 167.4h1.3v1.3h-1.3zM617.4 167.4h1.3v1.3h-1.3zM621.4 167.4h1.3v1.3h-1.3zM625.4 167.4h1.3v1.3h-1.3zM613.4 169.4h1.3v1.3h-1.3zM615.4 169.4h1.3v1.3h-1.3zM617.4 169.4h1.3v1.3h-1.3zM619.4 169.4h1.3v1.3h-1.3zM623.4 169.4h1.3v1.3h-1.3zM625.4 169.4h1.3v1.3h-1.3zM617.4 171.4h1.3v1.3h-1.3zM619.4 171.4h1.3v1.3h-1.3zM621.4 171.4h1.3v1.3h-1.3zM625.4 171.4h1.3v1.3h-1.3zM613 175.3h2v2h-2zM576.6 187.4h2v2h-2zM569.7 193.9h2v2h-2zM573.2 193.9h2v2h-2zM576.6 193.9h2v2h-2zM563.5 196.8h2.2v2.2h-2.2zM580.2 200.5h1.6v1.6h-1.6zM563.5 200.5h2.2v2.2h-2.2zM575.6 201.5h2.4v2.4h-2.4zM580.2 204.3h1.6v1.6h-1.6zM563.5 204.2h2.2v2.2h-2.2zM580.2 208h1.6v1.6h-1.6zM563.5 208h2.2v2.2h-2.2zM575.6 209h2.4v2.4h-2.4zM580.2 211.7h1.6v1.6h-1.6zM563.5 211.7h2.2v2.2h-2.2zM580.2 215.5h1.6v1.6h-1.6zM563.5 215.4h2.2v2.2h-2.2zM575.6 216.4h2.4v2.4h-2.4zM580.2 219.2h1.6v1.6h-1.6zM563.5 219.2h2.2v2.2h-2.2zM580.2 222.9h1.6v1.6h-1.6zM563.5 222.9h2.2v2.2h-2.2zM575.6 223.9h2.4v2.4h-2.4zM580.2 226.7h1.6v1.6h-1.6zM563.5 226.7h2.2v2.2h-2.2zM580.2 230.4h1.6v1.6h-1.6zM588.1 195.7h3v3h-3zM591.8 195.7h3v3h-3zM606 195.7h3v3h-3zM591.4 200.7h1.8v1.8h-1.8zM594.5 200.7h1.8v1.8h-1.8zM601.4 200.7h1.8v1.8h-1.8zM604.8 200.7h1.8v1.8h-1.8zM613.9 198.8h3v3h-3zM610.7 203.6h1.7v1.7h-1.7zM613.9 202.7h3v3h-3zM610.7 211.4h1.7v1.7h-1.7zM613.9 210.5h3v3h-3zM613.9 214.3h3v3h-3zM610.7 219.2h1.7v1.7h-1.7zM613.9 222.1h3v3h-3zM610.7 226.9h1.7v1.7h-1.7zM613.9 226h3v3h-3zM626 187.4h3v3h-3z"/>
<path fill="#b0b0b4" d="M569 329.4h14v3.5h-14zM597.4 329.4h13.9v3.5h-13.9zM649.3 329.4h13.9v3.5h-13.9zM663.9 265.4h4.8v7.4h-4.8zM662 275.5h3.3v15.2h-3.3zM666.6 277h2.1v4.7h-2.1zM581.8 286.6h3.2v2.1h-3.2zM610.6 286.6h3.4v2.1h-3.4zM552 301h2.6v2.6h-2.6zM622.5 298.6h3v3h-3zM612.7 107.8h1.4v1.4h-1.4zM621.1 108.8h1.2v1.2h-1.2zM619.2 110.7h1.2v1.2h-1.2zM626.8 110.7h1.2v1.2h-1.2zM621.2 120.1h2.3v2.3h-2.3zM620.8 124.7h1.3v1.3h-1.3zM620.8 126.7h1.3v1.3h-1.3zM642 126.8h2.2v2.2h-2.2zM645.5 120.1h2.2v2.2h-2.2zM645.5 130.1h2.2v2.2h-2.2zM601.9 141.6h2.2v2.2h-2.2zM604 141.6h2.2v2.2h-2.2zM608.1 141.6h2.2v2.2h-2.2zM560.2 142.4h2.5v2.8h-2.5zM563.7 146.1h2.5v2.8h-2.5zM590.7 148.5h1.6v1.6h-1.6zM592.9 148.5h1.6v1.6h-1.6zM594 151.8h1.2v1.2h-1.2zM567.4 153.7h1.2v1.2h-1.2zM588.3 153.7h1.2v1.2h-1.2zM578.8 155.6h1.2v1.2h-1.2zM586.4 155.6h1.2v1.2h-1.2zM592.1 155.6h1.2v1.2h-1.2zM571.2 157.5h1.2v1.2h-1.2zM575 157.5h1.2v1.2h-1.2zM576.9 157.5h1.2v1.2h-1.2zM560.5 163.4h1.3v1.3h-1.3zM578.7 159.4h1.3v1.3h-1.3zM584.7 159.4h1.3v1.3h-1.3zM586.7 159.4h1.3v1.3h-1.3zM576.7 163.4h1.3v1.3h-1.3zM589.5 168.8h2v2h-2zM591.6 171.5h2v2h-2zM596.1 170.7h1.2v1.2h-1.2zM624 146.5h2.2v2.2h-2.2zM627.5 154.1h2.2v2.2h-2.2zM634.4 154.1h2.2v2.2h-2.2zM630.9 157.6h2.2v2.2h-2.2zM634.4 157.6h2.2v2.2h-2.2zM627.5 164.5h2.2v2.2h-2.2zM630.9 171.7h2.2v2.2h-2.2zM622.8 162.9h1.2v1.2h-1.2zM619.4 167.4h1.3v1.3h-1.3zM623.4 171.4h1.3v1.3h-1.3zM616.2 175.3h2v2h-2zM569.7 187.4h2v2h-2zM573.2 187.4h2v2h-2zM569.7 190.5h2v2h-2zM573.2 190.5h2v2h-2zM576.6 190.5h2v2h-2zM559.7 196.8h2.2v2.2h-2.2zM575.6 197.8h2.4v2.4h-2.4zM559.7 200.5h2.2v2.2h-2.2zM559.7 204.2h2.2v2.2h-2.2zM575.6 205.2h2.4v2.4h-2.4zM559.7 208h2.2v2.2h-2.2zM559.7 211.7h2.2v2.2h-2.2zM575.6 212.7h2.4v2.4h-2.4zM559.7 215.4h2.2v2.2h-2.2zM559.7 219.2h2.2v2.2h-2.2zM575.6 220.2h2.4v2.4h-2.4zM559.7 222.9h2.2v2.2h-2.2zM559.7 226.7h2.2v2.2h-2.2zM575.6 227.7h2.4v2.4h-2.4zM583.1 195.7h3v3h-3zM596.6 195.7h3v3h-3zM600.8 195.7h3v3h-3zM587.8 200.7h1.8v1.8h-1.8zM597.9 200.7h1.8v1.8h-1.8zM613.9 195h3v3h-3zM610.7 199.8h1.7v1.7h-1.7zM610.7 207.5h1.7v1.7h-1.7zM613.9 206.6h3v3h-3zM610.7 215.3h1.7v1.7h-1.7zM613.9 218.2h3v3h-3zM610.7 223h1.7v1.7h-1.7zM610.7 230.8h1.7v1.7h-1.7zM629.6 187.4h3v3h-3z"/>
<path fill="#0a12de" d="M602.3 279h6.5v3.5h-6.5zM602.3 283.8h6.5v3.5h-6.5zM602.3 288.4h6.5v3.5h-6.5zM602.3 293.1h6.5v3.5h-6.5zM602.3 297.7h6.5v3.5h-6.5zM602.3 302.5h6.5v3.5h-6.5zM602.3 307.1h6.5v3.5h-6.5zM602.3 311.5h6.5v3.5h-6.5zM549.1 144.7h4.4v4.4h-4.4z"/>
<path fill="#8f8d78" d="M570.7 160.1h4.7v4.8h-4.7z"/>
<path fill="#f2d000" d="M632.3 186.3h3v3h-3zM635 187.1h3v3h-3z"/>
<path fill="#b0b0b4" d="M640.5 187.1h3v3h-3z"/>
<path fill="#f2d000" d="M642.6 186.3h3v3h-3zM646 187.1h3v3h-3zM633.1 187.1h1.4v1.4h-1.4zM628.3 191.3h2v2h-2zM628.3 195.3h2v2h-2zM634.9 195.3h2v2h-2zM628.3 199.2h2v2h-2zM634.9 199.2h2v2h-2zM628.3 203.4h2v2h-2zM627.7 213.8h1.8v1.8h-1.8zM628.7 222.8a2 2 0 1 0 4 0a2 2 0 1 0 -4 0zM635.3 222.8a2 2 0 1 0 4 0a2 2 0 1 0 -4 0zM646 216.8a2 2 0 1 0 4 0a2 2 0 1 0 -4 0zM652.2 216.8a2 2 0 1 0 4 0a2 2 0 1 0 -4 0zM646 222.8a2 2 0 1 0 4 0a2 2 0 1 0 -4 0zM652.2 222.8a2 2 0 1 0 4 0a2 2 0 1 0 -4 0zM646 228.6a2 2 0 1 0 4 0a2 2 0 1 0 -4 0zM652.2 228.6a2 2 0 1 0 4 0a2 2 0 1 0 -4 0zM628.7 228.6a2 2 0 1 0 4 0a2 2 0 1 0 -4 0zM657.4 219.3a1.6 1.6 0 1 0 3.2 0a1.6 1.6 0 1 0 -3.2 0zM657.4 223.3a1.6 1.6 0 1 0 3.2 0a1.6 1.6 0 1 0 -3.2 0zM665 211.5h3.2v3.2h-3.2zM665 221h1.3v1.3h-1.3zM666.9 221h1.3v1.3h-1.3zM665 222.9h1.3v1.3h-1.3zM665 224.8h1.3v1.3h-1.3zM666.9 226.7h1.3v1.3h-1.3zM666.9 228.6h1.3v1.3h-1.3zM673.3 199.6h1.3v1.3h-1.3zM675.3 199.6h1.3v1.3h-1.3zM677.3 199.6h1.3v1.3h-1.3zM673.3 201.9h1.3v1.3h-1.3zM675.3 201.9h1.3v1.3h-1.3zM677.3 201.9h1.3v1.3h-1.3zM691.5 199.8h1.4v1.4h-1.4zM691.5 202h1.4v1.4h-1.4zM728.1 99.1h2.2v2.2h-2.2zM731.2 98.8h1.2v1.2h-1.2zM733.1 98.8h1.2v1.2h-1.2zM735 98.8h1.2v1.2h-1.2zM731.2 100.7h1.2v1.2h-1.2zM733.1 100.7h1.2v1.2h-1.2zM735 100.7h1.2v1.2h-1.2zM744 98.8h1.2v1.2h-1.2zM745.9 98.8h1.2v1.2h-1.2zM744 100.7h1.2v1.2h-1.2zM745.9 100.7h1.2v1.2h-1.2zM737.8 110.7h2.2v2.2h-2.2zM737.8 114.6h2.2v2.2h-2.2zM741.1 114.6h2.2v2.2h-2.2zM742.1 123.8h1.2v1.2h-1.2zM761.1 114.3h1.2v1.2h-1.2zM761.1 116.2h1.2v1.2h-1.2zM761.1 118.1h1.2v1.2h-1.2zM763 118.1h1.2v1.2h-1.2zM761.1 121.9h1.2v1.2h-1.2zM763 121.9h1.2v1.2h-1.2zM763 123.8h1.2v1.2h-1.2zM761.1 125.7h1.2v1.2h-1.2zM763 125.7h1.2v1.2h-1.2zM795.6 119.6h1.2v1.2h-1.2zM797.5 119.6h1.2v1.2h-1.2zM795.6 121.5h1.2v1.2h-1.2zM797.5 121.5h1.2v1.2h-1.2zM800.7 119.6h1.2v1.2h-1.2zM802.6 119.6h1.2v1.2h-1.2zM800.7 121.5h1.2v1.2h-1.2zM806 119.6h1.2v1.2h-1.2zM807.9 119.6h1.2v1.2h-1.2zM806 121.5h1.2v1.2h-1.2zM799.2 137h3v3h-3zM817.5 137h3v3h-3zM740.1 141.9h2.2v2.2h-2.2zM738.9 147.2h1.3v1.3h-1.3zM740.8 147.2h1.3v1.3h-1.3zM738.9 149.1h1.3v1.3h-1.3zM740.8 149.1h1.3v1.3h-1.3zM738.9 152h1.3v1.3h-1.3zM740.8 152h1.3v1.3h-1.3zM738.9 153.9h1.3v1.3h-1.3zM740.8 153.9h1.3v1.3h-1.3zM738.9 157.9h1.3v1.3h-1.3zM740.8 157.9h1.3v1.3h-1.3zM738.9 159.8h1.3v1.3h-1.3zM740.8 159.8h1.3v1.3h-1.3zM738.9 163.4h1.3v1.3h-1.3zM740.8 163.4h1.3v1.3h-1.3zM738.9 165.3h1.3v1.3h-1.3zM740.8 165.3h1.3v1.3h-1.3zM738.9 169.3h1.3v1.3h-1.3zM740.8 169.3h1.3v1.3h-1.3zM738.9 171.2h1.3v1.3h-1.3zM740.8 171.2h1.3v1.3h-1.3zM761.7 150.3h1.2v1.2h-1.2zM765.6 150.3h1.2v1.2h-1.2zM761.7 154.2h1.2v1.2h-1.2zM765.6 154.2h1.2v1.2h-1.2zM767.5 154.2h1.2v1.2h-1.2zM761.7 158.1h1.2v1.2h-1.2zM765.6 158.1h1.2v1.2h-1.2zM767.5 160h1.2v1.2h-1.2zM761.7 162h1.2v1.2h-1.2zM765.6 162h1.2v1.2h-1.2zM765.6 163.9h1.2v1.2h-1.2zM763.6 165.9h1.2v1.2h-1.2zM765.6 165.9h1.2v1.2h-1.2zM767.5 165.9h1.2v1.2h-1.2zM761.7 167.8h1.2v1.2h-1.2zM763.6 167.8h1.2v1.2h-1.2zM765.6 167.8h1.2v1.2h-1.2zM767.5 169.8h1.2v1.2h-1.2z"/>
<path fill="#b0b0b4" d="M651.3 187.1h3v3h-3zM630 188.2h1.4v1.4h-1.4zM631.7 191.3h2v2h-2zM631.7 195.3h2v2h-2zM638.7 195.3h2v2h-2zM631.7 199.2h2v2h-2zM638.7 199.2h2v2h-2zM631.7 203.4h2v2h-2zM631.1 213.8h1.8v1.8h-1.8zM657.4 211.8h3.2v3.2h-3.2zM665 206.2h3.2v3.2h-3.2zM657.7 226.6h2.6v2.6h-2.6zM666.9 224.8h1.3v1.3h-1.3zM665 226.7h1.3v1.3h-1.3zM728.1 102.8h2.2v2.2h-2.2zM741.1 110.7h2.2v2.2h-2.2zM740.1 117.8h1.2v1.2h-1.2zM740.1 119.8h1.2v1.2h-1.2zM740.1 121.8h1.2v1.2h-1.2zM742.1 121.8h1.2v1.2h-1.2zM740.1 123.8h1.2v1.2h-1.2zM763 114.3h1.2v1.2h-1.2zM763 116.2h1.2v1.2h-1.2zM761.1 123.8h1.2v1.2h-1.2zM807.9 121.5h1.2v1.2h-1.2zM799.2 131.9h3v3h-3zM817.5 131.9h3v3h-3zM736.4 141.9h2.2v2.2h-2.2zM765.6 148.3h1.2v1.2h-1.2zM763.6 154.2h1.2v1.2h-1.2zM765.6 156.1h1.2v1.2h-1.2zM763.6 160h1.2v1.2h-1.2zM765.6 160h1.2v1.2h-1.2zM767.5 162h1.2v1.2h-1.2zM763.6 163.9h1.2v1.2h-1.2zM767.5 167.8h1.2v1.2h-1.2zM761.7 169.8h1.2v1.2h-1.2zM765.6 169.8h1.2v1.2h-1.2z"/>
<path fill="#c9a90a" d="M761.7 162.8h3.7v4.2h-3.7z"/>
<path fill="#f2d000" d="M764.2 171.9h2v2h-2zM783.8 134.8h1.2v1.2h-1.2zM785.7 134.8h1.2v1.2h-1.2zM783.8 136.7h1.2v1.2h-1.2zM785.7 136.7h1.2v1.2h-1.2zM783.8 138.6h1.2v1.2h-1.2zM785.7 138.6h1.2v1.2h-1.2zM783.8 140.5h1.2v1.2h-1.2zM785.7 140.5h1.2v1.2h-1.2zM783.8 142.4h1.2v1.2h-1.2zM785.7 142.4h1.2v1.2h-1.2zM783.8 144.3h1.2v1.2h-1.2zM785.7 144.3h1.2v1.2h-1.2zM783.8 146.2h1.2v1.2h-1.2zM785.7 146.2h1.2v1.2h-1.2zM783.8 148.1h1.2v1.2h-1.2zM785.7 148.1h1.2v1.2h-1.2zM783.8 150h1.2v1.2h-1.2zM785.7 150h1.2v1.2h-1.2zM783.8 151.9h1.2v1.2h-1.2zM783.8 153.8h1.2v1.2h-1.2zM785.7 153.8h1.2v1.2h-1.2zM785.7 155.7h1.2v1.2h-1.2zM783.8 157.6h1.2v1.2h-1.2zM785.7 157.6h1.2v1.2h-1.2zM783.8 140h1.2v1.2h-1.2zM783.8 141.9h1.2v1.2h-1.2zM785.7 141.9h1.2v1.2h-1.2zM783.8 143.8h1.2v1.2h-1.2zM785.7 143.8h1.2v1.2h-1.2zM783.8 145.7h1.2v1.2h-1.2zM783.8 147.6h1.2v1.2h-1.2zM785.7 147.6h1.2v1.2h-1.2zM783.8 149.5h1.2v1.2h-1.2zM785.7 151.4h1.2v1.2h-1.2zM783.8 153.3h1.2v1.2h-1.2zM785.7 153.3h1.2v1.2h-1.2z"/>
<path fill="#b0b0b4" d="M764.2 175.7h2v2h-2zM783.8 155.7h1.2v1.2h-1.2zM785.7 149.5h1.2v1.2h-1.2z"/>
<path fill="#f2d000" d="M783.8 155.2h1.2v1.2h-1.2zM785.7 155.2h1.2v1.2h-1.2zM783.8 157.1h1.2v1.2h-1.2zM783.8 159h1.2v1.2h-1.2zM785.7 159h1.2v1.2h-1.2zM783.8 160.9h1.2v1.2h-1.2zM785.7 160.9h1.2v1.2h-1.2zM783.8 162.8h1.2v1.2h-1.2zM785.7 162.8h1.2v1.2h-1.2zM785.7 164.7h1.2v1.2h-1.2zM783.8 166.6h1.2v1.2h-1.2zM785.7 166.6h1.2v1.2h-1.2zM783.8 168.5h1.2v1.2h-1.2zM785.7 168.5h1.2v1.2h-1.2zM783.8 170.4h1.2v1.2h-1.2zM785.7 170.4h1.2v1.2h-1.2zM783.8 172.3h1.2v1.2h-1.2zM785.7 172.3h1.2v1.2h-1.2zM799.9 160h3v3h-3zM799.9 164.4h3v3h-3zM813.8 159.3h3v3h-3zM818.6 159.3h3v3h-3zM815.9 154.5h2.8v2.8h-2.8zM791.6 182.1h3v3h-3zM812.4 182.1h3v3h-3zM801.7 190.8h3v3h-3zM766.8 190.8h1.4v1.4h-1.4zM770 190.8h1.4v1.4h-1.4zM783.4 191.2h1.4v1.4h-1.4zM783.4 193.6h1.4v1.4h-1.4zM773 199.5h1.4v1.4h-1.4zM783.8 198.1h1.4v1.4h-1.4zM786.2 198.1h1.4v1.4h-1.4zM770.7 207.1h1.4v1.4h-1.4zM773.2 207.1h1.4v1.4h-1.4zM766.8 193.9h2.3v2.3h-2.3zM767.1 197.3h2.3v2.3h-2.3zM787.9 200.8h3v3h-3zM778.2 206.3h3v3h-3zM818.4 187.4h2v2h-2zM818.4 190.8h2v2h-2zM818.4 194.2h2v2h-2zM818.4 197.6h2v2h-2zM818.4 201h2v2h-2zM818.4 204.4h2v2h-2zM818.4 207.8h2v2h-2zM818.4 211.2h2v2h-2zM810.2 196.5h1.8v1.8h-1.8zM810.2 200.1h1.8v1.8h-1.8zM810.2 203.7h1.8v1.8h-1.8zM810.2 207.3h1.8v1.8h-1.8zM825.2 197.7h2.2v2.2h-2.2zM801.7 212.5h3v3h-3zM812.1 216h3v3h-3zM787.9 216.3h3v3h-3zM787.5 221.3h3v3h-3zM791.6 221.3h3v3h-3zM779.2 222.9h1.6v1.6h-1.6zM781.2 225.7h1.6v1.6h-1.6zM784.7 225.7h1.6v1.6h-1.6zM806.8 226.7h1.6v1.6h-1.6zM818.6 213.9h1.6v1.6h-1.6zM820.4 213.9h1.6v1.6h-1.6z"/>
<path fill="#b0b0b4" d="M785.7 157.1h1.2v1.2h-1.2zM783.8 164.7h1.2v1.2h-1.2zM794.4 160h3v3h-3zM794.4 164.4h3v3h-3zM813.8 164.1h3v3h-3zM818.6 164.1h3v3h-3zM821.1 154.5h2.8v2.8h-2.8zM796.9 182.1h3v3h-3zM807.3 182.1h3v3h-3zM801.7 185.6h3v3h-3zM786.2 193h1.4v1.4h-1.4zM786.2 195.8h1.4v1.4h-1.4zM773 201.9h1.4v1.4h-1.4zM775.4 207.1h1.4v1.4h-1.4zM775.4 205.5h1.4v1.4h-1.4zM763.6 197.3h2.3v2.3h-2.3zM778.2 200.8h3v3h-3zM783 200.8h3v3h-3zM821.9 187.4h2v2h-2zM821.9 190.8h2v2h-2zM821.9 194.2h2v2h-2zM821.9 197.6h2v2h-2zM821.9 201h2v2h-2zM821.9 204.4h2v2h-2zM821.9 207.8h2v2h-2zM821.9 211.2h2v2h-2zM814.1 196.5h1.8v1.8h-1.8zM814.1 200.1h1.8v1.8h-1.8zM814.1 203.7h1.8v1.8h-1.8zM814.1 207.3h1.8v1.8h-1.8zM825.2 201.5h2.2v2.2h-2.2zM811.7 210.7h3v3h-3zM806.8 212.5h3v3h-3zM782.6 216.3h3v3h-3zM782.6 221.3h3v3h-3zM796.9 221.3h3v3h-3zM779.2 219.2h1.6v1.6h-1.6zM788.2 226.4h1.6v1.6h-1.6zM799.9 226.7h1.6v1.6h-1.6zM803.4 226.7h1.6v1.6h-1.6z"/>
<path fill="#c9a90a" d="M740.2 215.4h1.4v7.6h-1.4z"/>
<path fill="#f2d000" d="M793.1 226.5h7.6v3.7h-7.6zM755.1 215.8a2 2 0 1 0 4 0a2 2 0 1 0 -4 0zM760.2 215.8a2 2 0 1 0 4 0a2 2 0 1 0 -4 0zM755.1 221a2 2 0 1 0 4 0a2 2 0 1 0 -4 0zM760.2 221a2 2 0 1 0 4 0a2 2 0 1 0 -4 0zM760.2 226.1a2 2 0 1 0 4 0a2 2 0 1 0 -4 0zM738.1 209.1h3.5v3.5h-3.5zM738 215.4h1.4v7.6h-1.4zM737.8 225.1h1.3v1.3h-1.3zM739.7 225.1h1.3v1.3h-1.3zM737.8 227h1.3v1.3h-1.3zM739.7 227h1.3v1.3h-1.3zM737.8 228.9h1.3v1.3h-1.3zM739.7 228.9h1.3v1.3h-1.3zM691.4 199.8h1.3v1.3h-1.3zM691.4 202h1.3v1.3h-1.3zM701.8 199.8h1.3v1.3h-1.3zM701.8 202h1.3v1.3h-1.3zM718.2 199.5h1.3v1.3h-1.3zM720.1 199.5h1.3v1.3h-1.3zM722 199.5h1.3v1.3h-1.3zM723.9 199.5h1.3v1.3h-1.3zM725.8 199.5h1.3v1.3h-1.3zM727.7 199.5h1.3v1.3h-1.3zM718.2 201.4h1.3v1.3h-1.3zM722 201.4h1.3v1.3h-1.3zM723.9 201.4h1.3v1.3h-1.3zM674.1 269.6h1.2v1.2h-1.2zM677.7 269.6h1.2v1.2h-1.2zM681.3 269.6h1.2v1.2h-1.2zM686.7 269.6h1.2v1.2h-1.2zM688.5 269.6h1.2v1.2h-1.2zM690.3 269.6h1.2v1.2h-1.2zM674.1 271.4h1.2v1.2h-1.2zM675.9 271.4h1.2v1.2h-1.2zM677.7 271.4h1.2v1.2h-1.2zM679.5 271.4h1.2v1.2h-1.2zM681.3 271.4h1.2v1.2h-1.2zM686.7 271.4h1.2v1.2h-1.2zM688.5 271.4h1.2v1.2h-1.2zM695.8 269.6h1.2v1.2h-1.2zM697.6 269.6h1.2v1.2h-1.2zM694 271.4h1.2v1.2h-1.2zM695.8 271.4h1.2v1.2h-1.2zM697.6 271.4h1.2v1.2h-1.2zM710.8 269.6h1.2v1.2h-1.2zM709 271.4h1.2v1.2h-1.2zM718.5 269.6h1.2v1.2h-1.2zM720.3 269.6h1.2v1.2h-1.2zM723.9 269.6h1.2v1.2h-1.2zM725.7 269.6h1.2v1.2h-1.2zM714.9 271.4h1.2v1.2h-1.2zM716.7 271.4h1.2v1.2h-1.2zM718.5 271.4h1.2v1.2h-1.2zM720.3 271.4h1.2v1.2h-1.2zM722.1 271.4h1.2v1.2h-1.2zM723.9 271.4h1.2v1.2h-1.2zM725.7 271.4h1.2v1.2h-1.2zM702.7 270.2h2.2v2.2h-2.2zM705.7 270h1.4v1.4h-1.4zM674.1 274.6h1.2v1.2h-1.2zM681.3 274.6h1.2v1.2h-1.2zM683.1 274.6h1.2v1.2h-1.2zM684.9 274.6h1.2v1.2h-1.2zM686.7 274.6h1.2v1.2h-1.2zM674.1 276.4h1.2v1.2h-1.2zM681.3 276.4h1.2v1.2h-1.2zM684.9 276.4h1.2v1.2h-1.2zM677.7 278.2h1.2v1.2h-1.2zM681.3 278.2h1.2v1.2h-1.2zM683.1 278.2h1.2v1.2h-1.2zM684.9 278.2h1.2v1.2h-1.2zM686.7 278.2h1.2v1.2h-1.2zM674.1 280h1.2v1.2h-1.2zM675.9 280h1.2v1.2h-1.2zM677.7 280h1.2v1.2h-1.2zM684.9 280h1.2v1.2h-1.2zM686.7 280h1.2v1.2h-1.2zM675.9 281.8h1.2v1.2h-1.2zM677.7 281.8h1.2v1.2h-1.2zM679.5 281.8h1.2v1.2h-1.2zM684.9 281.8h1.2v1.2h-1.2zM686.7 281.8h1.2v1.2h-1.2zM692 275.9h1.2v1.2h-1.2zM699.9 274.9h1.2v1.2h-1.2zM701.7 274.9h1.2v1.2h-1.2zM703.5 274.9h1.2v1.2h-1.2zM705.3 274.9h1.2v1.2h-1.2zM708.9 274.9h1.2v1.2h-1.2zM699.9 276.7h1.2v1.2h-1.2zM701.7 276.7h1.2v1.2h-1.2zM703.5 276.7h1.2v1.2h-1.2zM707.1 276.7h1.2v1.2h-1.2zM708.9 276.7h1.2v1.2h-1.2zM689 284.7h3v3h-3zM679.6 291.9h5.2v3.7h-5.2zM678.2 304.9h2.2v2.2h-2.2zM680.9 304.3h1.3v1.3h-1.3zM680.9 306.4h1.3v1.3h-1.3zM698.5 303.4h2v2h-2zM702.1 303.7h2v2h-2zM708.9 303.4h2v2h-2zM711.4 302.1h3v3h-3zM717.5 283.1h1.2v1.2h-1.2zM719.4 283.1h1.2v1.2h-1.2zM717.5 285h1.2v1.2h-1.2zM719.4 286.9h1.2v1.2h-1.2zM717.5 288.8h1.2v1.2h-1.2zM719.4 288.8h1.2v1.2h-1.2zM717.5 290.7h1.2v1.2h-1.2zM719.4 290.7h1.2v1.2h-1.2zM726.9 277.8h2.2v2.2h-2.2zM718.4 296.4h2.2v2.2h-2.2zM717.7 293.1h2.2v2.2h-2.2zM724.3 292.9h2.2v2.2h-2.2zM729.7 276.8h1.3v1.3h-1.3zM723.1 282.8h1.2v1.2h-1.2zM725 282.8h1.2v1.2h-1.2zM723.1 284.7h1.2v1.2h-1.2zM725 284.7h1.2v1.2h-1.2zM724.8 300.4h1.2v1.2h-1.2zM732.7 302.1h3v3h-3zM734.4 296.7h1.5v1.5h-1.5zM734.4 299.1h1.5v1.5h-1.5zM738.2 298.5h1.3v1h-1.3zM738.2 300.2h1.3v1h-1.3zM738.2 301.9h1.3v1h-1.3zM740.3 301.9h1.3v1h-1.3zM738.2 303.6h1.3v1h-1.3zM740.3 303.6h1.3v1h-1.3zM735.3 273.1h2.4v2.4h-2.4zM740.7 230.5h2.1v2.1h-2.1zM737.4 233.9h2.1v2.1h-2.1zM740.7 233.9h2.1v2.1h-2.1zM740.7 240.8h2.1v2.1h-2.1zM737.4 244.3h2.1v2.1h-2.1zM737.4 251.2h2.1v2.1h-2.1zM737.4 258.1h2.1v2.1h-2.1zM740.7 258.1h2.1v2.1h-2.1zM737.4 261.5h2.1v2.1h-2.1zM740.7 261.5h2.1v2.1h-2.1zM738.6 270.8h1v1h-1zM740.5 272.1h1v1h-1zM738.6 273.8h1v1h-1zM741.6 270.4h1v1h-1zM756.8 255.5h3v3h-3zM755.2 260.2h1.4v1.4h-1.4zM755.2 262.3h1.4v1.4h-1.4zM757.3 262.3h1.4v1.4h-1.4zM759.4 262.3h1.4v1.4h-1.4zM755.2 264.4h1.4v1.4h-1.4zM757.3 264.4h1.4v1.4h-1.4zM759.4 264.4h1.4v1.4h-1.4zM757.3 266.5h1.4v1.4h-1.4zM757.3 268.6h1.4v1.4h-1.4zM757.3 270.7h1.4v1.4h-1.4zM759.4 270.7h1.4v1.4h-1.4zM755.2 272.8h1.4v1.4h-1.4zM757.3 272.8h1.4v1.4h-1.4zM755.2 274.9h1.4v1.4h-1.4zM755.2 277h1.4v1.4h-1.4zM759.4 277h1.4v1.4h-1.4zM757.3 279.1h1.4v1.4h-1.4zM755.2 281.2h1.4v1.4h-1.4zM757.3 281.2h1.4v1.4h-1.4zM759.4 281.2h1.4v1.4h-1.4zM755.2 283.3h1.4v1.4h-1.4zM757.3 283.3h1.4v1.4h-1.4zM759.4 283.3h1.4v1.4h-1.4zM755.2 285.4h1.4v1.4h-1.4zM758.8 289.4h3.1v3.1h-3.1zM768.3 289.4h3.1v3.1h-3.1zM756.7 294h1.2v1.2h-1.2zM758.6 294h1.2v1.2h-1.2zM760.5 294h1.2v1.2h-1.2zM754.8 295.9h1.2v1.2h-1.2zM756.7 295.9h1.2v1.2h-1.2zM768.3 294.6h3.1v3.1h-3.1zM749.8 308.6a2 2 0 1 0 4 0a2 2 0 1 0 -4 0zM756.3 308.6a2 2 0 1 0 4 0a2 2 0 1 0 -4 0zM744.3 327.9a1.7 1.7 0 1 0 3.4 0a1.7 1.7 0 1 0 -3.4 0zM739 311.5h2v2h-2zM742.1 312.5h1.1v1.1h-1.1zM744 312.5h1.1v1.1h-1.1zM745.9 312.5h1.1v1.1h-1.1zM747.8 312.5h1.1v1.1h-1.1zM751.6 312.5h1.1v1.1h-1.1zM753.5 312.5h1.1v1.1h-1.1zM757.3 312.5h1.1v1.1h-1.1zM761.1 312.5h1.1v1.1h-1.1zM756.2 326.7h1v1h-1zM758.8 326.7h1v1h-1zM784.9 287.1h1.2v1.2h-1.2zM784.9 289.2h1.2v1.2h-1.2zM790.3 286.5h2.4v2.4h-2.4zM794.3 286.8h1.8v1.8h-1.8zM797.5 286.5h1.8v1.8h-1.8zM800.9 286.5h1.8v1.8h-1.8zM809 286h1.2v1.2h-1.2zM810.9 286h1.2v1.2h-1.2zM812.8 286h1.2v1.2h-1.2zM814.7 286h1.2v1.2h-1.2zM816.6 286h1.2v1.2h-1.2zM809 287.9h1.2v1.2h-1.2zM812.8 287.9h1.2v1.2h-1.2zM814.7 287.9h1.2v1.2h-1.2zM816.6 287.9h1.2v1.2h-1.2zM818.5 287.9h1.2v1.2h-1.2zM812.8 289.8h1.2v1.2h-1.2zM814.7 289.8h1.2v1.2h-1.2zM818.5 289.8h1.2v1.2h-1.2zM821.3 287.5h2.4v2.4h-2.4zM824.8 284.8h3v3h-3zM785.4 295.2h3v3h-3zM785.6 299.9h2.6v2.6h-2.6zM794.8 300.3h3v3h-3zM799.2 300.3h3v3h-3zM803.5 299.4h1.4v1.4h-1.4zM803.5 302.2h1.4v1.4h-1.4z"/>
<path fill="#b0b0b4" d="M738.1 204h3.5v3.5h-3.5zM725.8 201.4h1.3v1.3h-1.3zM679.5 269.6h1.2v1.2h-1.2zM683.1 269.6h1.2v1.2h-1.2zM684.9 269.6h1.2v1.2h-1.2zM683.1 271.4h1.2v1.2h-1.2zM684.9 271.4h1.2v1.2h-1.2zM690.3 271.4h1.2v1.2h-1.2zM694 269.6h1.2v1.2h-1.2zM709 269.6h1.2v1.2h-1.2zM710.8 271.4h1.2v1.2h-1.2zM716.7 269.6h1.2v1.2h-1.2zM722.1 269.6h1.2v1.2h-1.2zM698.8 270.2h2.2v2.2h-2.2zM675.9 274.6h1.2v1.2h-1.2zM677.7 274.6h1.2v1.2h-1.2zM679.5 274.6h1.2v1.2h-1.2zM675.9 276.4h1.2v1.2h-1.2zM677.7 276.4h1.2v1.2h-1.2zM679.5 276.4h1.2v1.2h-1.2zM686.7 276.4h1.2v1.2h-1.2zM674.1 278.2h1.2v1.2h-1.2zM679.5 278.2h1.2v1.2h-1.2zM679.5 280h1.2v1.2h-1.2zM681.3 280h1.2v1.2h-1.2zM674.1 281.8h1.2v1.2h-1.2zM683.1 281.8h1.2v1.2h-1.2zM692 277.7h1.2v1.2h-1.2zM705.3 276.7h1.2v1.2h-1.2zM683.7 284.7h3v3h-3zM679.6 298.8h5.2v3.9h-5.2zM674.3 305.1h2.2v2.2h-2.2zM705.4 303.4h2v2h-2zM716.7 302.1h3v3h-3zM717.5 286.9h1.2v1.2h-1.2zM723 277.8h2.2v2.2h-2.2zM723.9 288.9h2.2v2.2h-2.2zM722.3 296.4h2.2v2.2h-2.2zM721.4 293.1h2.2v2.2h-2.2zM724.8 298.5h1.2v1.2h-1.2zM727.5 302.1h3v3h-3zM738.2 296.8h1.3v1h-1.3zM740.3 296.8h1.3v1h-1.3zM735.3 269.2h2.4v2.4h-2.4zM737.4 230.5h2.1v2.1h-2.1zM737.4 237.4h2.1v2.1h-2.1zM740.7 237.4h2.1v2.1h-2.1zM737.4 240.8h2.1v2.1h-2.1zM740.7 244.3h2.1v2.1h-2.1zM737.4 247.7h2.1v2.1h-2.1zM740.7 247.7h2.1v2.1h-2.1zM740.7 251.2h2.1v2.1h-2.1zM737.4 254.6h2.1v2.1h-2.1zM752 255.5h3v3h-3zM759.4 260.2h1.4v1.4h-1.4zM755.2 266.5h1.4v1.4h-1.4zM759.4 266.5h1.4v1.4h-1.4zM755.2 268.6h1.4v1.4h-1.4zM759.4 268.6h1.4v1.4h-1.4zM755.2 270.7h1.4v1.4h-1.4zM759.4 274.9h1.4v1.4h-1.4zM759.4 285.4h1.4v1.4h-1.4zM754.1 289.4h3.1v3.1h-3.1zM763 289.4h3.1v3.1h-3.1zM772.6 289.4h1.8v1.8h-1.8zM754.8 294h1.2v1.2h-1.2zM758.6 295.9h1.2v1.2h-1.2zM760.5 295.9h1.2v1.2h-1.2zM763 294.6h3.1v3.1h-3.1zM735.5 311.5h2v2h-2zM749.7 312.5h1.1v1.1h-1.1zM755.4 312.5h1.1v1.1h-1.1zM759.2 312.5h1.1v1.1h-1.1zM810.9 287.9h1.2v1.2h-1.2zM809 289.8h1.2v1.2h-1.2zM810.9 289.8h1.2v1.2h-1.2zM816.6 289.8h1.2v1.2h-1.2zM821.2 290.8h2.6v2.6h-2.6zM825 290.8h2.6v2.6h-2.6zM790.6 295.2h3v3h-3zM794.8 295.6h3v3h-3zM799.2 295.6h3v3h-3zM797.3 292.5h1.4v1.4h-1.4zM799.7 292.5h1.4v1.4h-1.4zM802.1 292.5h1.4v1.4h-1.4zM804.2 293.6h1.4v1.4h-1.4zM790.8 299.9h2.6v2.6h-2.6z"/>
<rect x="775.1" y="297.6" width="9.7" height="7.4" fill="url(#bga)"/>
<path fill="#f2d000" d="M775.1 297.6h9.7v.9h-9.7zM775.1 304.1h9.7v.9h-9.7zM775.1 298.5h.9v5.6h-.9zM783.9 298.5h.9v5.6h-.9zM806 293.9h12.7v10.4h-12.7zM819.7 294.6h10.1v13.2h-10.1zM776.5 306.4h10.4v8h-10.4zM792.1 305h9.7v12.9h-9.7z"/>
<path fill="#2f2b31" d="M810.1 295h4.6v8.2h-4.6zM820.8 298.8h7.9v4.8h-7.9zM779.8 307.5h3.7v5.8h-3.7zM793.2 309.1h7.5v4.6h-7.5z"/>
<rect x="803.2" y="307.8" width="11.6" height="9.6" fill="url(#bga)"/>
<path fill="#f2d000" d="M803.2 307.8h11.6v.9h-11.6zM803.2 316.5h11.6v.9h-11.6zM803.2 308.7h.9v7.8h-.9zM813.9 308.7h.9v7.8h-.9zM816.2 305.3h2.2v2.2h-2.2zM816.2 308.5h2.2v2.2h-2.2zM824.2 311.8h1.5v1.5h-1.5zM816.6 314.3h1.5v1.5h-1.5zM777.5 318.8h1.2v1.2h-1.2zM779.4 318.8h1.2v1.2h-1.2zM781.3 318.8h1.2v1.2h-1.2zM783.2 318.8h1.2v1.2h-1.2zM785.1 318.8h1.2v1.2h-1.2zM787 318.8h1.2v1.2h-1.2zM788.9 318.8h1.2v1.2h-1.2zM790.8 318.8h1.2v1.2h-1.2zM777.5 320.7h1.2v1.2h-1.2zM779.4 320.7h1.2v1.2h-1.2zM781.3 320.7h1.2v1.2h-1.2zM783.2 320.7h1.2v1.2h-1.2zM785.1 320.7h1.2v1.2h-1.2zM787 320.7h1.2v1.2h-1.2zM788.9 320.7h1.2v1.2h-1.2zM790.8 320.7h1.2v1.2h-1.2zM798.5 319h3v3h-3zM805.1 318.8h1.2v1.2h-1.2zM803.2 320.7h1.2v1.2h-1.2zM805.1 320.7h1.2v1.2h-1.2zM810.1 318.8h1.2v1.2h-1.2zM812 318.8h1.2v1.2h-1.2zM812 320.7h1.2v1.2h-1.2zM813.9 320.7h1.2v1.2h-1.2zM815.8 320.7h1.2v1.2h-1.2zM775.1 327.1h6.5v5.8h-6.5zM783.9 330.2a2 2 0 1 0 4 0a2 2 0 1 0 -4 0zM791.5 330.2a2 2 0 1 0 4 0a2 2 0 1 0 -4 0zM754.4 219.6h3.2v3.2h-3.2zM760.6 219.6h3.2v3.2h-3.2zM760.2 225.9a2 2 0 1 0 4 0a2 2 0 1 0 -4 0zM778.9 222.6h2.2v2.2h-2.2zM787.4 220.9h3.2v3.2h-3.2zM791.6 220.9h3.2v3.2h-3.2zM784.7 225.3h2.2v2.2h-2.2zM792.5 227.8h2.2v2.2h-2.2zM795.6 227.8h2.2v2.2h-2.2zM806 226.9h2.2v2.2h-2.2zM795.6 231h2.2v2.2h-2.2zM808.9 231h2.2v2.2h-2.2zM812.2 231h2.2v2.2h-2.2zM770.2 230.1h1.2v1.2h-1.2zM772 230.1h1.2v1.2h-1.2zM773.9 230.1h1.2v1.2h-1.2zM775.7 230.1h1.2v1.2h-1.2zM777.6 230.1h1.2v1.2h-1.2zM783.1 230.1h1.2v1.2h-1.2z"/>
<path fill="#b0b0b4" d="M821.7 309.8h1.5v1.5h-1.5zM824.2 315.3h1.5v1.5h-1.5zM793.3 319h3v3h-3zM803.2 318.8h1.2v1.2h-1.2zM815.8 318.8h1.2v1.2h-1.2zM810.1 320.7h1.2v1.2h-1.2zM782.1 220.9h3.2v3.2h-3.2zM796.9 220.9h3.2v3.2h-3.2zM780.8 225.3h2.2v2.2h-2.2zM799.2 227.8h2.2v2.2h-2.2zM802.3 226.5h2.2v2.2h-2.2zM792.5 231.2h2.2v2.2h-2.2zM799.2 231h2.2v2.2h-2.2zM788 227.6h1.2v6.2h-1.2zM764.6 230.1h1.2v1.2h-1.2zM766.5 230.1h1.2v1.2h-1.2zM768.3 230.1h1.2v1.2h-1.2zM779.4 230.1h1.2v1.2h-1.2z"/>
<path fill="#c9a90a" d="M821 271.5h4.2v3h-4.2z"/>
<path fill="#f2d000" d="M786.8 230.1h1.2v1.2h-1.2zM788.7 230.1h1.2v1.2h-1.2zM790.5 230.1h1.2v1.2h-1.2zM764.6 231.9h1.2v1.2h-1.2zM766.5 231.9h1.2v1.2h-1.2zM768.3 231.9h1.2v1.2h-1.2zM770.2 231.9h1.2v1.2h-1.2zM772 231.9h1.2v1.2h-1.2zM773.9 231.9h1.2v1.2h-1.2zM777.6 231.9h1.2v1.2h-1.2zM779.4 231.9h1.2v1.2h-1.2zM781.3 231.9h1.2v1.2h-1.2zM783.1 231.9h1.2v1.2h-1.2zM785 231.9h1.2v1.2h-1.2zM790.5 231.9h1.2v1.2h-1.2zM802.8 231.7h1.2v1.2h-1.2zM804.7 232.1h1.2v1.2h-1.2zM806.9 231.7h1.2v1.2h-1.2zM820.7 230.9h2.4v2.4h-2.4zM820.7 234.8h2.4v2.4h-2.4zM820.7 243.8h2.4v2.4h-2.4zM824.6 243.8h2.4v2.4h-2.4zM820.7 247.7h2.4v2.4h-2.4zM824.6 247.7h2.4v2.4h-2.4zM820.7 253.9h2.4v2.4h-2.4zM824.6 253.9h2.4v2.4h-2.4zM820.7 260.1h2.4v2.4h-2.4zM820.7 266.2h2.4v2.4h-2.4zM820.7 275.2h2.4v2.4h-2.4zM818.1 232.2h1.4v1.4h-1.4zM820.8 237.8h1.4v1.4h-1.4zM824.5 237.8h1.4v1.4h-1.4zM821.6 251.6h1.4v1.4h-1.4zM821.2 264.3h1.4v1.4h-1.4zM823 279.6h1.4v1.4h-1.4zM823 284.6h1.4v1.4h-1.4zM753 235h1.5v1.5h-1.5zM753 237.1h1.5v1.5h-1.5zM759 238h1.5v1.5h-1.5zM758.3 240.4h1.5v1.5h-1.5zM758.3 242.9h1.5v1.5h-1.5zM756.7 250.3h1.5v1.5h-1.5zM759 250.3h1.5v1.5h-1.5zM759 252.3h1.5v1.5h-1.5zM758.7 260.1h1.5v1.5h-1.5zM756.2 262.6h1.5v1.5h-1.5zM755.5 267h1.5v1.5h-1.5zM757.7 267h1.5v1.5h-1.5zM759.2 268.5h1.5v1.5h-1.5zM756.2 275.7h1.5v1.5h-1.5zM758.7 275.7h1.5v1.5h-1.5zM758.7 278.1h1.5v1.5h-1.5zM756.2 280.2h1.5v1.5h-1.5zM756.7 285.5h1.5v1.5h-1.5zM756.7 287.6h1.5v1.5h-1.5zM755.5 237.6h2.3v2.3h-2.3zM753.4 244.1h2.3v2.3h-2.3zM757.9 272.1h2.3v2.3h-2.3zM757.9 281.9h2.3v2.3h-2.3zM756.9 255.3h3.2v3.2h-3.2zM785.1 286.4h1.5v1.5h-1.5zM785.1 288.5h1.5v1.5h-1.5zM798.4 292.9h1.5v1.5h-1.5zM800.8 292.9h1.5v1.5h-1.5zM790.3 286.6h2.3v2.3h-2.3zM797.3 286.3h2.3v2.3h-2.3zM800.4 286.3h2.3v2.3h-2.3zM809.3 286.3h1.3v1.3h-1.3zM813.3 286.3h1.3v1.3h-1.3zM809.3 288.3h1.3v1.3h-1.3zM809.3 290.3h1.3v1.3h-1.3zM811.3 290.3h1.3v1.3h-1.3zM820.3 288h2v2h-2zM825 285.5h3.2v3.2h-3.2zM775.8 289.7h2.2v2.2h-2.2zM779.9 290.5h1.4v1.4h-1.4zM768.3 289.6h3.2v3.2h-3.2zM768.3 294.5h3.2v3.2h-3.2zM776 293.2h1.8v1.8h-1.8zM779.1 293.2h1.8v1.8h-1.8zM563.3 226.2h1.8v1.8h-1.8zM563.3 229.6h1.8v1.8h-1.8zM580.3 225.8h1.8v1.8h-1.8zM580.3 229.4h1.8v1.8h-1.8zM572.1 227.4h3v3h-3zM587.8 230.7h1.9v1.9h-1.9zM591 230.7h1.9v1.9h-1.9zM606.9 230.7h1.9v1.9h-1.9zM610.7 225.4h1.9v1.9h-1.9zM610.7 227.5h1.9v1.9h-1.9zM599 231.1h3v3h-3zM586.9 234.6h3v3h-3zM599 236h3v3h-3zM608.1 234.6h3v3h-3zM616.7 234.6h3v3h-3zM613.9 226h3v3h-3zM635 227h1.5v1.5h-1.5zM637.2 227h1.5v1.5h-1.5zM666.6 225.6h1.5v1.5h-1.5zM665.3 229.2h1.3v1.3h-1.3zM667.2 229.2h1.3v1.3h-1.3zM665.3 231.1h1.3v1.3h-1.3zM667.2 231.1h1.3v1.3h-1.3zM665.3 233h1.3v1.3h-1.3zM667.2 233h1.3v1.3h-1.3zM622.6 231.2h1.2v1.2h-1.2zM622.6 233.1h1.2v1.2h-1.2zM624.5 233.1h1.2v1.2h-1.2zM624.5 236.9h1.2v1.2h-1.2zM626.4 236.9h1.2v1.2h-1.2zM639.2 232.6h1.2v1.2h-1.2zM641.1 232.6h1.2v1.2h-1.2zM637.3 234.5h1.2v1.2h-1.2zM641.1 234.5h1.2v1.2h-1.2zM637.3 236.4h1.2v1.2h-1.2zM641.1 236.4h1.2v1.2h-1.2zM579.1 249.2h2v2h-2zM586.1 249.2h2v2h-2zM588.8 249.2h2v2h-2zM595.5 249.2h2v2h-2zM577.2 253.2h1.7v1.7h-1.7zM579.3 253.2h1.7v1.7h-1.7zM586.2 252.9h1.7v1.7h-1.7zM589 252.9h1.7v1.7h-1.7zM595.6 252.9h1.7v1.7h-1.7zM608.1 252.3h3v3h-3zM613.7 252.3h3v3h-3zM619.1 252.3h3v3h-3zM625.3 252.3h3v3h-3zM631 252.3h3v3h-3zM661.4 253.7h3v3h-3zM665.3 249.2h1.3v1.3h-1.3zM665.3 253h1.3v1.3h-1.3zM665.3 254.9h1.3v1.3h-1.3zM667.2 254.9h1.3v1.3h-1.3z"/>
<path fill="#b0b0b4" d="M775.7 231.9h1.2v1.2h-1.2zM786.8 231.9h1.2v1.2h-1.2zM788.7 231.9h1.2v1.2h-1.2zM824.6 230.9h2.4v2.4h-2.4zM824.6 234.8h2.4v2.4h-2.4zM824.6 260.1h2.4v2.4h-2.4zM824.6 275.2h2.4v2.4h-2.4zM818.1 230.4h1.4v1.4h-1.4zM822.8 237.8h1.4v1.4h-1.4zM821.2 241.5h1.4v1.4h-1.4zM823.7 251.6h1.4v1.4h-1.4zM821.2 258.1h1.4v1.4h-1.4zM825.1 258.1h1.4v1.4h-1.4zM823 282.1h1.4v1.4h-1.4zM753 232.2h1.5v1.5h-1.5zM753.8 241.2h1.5v1.5h-1.5zM756.7 252.3h1.5v1.5h-1.5zM756.2 260.1h1.5v1.5h-1.5zM758.7 262.6h1.5v1.5h-1.5zM756.2 278.1h1.5v1.5h-1.5zM758.7 285.5h1.5v1.5h-1.5zM755.5 233.9h2.3v2.3h-2.3zM754.2 272.4h2.3v2.3h-2.3zM754.2 281.9h2.3v2.3h-2.3zM751.7 255.3h3.2v3.2h-3.2zM797.7 290.4h1.5v1.5h-1.5zM800.8 290.4h1.5v1.5h-1.5zM794 286.6h2.3v2.3h-2.3zM811.3 288.3h1.3v1.3h-1.3zM813.3 288.3h1.3v1.3h-1.3zM813.3 290.3h1.3v1.3h-1.3zM817.8 286.5h2v2h-2zM772.4 289.3h2.2v2.2h-2.2zM763.4 289.6h3.2v3.2h-3.2zM763.4 294.5h3.2v3.2h-3.2zM772.6 293h1.8v1.8h-1.8zM782.8 293.2h1.8v1.8h-1.8zM559.6 226.2h1.8v1.8h-1.8zM559.6 229.6h1.8v1.8h-1.8zM576.7 228.9h1.8v1.8h-1.8zM566.9 227.4h3v3h-3zM584 230.7h1.9v1.9h-1.9zM603 230.7h1.9v1.9h-1.9zM610.7 230.7h1.9v1.9h-1.9zM591 234.4h1.9v1.9h-1.9zM593.9 231.1h3v3h-3zM581.7 234.6h3v3h-3zM593.9 236h3v3h-3zM602.9 234.6h3v3h-3zM611.6 234.6h3v3h-3zM663.1 225.6h1.5v1.5h-1.5zM624.5 231.2h1.2v1.2h-1.2zM626.4 231.2h1.2v1.2h-1.2zM622.6 235h1.2v1.2h-1.2zM622.6 236.9h1.2v1.2h-1.2zM575.3 249.2h2v2h-2zM582.2 249.2h2v2h-2zM592.3 249.2h2v2h-2zM599.2 249.2h2v2h-2zM582.3 252.5h1.7v1.7h-1.7zM592.4 253.2h1.7v1.7h-1.7zM599.4 252.9h1.7v1.7h-1.7zM608.1 247.3h3v3h-3zM613.7 247.3h3v3h-3zM619.1 247.3h3v3h-3zM625.3 247.3h3v3h-3zM631 247.3h3v3h-3zM656.1 253.7h3v3h-3zM665.3 251.1h1.3v1.3h-1.3zM667.2 251.1h1.3v1.3h-1.3z"/><g transform="matrix(1 0 0 -1 0 690.7)"><path d="M546.3 333.4L546.3 114.2L547.3 112.9L551.4 112.5L551.4 88.3L552.2 87.4L561.0 87.2L562.0 86.2L562.0 81.8L562.8 81.0L574.6 81.0L574.6 125.0L575.6 126.0L607.8 126.0L608.8 125.0L608.8 83.8L632.4 83.8L633.4 82.8L633.4 78.3L670.8 78.3L670.8 103.9L722.9 103.9L723.9 102.9L723.9 77.6L756.1 77.6L757.1 78.6L757.1 84.2L758.1 85.2L788.3 85.2L788.3 109.1L789.3 110.1L814.3 110.1L815.3 109.1L815.3 82.1L816.3 81.1L833.6 81.1L833.6 340.3L796.2 340.3L795.2 339.3L795.2 332.7L774.4 332.7L773.4 330.3L683.6 330.3L682.6 333.4z" fill="#2f2b31"/><circle cx="831.5" cy="89.7" r="3.7" fill="#fff"/><rect x="831.5" y="87.2" width="3" height="5" fill="#fff"/></g><path fill="#f2d000" d="M553.2 364.7h1.3v1.3h-1.3zM555.3 364.7h1.3v1.3h-1.3zM553.2 374h1.3v1.3h-1.3zM555.7 374h1.3v1.3h-1.3zM552.5 367.7h4.8v.9h-4.8zM552.5 371.6h4.8v.9h-4.8zM552.5 368.6h.9v3h-.9zM556.4 368.6h.9v3h-.9zM565.2 364.9h1.2v1.2h-1.2zM567.1 364.9h1.2v1.2h-1.2zM569 364.9h1.2v1.2h-1.2zM576.6 364.9h1.2v1.2h-1.2zM570.9 366.8h1.2v1.2h-1.2zM572.8 366.8h1.2v1.2h-1.2zM574.7 366.8h1.2v1.2h-1.2zM565.2 368.7h1.2v1.2h-1.2zM569 368.7h1.2v1.2h-1.2zM570.9 368.7h1.2v1.2h-1.2zM572.8 368.7h1.2v1.2h-1.2zM574.7 368.7h1.2v1.2h-1.2zM565.2 370.6h1.2v1.2h-1.2zM572.8 370.6h1.2v1.2h-1.2zM597.8 372.1h1.2v1.2h-1.2zM599.7 372.1h1.2v1.2h-1.2zM603.5 372.1h1.2v1.2h-1.2zM605.4 372.1h1.2v1.2h-1.2zM607.3 372.1h1.2v1.2h-1.2zM597.8 374h1.2v1.2h-1.2zM599.7 374h1.2v1.2h-1.2zM605.4 374h1.2v1.2h-1.2zM595.9 375.9h1.2v1.2h-1.2zM597.8 375.9h1.2v1.2h-1.2zM599.7 375.9h1.2v1.2h-1.2zM605.4 375.9h1.2v1.2h-1.2zM607.3 375.9h1.2v1.2h-1.2zM594 377.8h1.2v1.2h-1.2zM595.9 377.8h1.2v1.2h-1.2zM597.8 377.8h1.2v1.2h-1.2zM599.7 377.8h1.2v1.2h-1.2zM601.6 377.8h1.2v1.2h-1.2zM603.5 377.8h1.2v1.2h-1.2zM605.4 377.8h1.2v1.2h-1.2zM607.3 377.8h1.2v1.2h-1.2zM602 381.2h1.2v1.2h-1.2zM603.9 381.2h1.2v1.2h-1.2zM603.9 383.1h1.2v1.2h-1.2zM614.1 367h2.2v2.2h-2.2zM630.2 372.5h2.2v2.2h-2.2zM617.2 366.3h1.2v1.2h-1.2zM621 366.3h1.2v1.2h-1.2zM617.2 368.2h1.2v1.2h-1.2zM622.9 368.2h1.2v1.2h-1.2zM619.1 370.1h1.2v1.2h-1.2zM621 370.1h1.2v1.2h-1.2zM622.9 370.1h1.2v1.2h-1.2zM633 369.1h1.2v1.2h-1.2zM634.9 369.1h1.2v1.2h-1.2zM633 371h1.2v1.2h-1.2zM633 372.9h1.2v1.2h-1.2zM633 374.8h1.2v1.2h-1.2z"/>
<path fill="#0a12de" d="M552.7 370.9h1.4v1.4h-1.4z"/>
<path fill="#b0b0b4" d="M567.5 362.6h1.8v1.8h-1.8zM565.2 366.8h1.2v1.2h-1.2zM576.6 368.7h1.2v1.2h-1.2zM570.9 370.6h1.2v1.2h-1.2zM595.9 372.1h1.2v1.2h-1.2zM601.6 372.1h1.2v1.2h-1.2zM601.6 374h1.2v1.2h-1.2zM603.5 374h1.2v1.2h-1.2zM607.3 374h1.2v1.2h-1.2zM601.6 375.9h1.2v1.2h-1.2zM602 383.1h1.2v1.2h-1.2zM610.5 367h2.2v2.2h-2.2zM626.4 372.5h2.2v2.2h-2.2zM619.1 366.3h1.2v1.2h-1.2zM622.9 366.3h1.2v1.2h-1.2zM621 368.2h1.2v1.2h-1.2zM617.2 370.1h1.2v1.2h-1.2zM634.9 371h1.2v1.2h-1.2z"/>
<rect x="640.3" y="364.6" width="12.5" height="12.1" fill="url(#bga)"/>
<path fill="#c9a90a" d="M677.4 376.3h5.1v6.4h-5.1z"/>
<path fill="#f2d000" d="M640.3 364.6h12.5v.9h-12.5zM640.3 375.8h12.5v.9h-12.5zM640.3 365.5h.9v10.3h-.9zM651.9 365.5h.9v10.3h-.9zM638.5 379.2h12.9v8.6h-12.9zM632.6 378.9h3v3h-3zM652.1 379.4h3.4v4.2h-3.4zM661.1 366.3h1.3v1.3h-1.3zM661.1 368.3h1.3v1.3h-1.3zM663.1 368.3h1.3v1.3h-1.3zM661.1 370.3h1.3v1.3h-1.3zM663.1 370.3h1.3v1.3h-1.3zM661.1 372.3h1.3v1.3h-1.3zM663.1 372.3h1.3v1.3h-1.3zM672.2 375.7h1.2v1.2h-1.2zM674.1 375.7h1.2v1.2h-1.2zM672.2 377.6h1.2v1.2h-1.2zM674.1 377.6h1.2v1.2h-1.2zM674.1 379.5h1.2v1.2h-1.2zM684.1 374.5h3v3h-3zM678.7 384.2h3v3h-3zM683.9 379.9h10v13h-10zM695.2 384.1h1.8v1.8h-1.8zM697.7 391.2h1.3v1.3h-1.3zM695.7 397.2h1.3v1.3h-1.3zM695.7 399.2h1.3v1.3h-1.3zM697.7 399.2h1.3v1.3h-1.3zM695.7 401.2h1.3v1.3h-1.3zM695.7 403.2h1.3v1.3h-1.3zM697.7 403.2h1.3v1.3h-1.3zM695.7 405.2h1.3v1.3h-1.3zM656 389.6h1.2v1.2h-1.2zM659.8 389.6h1.2v1.2h-1.2zM661.7 389.6h1.2v1.2h-1.2zM663.6 389.6h1.2v1.2h-1.2zM665.5 389.6h1.2v1.2h-1.2zM661.5 392.3h1.2v1.2h-1.2zM663.4 392.3h1.2v1.2h-1.2zM661.5 394.2h1.2v1.2h-1.2zM660.4 399.9h8.6v1h-8.6zM660.4 411h8.6v1h-8.6zM660.4 400.9h1v10.1h-1zM668 400.9h1v10.1h-1zM661.4 407.5h6.6v3.5h-6.6zM592.3 394.7h7.5v9.2h-7.5zM600.9 395.8h10.7v1h-10.7zM600.9 403.4h10.7v1h-10.7zM600.9 396.8h1v6.6h-1zM610.6 396.8h1v6.6h-1zM587.6 400.8h3v3h-3zM612.8 395.5h3v3h-3zM575 405.1h1.3v1.3h-1.3zM576.9 405.1h1.3v1.3h-1.3zM578.8 405.1h1.3v1.3h-1.3zM580.7 405.1h1.3v1.3h-1.3zM595.1 405.3h1.2v1.2h-1.2zM595.1 407.2h1.2v1.2h-1.2zM597 407.2h1.2v1.2h-1.2zM601.4 405.6h1.2v1.2h-1.2zM551.1 396.3a2.3 2.3 0 1 0 4.6 0a2.3 2.3 0 1 0 -4.6 0zM551.1 404.6a2.3 2.3 0 1 0 4.6 0a2.3 2.3 0 1 0 -4.6 0zM551.1 412.7a2.3 2.3 0 1 0 4.6 0a2.3 2.3 0 1 0 -4.6 0zM618 406.2h1.2v1.2h-1.2zM616.1 408.1h1.2v1.2h-1.2zM618 408.1h1.2v1.2h-1.2zM621 406.4h6v1.7h-6zM621 408.9h6v1.9h-6zM621 415.4h6v1.7h-6zM621 418.2h6v2.1h-6zM625.2 402.8h1.2v1.2h-1.2zM651.6 412.2a2.2 2.2 0 1 0 4.4 0a2.2 2.2 0 1 0 -4.4 0zM660.4 416.1a2.1 2.1 0 1 0 4.2 0a2.1 2.1 0 1 0 -4.2 0zM654.7 422.6a2.3 2.3 0 1 0 4.6 0a2.3 2.3 0 1 0 -4.6 0zM660.2 422.6a2.3 2.3 0 1 0 4.6 0a2.3 2.3 0 1 0 -4.6 0zM651.8 415.8h1.2v1.2h-1.2zM653.7 415.8h1.2v1.2h-1.2zM651.8 417.7h1.2v1.2h-1.2zM653.7 417.7h1.2v1.2h-1.2zM633.4 422.4h2.2v2.2h-2.2zM645.9 422.8h1.2v1.2h-1.2zM645.9 424.7h1.2v1.2h-1.2zM647.8 424.7h1.2v1.2h-1.2zM576.5 421.3h2.2v2.2h-2.2zM589 423.1h2.2v2.2h-2.2zM581.2 421.5h5.8v1.5h-5.8zM581.2 423.6h5.8v1.5h-5.8zM581.2 426.4h5.8v1.5h-5.8zM581.2 428.7h5.8v1.5h-5.8z"/>
<path fill="#8c8a80" d="M643 367.4h7v6.6h-7z"/>
<path fill="#b0b0b4" d="M632.6 383.9h3v3h-3zM659 379h3.6v5h-3.6zM672.2 379.5h1.2v1.2h-1.2zM672.2 381.4h1.2v1.2h-1.2zM674.1 381.4h1.2v1.2h-1.2zM689.6 374.5h3v3h-3zM678.7 389.4h3v3h-3zM695.2 380.3h1.8v1.8h-1.8zM695.7 393.2h1.3v1.3h-1.3zM697.7 393.2h1.3v1.3h-1.3zM695.7 395.2h1.3v1.3h-1.3zM697.7 395.2h1.3v1.3h-1.3zM697.7 397.2h1.3v1.3h-1.3zM697.7 405.2h1.3v1.3h-1.3zM657.9 389.6h1.2v1.2h-1.2zM663.4 394.2h1.2v1.2h-1.2zM664.3 412h1.2v1.2h-1.2zM666.2 412h1.2v1.2h-1.2zM668.1 412h1.2v1.2h-1.2zM670 412h1.2v1.2h-1.2zM603 397h6.3v6h-6.3zM587.6 395.2h3v3h-3zM612.8 400.8h3v3h-3zM597 405.3h1.2v1.2h-1.2zM601.4 407.6h1.2v1.2h-1.2zM616.1 406.2h1.2v1.2h-1.2zM622.4 406.9h1.2v1.2h-1.2zM624.1 409.3h1.2v1.2h-1.2zM622.4 415.8h1.2v1.2h-1.2zM624.1 418.6h1.2v1.2h-1.2zM623.1 402.8h1.2v1.2h-1.2zM622.2 412.2h1.2v1.2h-1.2zM633.4 418.5h2.2v2.2h-2.2zM647.8 422.8h1.2v1.2h-1.2zM576.5 424.7h2.2v2.2h-2.2zM589 426.8h2.2v2.2h-2.2zM589.4 421h1.4v1.4h-1.4zM581.2 419.4h5.8v1.5h-5.8z"/>
<path fill="#0a12de" d="M662.5 401.3h1.9v1.5h-1.9zM665.5 401.3h1.8v1.5h-1.8zM623.6 412.2h1.2v1.2h-1.2zM639 420h4.8v.7h-4.8z"/>
<path fill="#8f8a50" d="M579.2 400.2h3.5v2.8h-3.5zM639 420.7h4.8v5.4h-4.8z"/>
<path fill="#2f2b31" d="M642.6 380.3h4.6v6.4h-4.6zM685 384.1h7.8v4.7h-7.8zM664.2 400.9h.7v7.1h-.7zM593.4 397.6h5.3v3.3h-5.3zM605.6 397h1v6h-1z"/>
<path fill="#f2d000" d="M662.3 410h1.3v1.3h-1.3zM664.2 410h1.3v1.3h-1.3zM669.9 410h1.3v1.3h-1.3zM660.4 411.9h1.3v1.3h-1.3zM662.3 411.9h1.3v1.3h-1.3zM666.1 411.9h1.3v1.3h-1.3zM669.9 411.9h1.3v1.3h-1.3zM639 429.1h11.3v1.7h-11.3zM639 440.8h11.3v1.7h-11.3zM639 430.8h1.7v10h-1.7zM648.6 430.8h1.7v10h-1.7zM634.5 440.9h1.4v1.4h-1.4zM633.7 436.9h3v3h-3z"/>
<path fill="#0a12de" d="M581.7 419.8h1v1h-1zM584.5 419.8h1v1h-1zM644.8 439h3.8v1.6h-3.8z"/>
<path fill="#b0b0b4" d="M660.4 410h1.3v1.3h-1.3zM668 410h1.3v1.3h-1.3zM664.2 411.9h1.3v1.3h-1.3zM668 411.9h1.3v1.3h-1.3zM642 431.5h5v1h-5zM634.5 429.4h1.4v1.4h-1.4zM633.7 431.8h3v3h-3z"/>
<rect x="664.6" y="426.6" width="12.4" height="12.2" fill="url(#bgb)"/>
<path fill="#f2d000" d="M664.6 426.6h12.4v.9h-12.4zM664.6 437.9h12.4v.9h-12.4zM664.6 427.5h.9v10.4h-.9zM676.1 427.5h.9v10.4h-.9zM671.3 422.7h1.7v1.7h-1.7zM674.1 422.7h1.7v1.7h-1.7zM678.9 428.5h1.7v1.7h-1.7zM678.9 432h1.7v1.7h-1.7zM678.9 434.8h1.7v1.7h-1.7zM681.4 432h1.7v1.7h-1.7zM658.5 431.3h1.7v1.7h-1.7zM678.6 424.3h2.4v2.4h-2.4zM661.1 426.7h1.3v1.3h-1.3zM661.1 429.3h1.3v1.3h-1.3zM661.1 431.9h1.3v1.3h-1.3zM661.1 434.5h1.3v1.3h-1.3zM661.1 437.2h1.3v1.3h-1.3zM665 440.1h2v2h-2zM670.7 440.1h3v3h-3zM598.8 452.9h2.2v2.2h-2.2zM598.8 456.2h2.2v2.2h-2.2zM576.3 464h5v2.5h-5zM576.3 469.9h5v3h-5zM583.4 463.6h1.3v1.3h-1.3zM583.4 470.7h1.3v1.3h-1.3zM596.8 463.1h1.3v1.3h-1.3zM599.3 463.1h1.3v1.3h-1.3zM565.5 468.9h1.5v4h-1.5zM596.1 469.2h1.3v3.4h-1.3zM599.2 467h3.7v3.2h-3.7zM599.2 470.9h7.9v2.1h-7.9zM699.8 431h1.6v1.6h-1.6zM702.6 430.7h2.3v2.3h-2.3zM705.8 431h2.3v2.3h-2.3zM708.3 430.7h1.2v1.2h-1.2zM708.3 432.4h1.2v1.2h-1.2zM712.3 433.2h1.2v1.2h-1.2zM702.7 434.6h1.2v1.2h-1.2zM704.4 434.6h1.2v1.2h-1.2zM702.7 436.3h1.2v1.2h-1.2zM712.1 435.4h1.2v1.2h-1.2zM715.1 434h1.6v1.6h-1.6zM689.5 437.4h1.2v1.2h-1.2zM689.5 439.1h1.2v1.2h-1.2zM692.6 437.1h2.3v2.3h-2.3zM704.3 437.3h1.2v1.2h-1.2zM705.4 439h1.2v1.2h-1.2zM717.2 437.8h1.2v1.2h-1.2zM718.8 437.3h1.2v1.2h-1.2zM718.8 439h1.2v1.2h-1.2zM688.1 440.5h1.2v1.2h-1.2zM686.4 442.2h1.2v1.2h-1.2zM691.2 440.5h1.2v1.2h-1.2zM689.5 442.2h1.2v1.2h-1.2zM693 441.7h1.2v1.2h-1.2zM696 441.7h1.2v1.2h-1.2zM713.8 440.8h1.2v1.2h-1.2zM712.1 442.5h1.2v1.2h-1.2z"/>
<path fill="#0a12de" d="M674.1 432.6h1.2v2.2h-1.2zM673.4 430.8h1.2v2.9h-1.2zM670.5 434.9h2.4v1.2h-2.4zM672.7 431.8h1v1.2h-1zM666.8 435.6h1.2v1.7h-1.2zM668.7 431.1h1.2v2.1h-1.2zM672.4 435.4h1.2v1.7h-1.2zM665.9 430.1h1v1.2h-1z"/>
<path fill="#b0b0b4" d="M673.7 419.1h1.7v1.7h-1.7zM676.6 422.7h1.7v1.7h-1.7zM683.1 427.8h1.7v1.7h-1.7zM665 443.9h2v2h-2zM668.5 440.3h1v3h-1zM671 445.2h3v3h-3zM595 452.9h2.2v2.2h-2.2zM595 456.2h2.2v2.2h-2.2zM583.4 466.1h1.3v1.3h-1.3zM583.4 468.6h1.3v1.3h-1.3zM587.4 462.2h1.3v1.3h-1.3zM589.5 462.2h1.3v1.3h-1.3zM710 430.7h1.2v1.2h-1.2zM712.3 431.5h1.2v1.2h-1.2zM714 431.5h1.2v1.2h-1.2zM692.7 434.4h2.3v2.3h-2.3zM709.4 434.9h1.6v1.6h-1.6zM712.1 433.7h1.2v1.2h-1.2zM713.8 433.7h1.2v1.2h-1.2zM691.2 437.4h1.2v1.2h-1.2zM702.6 437.3h1.2v1.2h-1.2zM702.6 439h1.2v1.2h-1.2zM705.4 437.3h1.2v1.2h-1.2zM707.1 437.3h1.2v1.2h-1.2zM709.1 437.2h2.3v2.3h-2.3zM712.4 437.7h2.3v2.3h-2.3zM715.5 437.8h1.2v1.2h-1.2zM715.5 439.5h1.2v1.2h-1.2zM720.5 437.3h1.2v1.2h-1.2zM686.4 440.5h1.2v1.2h-1.2zM689.5 440.5h1.2v1.2h-1.2zM693 440h1.2v1.2h-1.2zM694.7 440h1.2v1.2h-1.2zM696 440h1.2v1.2h-1.2zM697.7 440h1.2v1.2h-1.2zM699.2 440.1h2.3v2.3h-2.3zM709.3 441.1h1.6v1.6h-1.6zM712.1 440.8h1.2v1.2h-1.2z"/>
<path fill="#f2d000" d="M715.7 440.3h1.2v1.2h-1.2zM717.4 440.3h1.2v1.2h-1.2zM715.7 442h1.2v1.2h-1.2zM718.8 440.3h1.2v1.2h-1.2zM720.5 440.3h1.2v1.2h-1.2zM721.6 440.6h1.2v1.2h-1.2zM723.3 440.6h1.2v1.2h-1.2zM721.6 442.3h1.2v1.2h-1.2zM682.4 443.6h1.2v1.2h-1.2zM684.1 443.6h1.2v1.2h-1.2zM682.4 445.3h1.2v1.2h-1.2zM686 444.1h1.6v1.6h-1.6zM692.5 443.8h2.3v2.3h-2.3zM695.3 443.4h2.3v2.3h-2.3zM702.4 443.9h1.2v1.2h-1.2zM708.6 444h1.6v1.6h-1.6zM718.6 444h2.3v2.3h-2.3zM721.7 444h2.3v2.3h-2.3zM679.8 446.4h2.3v2.3h-2.3zM682.8 446.8h2.3v2.3h-2.3zM686.4 446.6h1.6v1.6h-1.6zM692 447h1.2v1.2h-1.2zM693.7 447h1.2v1.2h-1.2zM697.5 446.8h1.2v1.2h-1.2zM695.8 448.5h1.2v1.2h-1.2zM702.8 446.8h1.6v1.6h-1.6zM709 446.7h2.3v2.3h-2.3zM711.9 446.6h2.3v2.3h-2.3zM715.1 446.4h1.2v1.2h-1.2zM720.4 446.6h1.2v1.2h-1.2zM723 447.2h1.2v1.2h-1.2zM730.4 446.5h1.2v1.2h-1.2zM728.7 448.2h1.2v1.2h-1.2zM679.8 449.5h2.3v2.3h-2.3zM682.7 450.3h1.2v1.2h-1.2zM684.4 450.3h1.2v1.2h-1.2zM692.6 450.6h1.6v1.6h-1.6zM696.2 449.9h2.3v2.3h-2.3zM704.4 449.5h1.2v1.2h-1.2zM702.7 451.2h1.2v1.2h-1.2zM710.1 449.4h1.2v1.2h-1.2zM708.4 451.1h1.2v1.2h-1.2zM712.2 450.1h1.2v1.2h-1.2zM712.2 451.8h1.2v1.2h-1.2zM719.1 450.5h1.6v1.6h-1.6zM723.5 450.3h1.2v1.2h-1.2zM721.8 452h1.2v1.2h-1.2zM728.1 449.5h2.3v2.3h-2.3zM679.7 454.8h1.2v1.2h-1.2zM682.8 453.3h2.3v2.3h-2.3zM692.5 453.7h1.6v1.6h-1.6zM696.2 453.1h1.2v1.2h-1.2zM696.2 454.8h1.2v1.2h-1.2zM701.8 453.3h1.2v1.2h-1.2zM703.5 453.3h1.2v1.2h-1.2zM705.5 453.8h1.6v1.6h-1.6zM712.2 453.5h2.3v2.3h-2.3zM718.1 453.3h2.3v2.3h-2.3zM724.8 452.6h1.2v1.2h-1.2zM726.5 452.6h1.2v1.2h-1.2zM724.8 454.3h1.2v1.2h-1.2zM728.6 453.5h1.2v1.2h-1.2zM730.3 453.5h1.2v1.2h-1.2zM728.6 455.2h1.2v1.2h-1.2zM681.1 456.5h1.2v1.2h-1.2zM683.1 455.9h1.2v1.2h-1.2zM684.8 455.9h1.2v1.2h-1.2zM683.1 457.6h1.2v1.2h-1.2zM696 455.9h1.2v1.2h-1.2zM697.7 455.9h1.2v1.2h-1.2zM696 457.6h1.2v1.2h-1.2zM700.7 456.7h1.2v1.2h-1.2zM712.3 456h2.3v2.3h-2.3zM715.2 456.5h2.3v2.3h-2.3zM718.9 456.4h1.6v1.6h-1.6zM722 456.4h1.6v1.6h-1.6zM684.4 459.5h1.2v1.2h-1.2zM691.2 459.3h1.2v1.2h-1.2zM689.5 461h1.2v1.2h-1.2zM702.1 458.9h1.2v1.2h-1.2zM703.8 458.9h1.2v1.2h-1.2zM702.1 460.6h1.2v1.2h-1.2zM705.4 459.4h1.6v1.6h-1.6zM708.9 459.5h1.2v1.2h-1.2zM710.6 459.5h1.2v1.2h-1.2zM708.9 461.2h1.2v1.2h-1.2zM721.8 459.2h1.2v1.2h-1.2zM723.5 459.2h1.2v1.2h-1.2zM721.8 460.9h1.2v1.2h-1.2zM725.4 459.4h1.2v1.2h-1.2zM727.1 459.4h1.2v1.2h-1.2zM725.4 461.1h1.2v1.2h-1.2zM728.4 459.3h1.6v1.6h-1.6zM684.3 462.2h1.2v1.2h-1.2zM682.6 463.9h1.2v1.2h-1.2zM686.3 462h1.2v1.2h-1.2zM688 462h1.2v1.2h-1.2zM688.8 462.3h1.2v1.2h-1.2zM688.8 464h1.2v1.2h-1.2zM696.1 462.2h2.3v2.3h-2.3zM699.2 462.6h2.3v2.3h-2.3zM702.2 464.6h1.2v1.2h-1.2zM705.9 462.4h1.2v1.2h-1.2zM707.6 462.4h1.2v1.2h-1.2zM705.9 464.1h1.2v1.2h-1.2zM709.1 462.2h1.2v1.2h-1.2zM710.8 462.2h1.2v1.2h-1.2zM709.1 463.9h1.2v1.2h-1.2zM711.9 464.2h1.2v1.2h-1.2zM715.3 462.2h2.3v2.3h-2.3zM718.7 462.1h1.2v1.2h-1.2zM718.7 463.8h1.2v1.2h-1.2zM721.8 462.3h1.2v1.2h-1.2zM721.8 464h1.2v1.2h-1.2zM725.2 462.9h1.6v1.6h-1.6zM683.4 465.5h1.6v1.6h-1.6zM686.6 465.9h1.6v1.6h-1.6zM688.9 465.5h1.2v1.2h-1.2zM690.6 465.5h1.2v1.2h-1.2zM692 466.1h2.3v2.3h-2.3zM699.4 465.9h1.2v1.2h-1.2zM701.1 465.9h1.2v1.2h-1.2zM701.8 466h2.3v2.3h-2.3zM705.1 465.9h2.3v2.3h-2.3zM708.5 465.2h2.3v2.3h-2.3zM715.4 466.1h1.2v1.2h-1.2zM718.9 465.5h1.2v1.2h-1.2zM723.3 465.2h1.2v1.2h-1.2zM696.2 468.7h2.3v2.3h-2.3zM699 468.9h2.3v2.3h-2.3zM702 468.4h2.3v2.3h-2.3zM705.8 468.7h1.2v1.2h-1.2zM707.5 468.7h1.2v1.2h-1.2zM708.4 469h2.3v2.3h-2.3zM715.1 469.2h2.3v2.3h-2.3z"/>
<path fill="#b0b0b4" d="M718.8 442h1.2v1.2h-1.2zM689.2 443.4h2.3v2.3h-2.3zM699.4 444.1h1.6v1.6h-1.6zM704.1 443.9h1.2v1.2h-1.2zM702.4 445.6h1.2v1.2h-1.2zM705.4 444h2.3v2.3h-2.3zM715.1 443.7h1.6v1.6h-1.6zM692 448.7h1.2v1.2h-1.2zM695.8 446.8h1.2v1.2h-1.2zM699.1 447h2.3v2.3h-2.3zM705.5 446.3h2.3v2.3h-2.3zM716.8 446.4h1.2v1.2h-1.2zM715.1 448.1h1.2v1.2h-1.2zM718.7 446.6h1.2v1.2h-1.2zM718.7 448.3h1.2v1.2h-1.2zM721.3 447.2h1.2v1.2h-1.2zM721.3 448.9h1.2v1.2h-1.2zM724.9 446.3h2.3v2.3h-2.3zM728.7 446.5h1.2v1.2h-1.2zM682.7 452h1.2v1.2h-1.2zM685.5 449.4h2.3v2.3h-2.3zM699.5 449.6h1.2v1.2h-1.2zM701.2 449.6h1.2v1.2h-1.2zM699.5 451.3h1.2v1.2h-1.2zM702.7 449.5h1.2v1.2h-1.2zM705.3 449.8h2.3v2.3h-2.3zM708.4 449.4h1.2v1.2h-1.2zM713.9 450.1h1.2v1.2h-1.2zM715.1 450.2h2.3v2.3h-2.3zM721.8 450.3h1.2v1.2h-1.2zM679.7 453.1h1.2v1.2h-1.2zM681.4 453.1h1.2v1.2h-1.2zM685.9 452.6h2.3v2.3h-2.3zM697.9 453.1h1.2v1.2h-1.2zM701.8 455h1.2v1.2h-1.2zM708.7 453h2.3v2.3h-2.3zM715.6 453.6h1.6v1.6h-1.6zM721.3 452.6h2.3v2.3h-2.3zM679.4 456.5h1.2v1.2h-1.2zM679.4 458.2h1.2v1.2h-1.2zM689.7 456.6h2.3v2.3h-2.3zM699 456.7h1.2v1.2h-1.2zM699 458.4h1.2v1.2h-1.2zM702.6 456h1.6v1.6h-1.6zM725.6 456.6h1.6v1.6h-1.6zM728.3 456.4h2.3v2.3h-2.3zM679.2 459.4h2.3v2.3h-2.3zM682.7 459.5h1.2v1.2h-1.2zM682.7 461.2h1.2v1.2h-1.2zM686.2 459.8h1.6v1.6h-1.6zM689.5 459.3h1.2v1.2h-1.2zM695.3 459.4h2.3v2.3h-2.3zM718.5 459.4h2.3v2.3h-2.3zM682.6 462.2h1.2v1.2h-1.2zM686.3 463.7h1.2v1.2h-1.2zM690.5 462.3h1.2v1.2h-1.2zM702.2 462.9h1.2v1.2h-1.2zM703.9 462.9h1.2v1.2h-1.2zM711.9 462.5h1.2v1.2h-1.2zM713.6 462.5h1.2v1.2h-1.2zM720.4 462.1h1.2v1.2h-1.2zM723.5 462.3h1.2v1.2h-1.2zM688.9 467.2h1.2v1.2h-1.2zM696.5 466.1h1.6v1.6h-1.6zM699.4 467.6h1.2v1.2h-1.2zM717.1 466.1h1.2v1.2h-1.2zM715.4 467.8h1.2v1.2h-1.2zM720.6 465.5h1.2v1.2h-1.2zM718.9 467.2h1.2v1.2h-1.2zM721.6 465.2h1.2v1.2h-1.2zM721.6 466.9h1.2v1.2h-1.2zM689.1 468.7h1.6v1.6h-1.6zM692.7 469.1h2.3v2.3h-2.3zM705.8 470.4h1.2v1.2h-1.2zM718.2 468.4h1.2v1.2h-1.2z"/>
<path fill="#c9a90a" d="M769.6 389.1h4.8v1.4h-4.8z"/>
<path fill="#f2d000" d="M719.9 468.4h1.2v1.2h-1.2zM696 472.4h1.2v1.2h-1.2zM697.7 472.4h1.2v1.2h-1.2zM699.1 471.6h1.2v1.2h-1.2zM699.1 473.3h1.2v1.2h-1.2zM709 472.4h1.6v1.6h-1.6zM715.7 472.5h1.6v1.6h-1.6zM699 474.7h1.2v1.2h-1.2zM699 476.4h1.2v1.2h-1.2zM701.9 475.1h2.3v2.3h-2.3zM707.5 475.4h1.2v1.2h-1.2zM705.8 477.1h1.2v1.2h-1.2zM709.2 474.7h1.2v1.2h-1.2zM709.2 476.4h1.2v1.2h-1.2zM712.2 475.5h2.3v2.3h-2.3zM720 445.1h3.2v3.2h-3.2zM720 449.9h3.2v3.2h-3.2zM725.3 435.6h1.2v1.2h-1.2zM727.2 435.6h1.2v1.2h-1.2zM725.3 437.5h1.2v1.2h-1.2zM727.2 437.5h1.2v1.2h-1.2zM725.3 439.4h1.2v1.2h-1.2zM727.2 439.4h1.2v1.2h-1.2zM725.3 441.3h1.2v1.2h-1.2zM727.2 441.3h1.2v1.2h-1.2zM725.8 463.1h1.2v1.2h-1.2zM723.9 465h1.2v1.2h-1.2zM725.8 466.9h1.2v1.2h-1.2zM727.7 468.8h1.2v1.2h-1.2zM723.9 470.7h1.2v1.2h-1.2zM725.8 470.7h1.2v1.2h-1.2zM821.2 350.4h12.1v1h-12.1zM821.2 359.8h12.1v1h-12.1zM821.2 351.4h1v8.4h-1zM832.3 351.4h1v8.4h-1zM825.6 358h3.4v1.8h-3.4zM809 359.1h11.1v1h-11.1zM809 368.8h11.1v1h-11.1zM809 360.1h1v8.7h-1zM819.1 360.1h1v8.7h-1zM809.6 363.4h1.6v1.6h-1.6zM817.9 363.4h1.6v1.6h-1.6zM821.5 362.1h1.2v1.2h-1.2zM823.4 362.1h1.2v1.2h-1.2zM821.5 364h1.2v1.2h-1.2zM823.4 364h1.2v1.2h-1.2zM825.3 364h1.2v1.2h-1.2zM775.1 362.8h1.4v1.4h-1.4zM778.6 362.8h1.4v1.4h-1.4zM772.3 365.2h1.4v1.4h-1.4zM783 362.4h1.9v1.9h-1.9zM785.5 362.4h1.9v1.9h-1.9zM783 364.9h1.9v1.9h-1.9zM785.5 364.9h1.9v1.9h-1.9zM790.3 362.8h1.2v1.2h-1.2zM792.2 362.8h1.2v1.2h-1.2zM794.1 362.8h1.2v1.2h-1.2zM790.3 364.7h1.2v1.2h-1.2zM792.2 366.6h1.2v1.2h-1.2zM794.1 366.6h1.2v1.2h-1.2zM777.2 376.3h1.4v1.4h-1.4zM779.1 376.3h1.4v1.4h-1.4zM781 376.3h1.4v1.4h-1.4zM782.9 376.3h1.4v1.4h-1.4zM787.4 373.9h1.2v1.2h-1.2zM787.4 375.8h1.2v1.2h-1.2zM785.5 377.7h1.2v1.2h-1.2zM791.7 376.5h1.2v1.2h-1.2zM791.7 378.4h1.2v1.2h-1.2zM795.9 374.6h1.4v1.4h-1.4zM797.8 374.6h1.4v1.4h-1.4zM799.7 374.6h1.4v1.4h-1.4zM801.6 374.6h1.4v1.4h-1.4zM768.9 387.1h1.4v1.4h-1.4zM770.8 387.1h1.4v1.4h-1.4zM772.7 387.1h1.4v1.4h-1.4zM774.6 387.1h1.4v1.4h-1.4zM776.5 387.1h1.4v1.4h-1.4zM780 384.3h1.2v1.2h-1.2zM781.9 386.2h1.2v1.2h-1.2zM783.8 386.2h1.2v1.2h-1.2zM786.9 386.4h1.4v1.4h-1.4zM788.8 386.4h1.4v1.4h-1.4zM790.7 386.4h1.4v1.4h-1.4zM792.6 386.4h1.4v1.4h-1.4zM794.5 386.4h1.4v1.4h-1.4zM773.6 393.3h1.2v1.2h-1.2zM771.7 397.1h1.2v1.2h-1.2zM775.8 392.6h1.4v1.4h-1.4zM777.7 392.6h1.4v1.4h-1.4zM779.6 392.6h1.4v1.4h-1.4zM781.5 392.6h1.4v1.4h-1.4zM783.4 392.6h1.4v1.4h-1.4zM782.6 396.1h1.2v1.2h-1.2zM784.5 396.1h1.2v1.2h-1.2zM786.9 391.9h1.4v1.4h-1.4zM788.8 391.9h1.4v1.4h-1.4zM790.7 391.9h1.4v1.4h-1.4zM792.6 391.9h1.4v1.4h-1.4zM794.5 391.9h1.4v1.4h-1.4zM787.6 396.1h1.2v1.2h-1.2zM789.5 396.1h1.2v1.2h-1.2zM791.4 396.1h1.2v1.2h-1.2zM793.3 396.1h1.2v1.2h-1.2zM774.9 400.2h1.2v1.2h-1.2zM776.8 400.2h1.2v1.2h-1.2zM773 402.1h1.2v1.2h-1.2zM774.9 402.1h1.2v1.2h-1.2zM776.8 402.1h1.2v1.2h-1.2zM782.6 401.4h1.2v1.2h-1.2zM796.6 385h19.4v14.8h-19.4z"/>
<path fill="#b0b0b4" d="M718.2 470.1h1.2v1.2h-1.2zM692.2 472h2.3v2.3h-2.3zM696 474.1h1.2v1.2h-1.2zM700.8 471.6h1.2v1.2h-1.2zM702.9 472h1.6v1.6h-1.6zM705.3 472.3h2.3v2.3h-2.3zM712.3 472.7h1.6v1.6h-1.6zM700.7 474.7h1.2v1.2h-1.2zM705.8 475.4h1.2v1.2h-1.2zM710.9 474.7h1.2v1.2h-1.2zM725.1 445.1h3.2v3.2h-3.2zM725.1 449.9h3.2v3.2h-3.2zM727.7 461.2h1.2v1.2h-1.2zM723.9 463.1h1.2v1.2h-1.2zM727.7 463.1h1.2v1.2h-1.2zM725.8 465h1.2v1.2h-1.2zM727.7 465h1.2v1.2h-1.2zM723.9 466.9h1.2v1.2h-1.2zM727.7 466.9h1.2v1.2h-1.2zM725.8 468.8h1.2v1.2h-1.2zM727.7 470.7h1.2v1.2h-1.2zM822.8 352.4h2.8v5.8h-2.8zM828.9 352.4h2.8v5.8h-2.8zM811.5 360.6h6.1v2.4h-6.1zM811.5 366h6.1v2.4h-6.1zM825.3 362.1h1.2v1.2h-1.2zM772.3 362.8h1.4v1.4h-1.4zM779 365.2h1.4v1.4h-1.4zM794.1 364.7h1.2v1.2h-1.2zM790.3 366.6h1.2v1.2h-1.2zM785.5 373.9h1.2v1.2h-1.2zM785.5 375.8h1.2v1.2h-1.2zM787.4 377.7h1.2v1.2h-1.2zM791.7 374.6h1.2v1.2h-1.2zM776.9 378.8h1.2v1.2h-1.2zM781.9 384.3h1.2v1.2h-1.2zM783.8 384.3h1.2v1.2h-1.2zM780 386.2h1.2v1.2h-1.2zM771.7 393.3h1.2v1.2h-1.2zM771.7 395.2h1.2v1.2h-1.2zM773.6 395.2h1.2v1.2h-1.2zM780.7 399.5h1.2v1.2h-1.2zM782.6 399.5h1.2v1.2h-1.2zM780.7 401.4h1.2v1.2h-1.2zM784.5 401.4h1.2v1.2h-1.2z"/>
<path fill="#2f2b31" d="M797.5 385.9h17.6v13h-17.6z"/>
<path fill="#f2d000" d="M798.6 385.9h1v1.7h-1zM798.6 397.2h1v1.7h-1zM800.3 385.9h1v1.7h-1zM800.3 397.2h1v1.7h-1zM802 385.9h1v1.7h-1zM802 397.2h1v1.7h-1zM803.7 385.9h1v1.7h-1zM803.7 397.2h1v1.7h-1zM805.4 385.9h1v1.7h-1zM805.4 397.2h1v1.7h-1zM807.2 385.9h1v1.7h-1zM807.2 397.2h1v1.7h-1zM808.9 385.9h1v1.7h-1zM808.9 397.2h1v1.7h-1zM810.6 385.9h1v1.7h-1zM810.6 397.2h1v1.7h-1zM812.3 385.9h1v1.7h-1zM812.3 397.2h1v1.7h-1zM797.5 387h1.7v1h-1.7zM813.4 387h1.7v1h-1.7zM797.5 388.8h1.7v1h-1.7zM813.4 388.8h1.7v1h-1.7zM797.5 390.6h1.7v1h-1.7zM813.4 390.6h1.7v1h-1.7zM797.5 392.4h1.7v1h-1.7zM813.4 392.4h1.7v1h-1.7zM797.5 394.2h1.7v1h-1.7zM813.4 394.2h1.7v1h-1.7zM797.5 396h1.7v1h-1.7zM813.4 396h1.7v1h-1.7z"/>
<path fill="#b0b0b4" d="M800 388.4h12.6v8h-12.6z"/>
<path fill="#f2d000" d="M818 390.3h1.2v1.2h-1.2zM818 394.1h1.2v1.2h-1.2zM821.5 390.9h1.2v1.2h-1.2zM821.5 394.7h1.2v1.2h-1.2zM824.3 392.7h1.2v1.2h-1.2zM825.7 394.1h1.2v1.2h-1.2zM824.3 395.9h1.2v1.2h-1.2zM826.4 394.8h1.2v1.2h-1.2zM802.8 400.6h1.4v1.4h-1.4zM804.7 400.6h1.4v1.4h-1.4zM806.6 400.6h1.4v1.4h-1.4zM808.5 400.6h1.4v1.4h-1.4zM810.4 400.6h1.4v1.4h-1.4zM812.3 400.6h1.4v1.4h-1.4zM807 403h1.2v1.2h-1.2zM807 404.9h1.2v1.2h-1.2zM808.9 404.9h1.2v1.2h-1.2zM815.8 400.1h3v3h-3zM785.5 409.5h2.8v2.8h-2.8zM785.7 414.6h2.4v2.4h-2.4zM789.7 410.3h1.2v1.2h-1.2zM789.7 412.1h1.2v1.2h-1.2zM793.2 405h1.2v7h-1.2zM813.2 411h7.6v1.9h-7.6zM813.9 415.4h1.4v1.4h-1.4zM815.8 415.4h1.4v1.4h-1.4zM817.7 415.4h1.4v1.4h-1.4zM819.6 415.4h1.4v1.4h-1.4zM813.9 417.8h1.4v1.4h-1.4zM815.8 417.8h1.4v1.4h-1.4zM817.7 417.8h1.4v1.4h-1.4zM819.6 417.8h1.4v1.4h-1.4zM715.2 372.1h3v3h-3zM720.1 371.7h3v3h-3zM721 375.7h1.2v1.2h-1.2zM722.6 375.7h1.2v1.2h-1.2zM719.8 381.2h9.2v13.1h-9.2zM719.3 395.9h3.6v4.4h-3.6zM719.6 405.2h3v3h-3zM719.8 402.3h1.3v1.3h-1.3zM739.8 375.3h8.1v15.6h-8.1zM698.3 387.3h19.7v19.4h-19.7z"/>
<path fill="#555" d="M804.4 388.4h.6v7h-.6zM807.2 388.4h.6v7h-.6zM810.1 388.4h.6v7h-.6zM800 391.6h12.6v.6h-12.6z"/>
<path fill="#0a12de" d="M798.7 387.2h1.2v1.2h-1.2zM805 386.2h1.2v1.2h-1.2zM808.4 386.2h1.2v1.2h-1.2zM797.4 390.6h1.2v1.2h-1.2zM798.7 394.8h1.2v1.2h-1.2z"/>
<path fill="#b0b0b4" d="M818 388.4h1.2v1.2h-1.2zM818 392.2h1.2v1.2h-1.2zM821.5 392.8h1.2v1.2h-1.2zM815.8 406.3h3v3h-3zM778.5 409.4h3v3h-3zM779.8 414.3h3v3h-3zM817.1 411.4h3v1.1h-3zM710 372.1h3v3h-3zM723.8 372h2.4v2.4h-2.4zM726.7 395.9h3.6v4.4h-3.6zM724.8 405.2h3v3h-3zM741 385h5.7v4.6h-5.7z"/>
<path fill="#2f2b31" d="M720.9 385.4h7v4.7h-7zM741 381h5.7v4h-5.7zM699.2 388.2h17.9v17.6h-17.9z"/>
<path fill="#f2d000" d="M700.3 388.2h1v1.7h-1zM700.3 404.1h1v1.7h-1zM702 388.2h1v1.7h-1zM702 404.1h1v1.7h-1zM703.8 388.2h1v1.7h-1zM703.8 404.1h1v1.7h-1zM705.5 388.2h1v1.7h-1zM705.5 404.1h1v1.7h-1zM707.3 388.2h1v1.7h-1zM707.3 404.1h1v1.7h-1zM709 388.2h1v1.7h-1zM709 404.1h1v1.7h-1zM710.8 388.2h1v1.7h-1zM710.8 404.1h1v1.7h-1zM712.5 388.2h1v1.7h-1zM712.5 404.1h1v1.7h-1zM714.3 388.2h1v1.7h-1zM714.3 404.1h1v1.7h-1zM699.2 389.3h1.7v1h-1.7zM715.4 389.3h1.7v1h-1.7zM699.2 391h1.7v1h-1.7zM715.4 391h1.7v1h-1.7zM699.2 392.7h1.7v1h-1.7zM715.4 392.7h1.7v1h-1.7zM699.2 394.4h1.7v1h-1.7zM715.4 394.4h1.7v1h-1.7zM699.2 396.1h1.7v1h-1.7zM715.4 396.1h1.7v1h-1.7zM699.2 397.9h1.7v1h-1.7zM715.4 397.9h1.7v1h-1.7zM699.2 399.6h1.7v1h-1.7zM715.4 399.6h1.7v1h-1.7zM699.2 401.3h1.7v1h-1.7zM715.4 401.3h1.7v1h-1.7zM699.2 403h1.7v1h-1.7zM715.4 403h1.7v1h-1.7zM695.4 383.7h1.7v1.7h-1.7zM698.8 383.7h1.7v1.7h-1.7zM706.9 383.7h1.7v1.7h-1.7zM709.9 383.7h1.7v1.7h-1.7zM714.1 383.7h1.7v1.7h-1.7zM702.1 383.1h3v3h-3zM695.5 391.2h1.4v1.4h-1.4zM695.5 394.2h1.4v1.4h-1.4zM695.5 397.3h1.4v1.4h-1.4zM695.5 400.3h1.4v1.4h-1.4zM695.5 403.4h1.4v1.4h-1.4zM702.5 408.1h1.4v1.4h-1.4zM704.4 408.1h1.4v1.4h-1.4zM706.3 408.1h1.4v1.4h-1.4zM708.2 408.1h1.4v1.4h-1.4zM710.1 408.1h1.4v1.4h-1.4zM712 408.1h1.4v1.4h-1.4zM703.8 410.3h1.2v1.2h-1.2zM705.7 410.3h1.2v1.2h-1.2zM701.8 422.4h1.3v1.3h-1.3zM703.8 422.4h1.3v1.3h-1.3zM701.8 424.4h1.3v1.3h-1.3zM703.8 424.4h1.3v1.3h-1.3zM705.8 424.4h1.3v1.3h-1.3zM701.8 426.4h1.3v1.3h-1.3zM703.8 426.4h1.3v1.3h-1.3zM705.8 426.4h1.3v1.3h-1.3zM753 394.3h1.3v3.5h-1.3zM756.5 394.3h1.3v3.5h-1.3zM748.5 399.5h18.6v22.9h-18.6z"/>
<path fill="#b0b0b4" d="M702.6 391.6h11.1v10.8h-11.1zM695.4 380.4h1.7v1.7h-1.7zM698.6 380.4h1.7v1.7h-1.7zM707.1 380.4h1.7v1.7h-1.7zM702.1 377.9h3v3h-3z"/>
<path fill="#0a12de" d="M702.2 388.7h1.4v1.4h-1.4zM712.6 404.1h1.4v1.4h-1.4zM699.7 394.7h1.4v1.4h-1.4zM702.2 404.1h1.4v1.4h-1.4z"/>
<path fill="#2f2b31" d="M749.4 400.4h16.8v21.1h-16.8z"/>
<path fill="#f2d000" d="M750.5 400.4h1v1.7h-1zM750.5 419.8h1v1.7h-1zM752.3 400.4h1v1.7h-1zM752.3 419.8h1v1.7h-1zM754.1 400.4h1v1.7h-1zM754.1 419.8h1v1.7h-1zM756 400.4h1v1.7h-1zM756 419.8h1v1.7h-1zM757.8 400.4h1v1.7h-1zM757.8 419.8h1v1.7h-1zM759.6 400.4h1v1.7h-1zM759.6 419.8h1v1.7h-1zM761.5 400.4h1v1.7h-1zM761.5 419.8h1v1.7h-1zM763.3 400.4h1v1.7h-1zM763.3 419.8h1v1.7h-1zM749.4 401.5h1.7v1h-1.7zM764.5 401.5h1.7v1h-1.7zM749.4 403.2h1.7v1h-1.7zM764.5 403.2h1.7v1h-1.7zM749.4 404.9h1.7v1h-1.7zM764.5 404.9h1.7v1h-1.7zM749.4 406.7h1.7v1h-1.7zM764.5 406.7h1.7v1h-1.7zM749.4 408.4h1.7v1h-1.7zM764.5 408.4h1.7v1h-1.7zM749.4 410.1h1.7v1h-1.7zM764.5 410.1h1.7v1h-1.7zM749.4 411.8h1.7v1h-1.7zM764.5 411.8h1.7v1h-1.7zM749.4 413.5h1.7v1h-1.7zM764.5 413.5h1.7v1h-1.7zM749.4 415.2h1.7v1h-1.7zM764.5 415.2h1.7v1h-1.7zM749.4 417h1.7v1h-1.7zM764.5 417h1.7v1h-1.7zM749.4 418.7h1.7v1h-1.7zM764.5 418.7h1.7v1h-1.7zM741 406.4h1.2v1.2h-1.2zM744.8 406.4h1.2v1.2h-1.2zM742.9 408.3h1.2v1.2h-1.2zM744.8 408.3h1.2v1.2h-1.2zM741 410.2h1.2v1.2h-1.2zM739.1 412.1h1.2v1.2h-1.2zM742.9 412.1h1.2v1.2h-1.2zM741 414h1.2v1.2h-1.2zM742.9 414h1.2v1.2h-1.2zM744.8 414h1.2v1.2h-1.2zM739.1 415.9h1.2v1.2h-1.2zM739.1 419.7h1.2v1.2h-1.2zM742.9 419.7h1.2v1.2h-1.2zM742.9 421.6h1.2v1.2h-1.2zM744.8 421.6h1.2v1.2h-1.2zM712.1 418h9.7v10.7h-9.7zM748.8 423.8h1.2v1.2h-1.2zM752.7 423.8h1.2v1.2h-1.2zM758.6 423.8h1.2v1.2h-1.2zM760.5 423.8h1.2v1.2h-1.2zM762.5 423.8h1.2v1.2h-1.2zM748.8 425.8h1.2v1.2h-1.2zM750.8 425.8h1.2v1.2h-1.2zM752.7 425.8h1.2v1.2h-1.2zM754.7 425.8h1.2v1.2h-1.2zM758.6 425.8h1.2v1.2h-1.2zM762.5 425.8h1.2v1.2h-1.2zM764.4 425.8h1.2v1.2h-1.2zM748.8 427.7h1.2v1.2h-1.2zM752.7 427.7h1.2v1.2h-1.2zM754.7 427.7h1.2v1.2h-1.2zM758.6 427.7h1.2v1.2h-1.2zM760.5 427.7h1.2v1.2h-1.2zM764.4 427.7h1.2v1.2h-1.2zM748.8 429.7h1.2v1.2h-1.2zM750.8 429.7h1.2v1.2h-1.2zM752.7 429.7h1.2v1.2h-1.2zM754.7 429.7h1.2v1.2h-1.2zM760.5 429.7h1.2v1.2h-1.2zM762.5 429.7h1.2v1.2h-1.2zM764.4 429.7h1.2v1.2h-1.2zM752.7 431.6h1.2v1.2h-1.2zM754.7 431.6h1.2v1.2h-1.2zM756.6 431.6h1.2v1.2h-1.2zM758.6 431.6h1.2v1.2h-1.2zM750.2 434.9h8.3v1h-8.3zM750.2 446.1h8.3v1h-8.3zM750.2 435.9h1v10.2h-1zM757.5 435.9h1v10.2h-1zM753.9 436.5h1v9h-1z"/>
<path fill="#b0b0b4" d="M751.7 402.7h12.2v16.5h-12.2zM751.9 403.4h10.8v13.4h-10.8zM744.8 412.1h1.2v1.2h-1.2zM739.1 414h1.2v1.2h-1.2zM742.9 415.9h1.2v1.2h-1.2zM717.9 419.6h2.3v2.8h-2.3zM758.6 429.7h1.2v1.2h-1.2z"/>
<path fill="#0a12de" d="M749.8 401.4h1.3v1.3h-1.3zM749.8 406.5h1.3v1.3h-1.3zM764.1 418.9h1.3v1.3h-1.3z"/>
<path fill="#8a8a90" d="M752 439h5v4h-5z"/>
<path fill="#2f2b31" d="M757 403.4h.8v13.4h-.8zM751.9 409.8h10.8v.8h-10.8zM716.4 419.5h1v7.7h-1zM713.6 422.9h6.7v1h-6.7z"/>
<path fill="#f2d000" d="M750.2 448.1h1.2v1.2h-1.2zM752.1 448.1h1.2v1.2h-1.2zM750.2 450h1.2v1.2h-1.2zM752.1 450h1.2v1.2h-1.2zM750.2 451.9h1.2v1.2h-1.2zM752.1 451.9h1.2v1.2h-1.2zM757.1 450.1h1.2v1.2h-1.2zM757.1 452h1.2v1.2h-1.2zM759 452h1.2v1.2h-1.2zM757.1 453.9h1.2v1.2h-1.2zM759 453.9h1.2v1.2h-1.2zM758.9 462.6h1.3v1.3h-1.3zM760.8 462.6h1.3v1.3h-1.3zM762.7 462.6h1.3v1.3h-1.3zM764.6 462.6h1.3v1.3h-1.3zM766.5 462.6h1.3v1.3h-1.3zM752.8 461.5h1.2v1.2h-1.2zM754.7 461.5h1.2v1.2h-1.2zM752.8 463.4h1.2v1.2h-1.2zM754.7 463.4h1.2v1.2h-1.2zM752.8 465.3h1.2v1.2h-1.2zM789 414.4h23.9v31.9h-23.9z"/>
<path fill="#0a12de" d="M751.8 440.5h1.2v1.5h-1.2z"/>
<path fill="#8f8a50" d="M749.5 456.4h3.5v3.5h-3.5zM759.2 457.1h6.2v4.4h-6.2z"/>
<path fill="#b0b0b4" d="M750.9 465.3h1.2v1.2h-1.2zM754.7 465.3h1.2v1.2h-1.2zM763.4 465h1.2v1.2h-1.2z"/>
<path fill="#2f2b31" d="M790 415.4h21.9v29.9h-21.9z"/>
<path fill="#f2d000" d="M791.5 415.4h1v2.4h-1zM791.5 442.9h1v2.4h-1zM793.4 415.4h1v2.4h-1zM793.4 442.9h1v2.4h-1zM795.2 415.4h1v2.4h-1zM795.2 442.9h1v2.4h-1zM797 415.4h1v2.4h-1zM797 442.9h1v2.4h-1zM798.9 415.4h1v2.4h-1zM798.9 442.9h1v2.4h-1zM800.8 415.4h1v2.4h-1zM800.8 442.9h1v2.4h-1zM802.6 415.4h1v2.4h-1zM802.6 442.9h1v2.4h-1zM804.5 415.4h1v2.4h-1zM804.5 442.9h1v2.4h-1zM806.3 415.4h1v2.4h-1zM806.3 442.9h1v2.4h-1zM808.1 415.4h1v2.4h-1zM808.1 442.9h1v2.4h-1zM810 415.4h1v2.4h-1zM810 442.9h1v2.4h-1zM790 417.5h2.6v1h-2.6zM809.3 417.5h2.6v1h-2.6zM790 419.4h2.6v1h-2.6zM809.3 419.4h2.6v1h-2.6zM790 421.2h2.6v1h-2.6zM809.3 421.2h2.6v1h-2.6zM790 423.1h2.6v1h-2.6zM809.3 423.1h2.6v1h-2.6zM790 424.9h2.6v1h-2.6zM809.3 424.9h2.6v1h-2.6zM790 426.8h2.6v1h-2.6zM809.3 426.8h2.6v1h-2.6zM790 428.6h2.6v1h-2.6zM809.3 428.6h2.6v1h-2.6zM790 430.4h2.6v1h-2.6zM809.3 430.4h2.6v1h-2.6zM790 432.3h2.6v1h-2.6zM809.3 432.3h2.6v1h-2.6zM790 434.1h2.6v1h-2.6zM809.3 434.1h2.6v1h-2.6zM790 436h2.6v1h-2.6zM809.3 436h2.6v1h-2.6zM790 437.9h2.6v1h-2.6zM809.3 437.9h2.6v1h-2.6zM790 439.7h2.6v1h-2.6zM809.3 439.7h2.6v1h-2.6zM790 441.6h2.6v1h-2.6zM809.3 441.6h2.6v1h-2.6zM790 443.4h2.6v1h-2.6zM809.3 443.4h2.6v1h-2.6z"/>
<path fill="#b0b0b4" d="M793.8 419h14.2v21.7h-14.2z"/>
<path fill="#f2d000" d="M813.2 412.1h1.2v1.2h-1.2zM815.1 412.1h1.2v1.2h-1.2zM817 412.1h1.2v1.2h-1.2zM818.9 412.1h1.2v1.2h-1.2zM813.9 418h1.4v1.4h-1.4zM815.8 418h1.4v1.4h-1.4zM817.7 418h1.4v1.4h-1.4zM819.6 418h1.4v1.4h-1.4zM814.6 437.7h1.4v1.4h-1.4zM816.5 437.7h1.4v1.4h-1.4zM818.4 437.7h1.4v1.4h-1.4zM813.6 446.5h1.4v1.4h-1.4zM815.5 446.5h1.4v1.4h-1.4zM813.3 420.5h1.2v1.2h-1.2zM813.3 423.2h1.2v1.2h-1.2zM813.3 430.2h1.2v1.2h-1.2zM813.6 441.9h1.2v1.2h-1.2zM782.6 419.6h1.4v1.4h-1.4zM784.5 419.6h1.4v1.4h-1.4zM782.6 423h1.4v1.4h-1.4zM784.5 423h1.4v1.4h-1.4zM782.6 429.9h1.4v1.4h-1.4zM784.5 429.9h1.4v1.4h-1.4zM782.6 434.1h1.4v1.4h-1.4zM784.5 434.1h1.4v1.4h-1.4zM782.6 438.2h1.4v1.4h-1.4zM784.5 438.2h1.4v1.4h-1.4zM782.6 442.4h1.4v1.4h-1.4zM784.5 442.4h1.4v1.4h-1.4zM781.2 427.1h1.2v1.2h-1.2zM785.5 410h2.8v2.8h-2.8zM785.5 414.4h2.8v2.8h-2.8zM789.9 411h1.4v1.4h-1.4zM793.1 410.4h1.4v1.4h-1.4zM795.9 411.4h1.4v1.4h-1.4zM772.9 438.3h1.6v1.6h-1.6zM777.4 442.4h1.6v1.6h-1.6z"/>
<path fill="#66646c" d="M797 419h.6v21.7h-.6zM800.6 419h.6v21.7h-.6zM804.1 419h.6v21.7h-.6zM793.8 422.3h14.2v.6h-14.2zM793.8 425.9h14.2v.6h-14.2zM793.8 429.5h14.2v.6h-14.2zM793.8 433.1h14.2v.6h-14.2zM793.8 436.7h14.2v.6h-14.2z"/>
<path fill="#0a12de" d="M790.2 428h2.6v3h-2.6zM790.2 434h2.6v3h-2.6zM790.2 440h2.6v2.4h-2.6zM809 434.4h2.6v3.1h-2.6zM813.3 434.3h1.2v1.2h-1.2z"/>
<path fill="#b0b0b4" d="M813.2 414h1.2v1.2h-1.2zM817 414h1.2v1.2h-1.2zM813.3 426h1.2v1.2h-1.2zM819.5 436.4h1.2v1.2h-1.2zM780.7 419.6h1.4v1.4h-1.4zM780.7 423h1.4v1.4h-1.4zM780.7 429.9h1.4v1.4h-1.4zM780.7 434.1h1.4v1.4h-1.4zM780.7 438.2h1.4v1.4h-1.4zM780.7 442.4h1.4v1.4h-1.4zM784.9 426.7h1.2v1.2h-1.2zM780.7 432.2h1.2v1.2h-1.2zM784.9 436.4h1.2v1.2h-1.2zM779.9 410.3h2.8v2.8h-2.8zM780.4 414.4h2.8v2.8h-2.8zM775.7 439h1.6v1.6h-1.6zM773.6 441.7h1.6v1.6h-1.6z"/>
<path d="M780.7 467.4L793.1 455.0M778.6 451.8L782.0 448.8L785.8 451.8M786.9 457.8L791.7 453.2" stroke="#f2d000" stroke-width="0.9" fill="none"/><path d="M785.5 455.7L790.3 451.5M782.5 452.2L785.2 455.0" stroke="#9a98a0" stroke-width="0.9" fill="none"/>
<path fill="#f2d000" d="M771.4 451.9h1.3v1.3h-1.3zM773.4 451.9h1.3v1.3h-1.3zM771.4 453.9h1.3v1.3h-1.3zM773.4 453.9h1.3v1.3h-1.3zM796 447.9h1.2v5h-1.2zM798.7 452.6h1.2v1.2h-1.2z"/>
<rect x="764.3" y="475.4" width="21.2" height="19.6" fill="url(#bgb)"/>
<path fill="#f2d000" d="M764.3 475.4h21.2v.9h-21.2zM764.3 494.1h21.2v.9h-21.2zM764.3 476.3h.9v17.8h-.9zM784.6 476.3h.9v17.8h-.9zM756.3 476.4h1.2v1.2h-1.2zM758.2 476.4h1.2v1.2h-1.2zM760.1 476.4h1.2v1.2h-1.2zM754.4 478.3h1.2v1.2h-1.2zM756.3 478.3h1.2v1.2h-1.2zM756.3 480.2h1.2v1.2h-1.2zM758.2 480.2h1.2v1.2h-1.2zM760.1 480.2h1.2v1.2h-1.2zM756.1 485h1.5v1.5h-1.5zM794.7 476.9h3.1v3.1h-3.1zM800.6 476.9h3.1v3.1h-3.1zM787 498.1h3.1v3.1h-3.1zM797 491.3h3.4v3.4h-3.4zM787.5 487.4h2v2h-2zM787.5 491.7h2v2h-2zM792.1 483.4h2v2h-2zM798.3 484.8h2v2h-2zM795.6 480.9h2v2h-2zM789.8 480.6h2v2h-2zM795.6 489.5h2v2h-2zM805.3 489.9h2v2h-2zM787.4 494h2.2v2.2h-2.2zM801.8 481.2h1.2v1.2h-1.2zM801.8 483.1h1.2v1.2h-1.2zM803.7 483.1h1.2v1.2h-1.2zM801.8 485h1.2v1.2h-1.2zM801.8 486.9h1.2v1.2h-1.2zM803.7 486.9h1.2v1.2h-1.2zM801.8 488.8h1.2v1.2h-1.2zM803.7 488.8h1.2v1.2h-1.2zM801.8 490.7h1.2v1.2h-1.2zM803.7 490.7h1.2v1.2h-1.2zM801.8 492.6h1.2v1.2h-1.2zM801.8 494.5h1.2v1.2h-1.2zM803.7 494.5h1.2v1.2h-1.2zM801.8 496.4h1.2v1.2h-1.2zM801.8 498.3h1.2v1.2h-1.2zM803.7 500.2h1.2v1.2h-1.2zM806 486.9h1.2v1.2h-1.2zM745.1 492.6h1.4v1.4h-1.4zM747 492.6h1.4v1.4h-1.4zM748.9 492.6h1.4v1.4h-1.4zM750.8 492.6h1.4v1.4h-1.4z"/>
<path fill="#0a12de" d="M771.7 480.2h1.2v1.7h-1.2zM767.4 478.4h1.2v1.4h-1.2zM772.3 480.8h1.2v3.1h-1.2zM768.5 490.3h1.2v1.4h-1.2zM771.5 490.2h1.2v2.8h-1.2zM781.1 489.6h1.2v2.5h-1.2zM781 484.5h1.2v3.1h-1.2zM778.2 492.3h1.2v1.3h-1.2zM767.7 486.8h2.9v1.2h-2.9zM773.6 485.2h2v1.2h-2zM770.5 483.6h1.6v1.2h-1.6zM778.8 487.3h1.3v1.2h-1.3zM768.8 483.2h2.7v1.2h-2.7zM767.7 480.5h2v1.2h-2zM775.4 482.5h1.2v2.3h-1.2zM779.9 486.4h1.4v1.2h-1.4zM778.3 491h1.8v1.2h-1.8zM780.5 477.8h1.2v1.2h-1.2zM771.5 481.9h1.5v1.2h-1.5zM774.3 491.3h2.1v1.2h-2.1zM776.7 480h1.2v2.9h-1.2zM773.5 490.1h2.1v1.2h-2.1zM770.8 491h1.9v1.2h-1.9zM781.2 481.5h1.2v1.7h-1.2zM768.9 492.1h3.2v1.2h-3.2zM769.1 486.4h2.4v1.2h-2.4zM780.6 490.7h1.2v3h-1.2zM777.1 492.5h1.9v1.2h-1.9zM771 487.9h1.2v1.9h-1.2zM770.4 485.7h2.7v1.2h-2.7zM766 483.3h1.3v1.2h-1.3zM773.3 491.6h1.2v1.6h-1.2zM778.8 485.7h1.2v1.9h-1.2zM775.2 486h1.9v1.2h-1.9zM773.7 481.6h1.2v2.9h-1.2zM767.7 481.3h1.2v2.4h-1.2zM773.1 480.3h1.2v1.5h-1.2zM775.4 489.1h1.3v1.2h-1.3zM779.8 481.9h1.2v2.6h-1.2zM780.3 485.2h1.4v1.2h-1.4zM773.4 488.3h1.2v2.4h-1.2zM781.5 485.2h2.3v1.2h-2.3zM770.8 480.7h3.2v1.2h-3.2zM773.6 481h1.2v2h-1.2zM772.4 478.9h1.2v3.2h-1.2zM779.6 482h1.2v3.1h-1.2zM775.3 481.2h1.2v1.7h-1.2zM770.1 486.6h3v1.2h-3z"/>
<path fill="#b0b0b4" d="M753.6 485h1.5v1.5h-1.5zM788.4 476.9h3.1v3.1h-3.1zM805.8 476.9h3.1v3.1h-3.1zM792.3 498.1h3.1v3.1h-3.1zM796.9 497.3h3v3h-3zM791.4 494.1h2v2h-2zM792.1 487.1h2v2h-2zM798.3 480.9h2v2h-2zM803.7 485h1.2v1.2h-1.2zM803.7 498.3h1.2v1.2h-1.2zM806 483.1h1.2v1.2h-1.2zM750.2 490.9h1.4v1.4h-1.4z"/>
<path fill="#8f8a50" d="M745.1 496h3.7v3.9h-3.7z"/>
<path fill="#f2d000" d="M746.5 497.3h1.3v2h-1.3zM746.5 499.9h1.3v2h-1.3zM746.5 502.5h1.3v2h-1.3zM746.5 505.1h1.3v2h-1.3zM750.9 497.3h1.3v2h-1.3zM750.9 499.9h1.3v2h-1.3zM750.9 502.5h1.3v2h-1.3zM750.9 505.1h1.3v2h-1.3zM755.5 497.3h1.3v2h-1.3zM755.5 499.9h1.3v2h-1.3zM755.5 502.5h1.3v2h-1.3zM755.5 505.1h1.3v2h-1.3zM761.3 497.3h1.3v2h-1.3zM761.3 499.9h1.3v2h-1.3zM761.3 502.5h1.3v2h-1.3zM761.3 505.1h1.3v2h-1.3zM766.6 497.3h1.3v2h-1.3zM766.6 499.9h1.3v2h-1.3zM766.6 502.5h1.3v2h-1.3zM766.6 505.1h1.3v2h-1.3zM771.4 497.3h1.3v2h-1.3zM771.4 499.9h1.3v2h-1.3zM771.4 502.5h1.3v2h-1.3zM771.4 505.1h1.3v2h-1.3zM751.6 515.5h1.3v2h-1.3zM751.6 518.2h1.3v2h-1.3zM751.6 520.8h1.3v2h-1.3zM751.6 523.4h1.3v2h-1.3zM756.2 515.5h1.3v2h-1.3zM756.2 518.2h1.3v2h-1.3zM756.2 520.8h1.3v2h-1.3zM756.2 523.4h1.3v2h-1.3zM762 515.5h1.3v2h-1.3zM762 518.2h1.3v2h-1.3zM762 520.8h1.3v2h-1.3zM762 523.4h1.3v2h-1.3zM767.6 515.5h1.3v2h-1.3zM767.6 518.2h1.3v2h-1.3zM767.6 520.8h1.3v2h-1.3zM767.6 523.4h1.3v2h-1.3zM773.1 515.5h1.3v2h-1.3zM773.1 518.2h1.3v2h-1.3zM773.1 520.8h1.3v2h-1.3zM773.1 523.4h1.3v2h-1.3zM741.5 515.1h8.7v1.1h-8.7zM741.5 525.8h8.7v1.1h-8.7zM741.5 516.2h1.1v9.6h-1.1zM749.1 516.2h1.1v9.6h-1.1z"/>
<path fill="#b0b0b4" d="M753.1 501.4h1.1v1.1h-1.1zM757.5 501.4h1.1v1.1h-1.1zM764.2 501.4h1.1v1.1h-1.1zM773.2 501.4h1.1v1.1h-1.1zM753.8 519.8h1.1v1.1h-1.1zM758.7 519.8h1.1v1.1h-1.1zM760.7 519.8h1.1v1.1h-1.1zM775.3 519.8h1.1v1.1h-1.1zM743.5 517h4.7v2h-4.7zM743.5 523h4.7v2.4h-4.7z"/>
<path fill="#8f8a50" d="M750.2 508.9h2.8v3.5h-2.8zM755.1 508.9h3.5v3.5h-3.5zM761.3 508.9h3.5v3.5h-3.5zM767.2 508.9h3.5v3.5h-3.5zM772.8 508.9h3.3v3.5h-3.3z"/>
<path fill="#9a9460" d="M774.4 496.5h9.7v3.5h-9.7z"/>
<path fill="#f2d000" d="M745.4 516h.9v10h-.9zM745.1 528.3h1.3v1.3h-1.3zM747 528.3h1.3v1.3h-1.3zM745.1 530.2h1.3v1.3h-1.3zM747 530.2h1.3v1.3h-1.3zM745.1 532.1h1.3v1.3h-1.3zM747 534h1.3v1.3h-1.3zM758.1 529h1.2v1.2h-1.2zM760 529h1.2v1.2h-1.2zM756.2 530.9h1.2v1.2h-1.2zM758.1 530.9h1.2v1.2h-1.2zM761.9 530.9h1.2v1.2h-1.2zM763.8 530.9h1.2v1.2h-1.2zM765.8 526.9h11.1v10.1h-11.1z"/>
<path fill="#b0b0b4" d="M763.8 529h1.2v1.2h-1.2z"/>
<path fill="#2f2b31" d="M766.7 527.8h9.3v8.3h-9.3z"/>
<path fill="#f2d000" d="M767.8 527.8h1v1.7h-1zM767.8 534.4h1v1.7h-1zM769.6 527.8h1v1.7h-1zM769.6 534.4h1v1.7h-1zM771.3 527.8h1v1.7h-1zM771.3 534.4h1v1.7h-1zM773.1 527.8h1v1.7h-1zM773.1 534.4h1v1.7h-1zM766.7 528.9h1.7v1h-1.7zM774.3 528.9h1.7v1h-1.7zM766.7 530.9h1.7v1h-1.7zM774.3 530.9h1.7v1h-1.7zM766.7 533h1.7v1h-1.7zM774.3 533h1.7v1h-1.7zM779.1 531.7h1.2v1.2h-1.2zM805.2 512.1h11v8.9h-11zM791.5 520.4h9.2v7.9h-9.2zM792.1 529h1.2v1.2h-1.2zM794 529h1.2v1.2h-1.2zM797.7 529h1.2v1.2h-1.2zM792.1 530.8h1.2v1.2h-1.2zM794 530.8h1.2v1.2h-1.2zM797.7 530.8h1.2v1.2h-1.2zM803.2 524.8h15.5v.9h-15.5zM803.2 539.1h15.5v.9h-15.5zM803.2 525.7h.9v13.4h-.9zM817.8 525.7h.9v13.4h-.9zM804.7 526.3h12.5v.7h-12.5zM804.7 537.8h12.5v.7h-12.5zM804.7 527h.7v10.8h-.7zM816.5 527h.7v10.8h-.7zM818.7 519.2h1.5v1.5h-1.5zM821.1 515.8h2.2v2.2h-2.2zM821.1 519.4h2.2v2.2h-2.2zM821.1 523h2.2v2.2h-2.2zM821.1 526.6h2.2v2.2h-2.2zM821.1 530.2h2.2v2.2h-2.2zM821.1 533.8h2.2v2.2h-2.2zM821.1 537.4h2.2v2.2h-2.2zM821.1 541h2.2v2.2h-2.2zM797.8 533.9h1.7v1.7h-1.7zM795.4 536.8h2.4v2.4h-2.4zM803.4 543.4h3v3h-3zM808.9 543.4h3v3h-3zM812.7 543.4h3v3h-3zM817.9 543.4h3v3h-3zM822.3 543.2h1.2v1.2h-1.2zM822.3 545.3h1.2v1.2h-1.2zM806.5 548.4h1.5v1.5h-1.5zM813 548h2.2v2.2h-2.2zM816.3 548h2.2v2.2h-2.2zM800.4 551h2.2v2.2h-2.2zM803.9 551h2.2v2.2h-2.2zM810.4 551h2.2v2.2h-2.2zM819.3 551h2.2v2.2h-2.2zM822.1 551h2.2v2.2h-2.2zM799.8 554.8h2.2v2.2h-2.2zM806.5 554.8h2.2v2.2h-2.2zM816.6 554.8h2.2v2.2h-2.2zM818.9 554.8h2.2v2.2h-2.2zM823.1 554.8h2.2v2.2h-2.2zM803.3 558h2.2v2.2h-2.2zM810.6 558.3h1.5v1.5h-1.5zM812.6 558h2.2v2.2h-2.2zM817 558.3h1.5v1.5h-1.5zM819.5 558h2.2v2.2h-2.2zM822.2 558h2.2v2.2h-2.2zM740.5 546.9h2.2v2.2h-2.2zM758.8 546.9h2.2v2.2h-2.2zM746.8 559.6h2.2v2.2h-2.2zM749.1 547.6h1.3v1.3h-1.3zM767.3 547.6h1.3v1.3h-1.3zM744.4 558.7h1.3v1.3h-1.3zM744.4 560.9h1.3v1.3h-1.3zM751.6 547.3h4.8v3.2h-4.8zM770 547.3h4.7v3.2h-4.7zM783.1 554.6h2v2h-2zM782 558.8h2v2h-2zM787 559.2h2v2h-2zM790 559.2h2v2h-2zM793.5 559.2h2v2h-2zM569.8 484h22.5v22.6h-22.5z"/>
<path fill="#b0b0b4" d="M768.8 529.9h5.1v4.1h-5.1zM779.1 533.6h1.2v1.2h-1.2zM777.2 535.5h1.2v1.2h-1.2zM779.1 535.5h1.2v1.2h-1.2zM806.8 513.5h2.8v2.1h-2.8zM811.8 517.5h2.8v2.2h-2.8zM795.8 530.8h1.2v1.2h-1.2zM803.5 513.8h1.2v1.2h-1.2zM825.1 515.9h2v2h-2zM825.1 519.5h2v2h-2zM825.1 523.1h2v2h-2zM825.1 526.7h2v2h-2zM825.1 530.3h2v2h-2zM825.1 533.9h2v2h-2zM825.1 537.5h2v2h-2zM794.3 533.9h1.7v1.7h-1.7zM799.2 539.2h1.7v1.7h-1.7zM795.1 540.5h2.4v2.4h-2.4zM800.5 548h2.2v2.2h-2.2zM804.3 548.4h1.5v1.5h-1.5zM810 548h2.2v2.2h-2.2zM819.2 548h2.2v2.2h-2.2zM822.2 548h2.2v2.2h-2.2zM807.2 551h2.2v2.2h-2.2zM812.7 551h2.2v2.2h-2.2zM816.8 551h2.2v2.2h-2.2zM803.3 554.8h2.2v2.2h-2.2zM809.4 554.8h2.2v2.2h-2.2zM813.3 554.8h2.2v2.2h-2.2zM800.8 558h2.2v2.2h-2.2zM806.3 558h2.2v2.2h-2.2zM740.5 550.8h2.2v2.2h-2.2zM758.8 550.8h2.2v2.2h-2.2zM749.1 549.8h1.3v1.3h-1.3zM767.3 549.8h1.3v1.3h-1.3zM747.2 556.3h1.3v1.3h-1.3zM751.6 554.2h4.8v2.4h-4.8zM770.3 554.2h4.4v2.4h-4.4zM779.2 554.6h2v2h-2zM787 555.3h2v2h-2zM790 555.3h2v2h-2zM793.5 555.3h2v2h-2z"/>
<path fill="#0a12de" d="M806.3 527.6h.9v9.6h-.9zM810.5 527.6h.9v9.6h-.9zM814.7 527.6h.9v9.6h-.9z"/>
<path fill="#8886a0" d="M808.4 527.6h.9v9.6h-.9zM812.6 527.6h.9v9.6h-.9z"/>
<path fill="#8f8a50" d="M745.4 547.3h2.8v2.4h-2.8zM763.4 547.3h2.8v2.4h-2.8zM739.8 558.4h2.8v3.5h-2.8zM797.7 557.7h3v3.6h-3z"/>
<path fill="#2f2b31" d="M810.2 513.3h1v6.5h-1zM806.6 516h8.2v1h-8.2zM793 523h3v1.6h-3zM797 521.6h2.4v1.4h-2.4zM570.7 484.9h20.7v20.8h-20.7z"/>
<path fill="#f2d000" d="M571.8 484.9h1v1.7h-1zM571.8 504h1v1.7h-1zM573.6 484.9h1v1.7h-1zM573.6 504h1v1.7h-1zM575.5 484.9h1v1.7h-1zM575.5 504h1v1.7h-1zM577.3 484.9h1v1.7h-1zM577.3 504h1v1.7h-1zM579.2 484.9h1v1.7h-1zM579.2 504h1v1.7h-1zM581 484.9h1v1.7h-1zM581 504h1v1.7h-1zM582.9 484.9h1v1.7h-1zM582.9 504h1v1.7h-1zM584.8 484.9h1v1.7h-1zM584.8 504h1v1.7h-1zM586.6 484.9h1v1.7h-1zM586.6 504h1v1.7h-1zM588.4 484.9h1v1.7h-1zM588.4 504h1v1.7h-1zM570.7 486h1.7v1h-1.7zM589.7 486h1.7v1h-1.7zM570.7 487.9h1.7v1h-1.7zM589.7 487.9h1.7v1h-1.7zM570.7 489.7h1.7v1h-1.7zM589.7 489.7h1.7v1h-1.7zM570.7 491.6h1.7v1h-1.7zM589.7 491.6h1.7v1h-1.7zM570.7 493.4h1.7v1h-1.7zM589.7 493.4h1.7v1h-1.7zM570.7 495.3h1.7v1h-1.7zM589.7 495.3h1.7v1h-1.7zM570.7 497.2h1.7v1h-1.7zM589.7 497.2h1.7v1h-1.7zM570.7 499h1.7v1h-1.7zM589.7 499h1.7v1h-1.7zM570.7 500.9h1.7v1h-1.7zM589.7 500.9h1.7v1h-1.7zM570.7 502.7h1.7v1h-1.7zM589.7 502.7h1.7v1h-1.7zM557.3 490h10.4v12.4h-10.4zM552.2 503.1h13.4v10.7h-13.4zM552.1 493.4h2v2h-2zM552.1 496.8h2v2h-2zM552.1 499.6h2v2h-2zM553.8 483h1.3v1.3h-1.3zM555.7 483h1.3v1.3h-1.3zM557.6 483h1.3v1.3h-1.3zM553.8 484.9h1.3v1.3h-1.3zM555.7 484.9h1.3v1.3h-1.3zM557.6 484.9h1.3v1.3h-1.3zM563.3 487.3h1.2v1.2h-1.2zM569.5 507.9h4.2v5.1h-4.2zM576.3 507.9h4.2v5.1h-4.2zM581.1 507.9h4.2v5.1h-4.2zM587.8 507.9h4.2v5.1h-4.2zM571.5 514.4h2.1v2.1h-2.1zM575.6 514.4h2.1v2.1h-2.1zM583.9 514.4h2.1v2.1h-2.1zM587.7 514.4h2.1v2.1h-2.1zM572.2 517.8h2.1v2.1h-2.1zM575.6 517.8h2.1v2.1h-2.1zM583.9 517.8h2.1v2.1h-2.1zM587.7 517.8h2.1v2.1h-2.1zM568.4 521.7h2.1v2.1h-2.1zM572.2 521.7h2.1v2.1h-2.1zM575.6 521.7h2.1v2.1h-2.1zM580.5 521.7h2.1v2.1h-2.1zM583.9 521.7h2.1v2.1h-2.1zM587.7 521.7h2.1v2.1h-2.1zM593.6 486.6h2.2v2.2h-2.2zM597.4 486.6h2.2v2.2h-2.2zM593.6 496h2.2v2.2h-2.2z"/>
<path fill="#b0b0b4" d="M574 488.2h14.1v14.2h-14.1zM558.6 497.5h2.9v3.5h-2.9zM560 508h4.4v4.6h-4.4zM563.3 485.4h1.2v1.2h-1.2zM565.2 485.4h1.2v1.2h-1.2zM565.2 487.3h1.2v1.2h-1.2zM568.4 517.8h2.1v2.1h-2.1zM580.5 517.8h2.1v2.1h-2.1zM593.6 482.9h2.2v2.2h-2.2zM597.4 482.9h2.2v2.2h-2.2zM597.4 490.1h2.2v2.2h-2.2zM593.6 499.5h2.2v2.2h-2.2z"/>
<path fill="#0a12de" d="M571.4 487.7h1.5v1.5h-1.5zM571.4 498.1h1.5v1.5h-1.5zM589.4 491.6h1.5v1.5h-1.5zM585.6 485h1.5v1.5h-1.5z"/>
<path fill="#2f2b31" d="M558.6 495h7.8v1.6h-7.8zM558.4 504h.8v9.8h-.8z"/>
<path fill="#f2d000" d="M593.6 501.6h2.2v2.2h-2.2zM593.2 508.5h2.2v2.2h-2.2zM597 507.8h2.2v2.2h-2.2zM604 507.8h2.2v2.2h-2.2zM614.3 507.8h2.2v2.2h-2.2zM598 493.9h2.4v2.4h-2.4zM597.4 499.2h3.5v2.1h-3.5zM602.3 499.2h3.9v2.1h-3.9zM612.8 488.4h3v3h-3zM617.7 484.2h2.4v2.4h-2.4zM608.7 488.7h2.4v2.4h-2.4zM617.7 488.3h2.4v2.4h-2.4zM616.2 492.6h1.3v1.3h-1.3zM616.2 495h1.3v1.3h-1.3zM616.2 497.3h1.3v1.3h-1.3zM616.2 499.7h1.3v1.3h-1.3zM616.2 502h1.3v1.3h-1.3zM621.9 483.7h9.4v1.2h-9.4zM621.9 490.4h9.4v1.2h-9.4zM621.9 484.9h1.2v5.5h-1.2zM630.1 484.9h1.2v5.5h-1.2zM627.8 492h1.5v1.5h-1.5zM628.3 495.5h8.3v9.7h-8.3zM617.9 502.4h2v2h-2zM621.4 502.4h2v2h-2zM624.8 502.4h2v2h-2zM620.2 506.4h3v3h-3zM618.2 506.9h1.3v1.3h-1.3zM622.1 511h1.3v1.3h-1.3zM624.1 511h1.3v1.3h-1.3zM600.9 513.1h17.6v11.4h-17.6z"/>
<path fill="#b0b0b4" d="M599.8 508.5h2.2v2.2h-2.2zM607.4 508.2h2.2v2.2h-2.2zM610.6 508.2h2.2v2.2h-2.2zM597.4 504.1h3.5v2.1h-3.5zM602.3 504.1h3.9v2.1h-3.9zM608.9 485.3h2v2h-2zM612.8 483.2h3v3h-3zM626.5 485h3.5v5.3h-3.5zM632.1 492.1h1.8v1.8h-1.8zM625.2 506.2h3.4v3.4h-3.4z"/>
<path fill="#8f8a50" d="M602.3 483.3h2.8v2.5h-2.8zM603.7 487.5h3.5v3.5h-3.5zM607.8 502h4.2v4.2h-4.2zM620.3 493.4h5.8v6.5h-5.8z"/>
<path fill="#77756a" d="M602.3 493h3.5v4.2h-3.5z"/>
<path fill="#6a6840" d="M607.8 495.8h4.2v4.2h-4.2z"/>
<path fill="#2f2b31" d="M623.2 485h3.3v5.3h-3.3zM622.4 495.6h1.6v2h-1.6zM629.4 498.6h6.1v3.5h-6.1zM603 515h13v7.6h-13z"/>
<path fill="#f2d000" d="M593.9 521.5h3v3h-3zM552.2 530.4h8.6v10.3h-8.6zM552.2 527h1.2v1.2h-1.2zM554.1 527h1.2v1.2h-1.2zM556 527h1.2v1.2h-1.2zM557.9 527h1.2v1.2h-1.2zM562.1 530.4h8.6v10.3h-8.6zM562.1 527h1.2v1.2h-1.2zM564 527h1.2v1.2h-1.2zM565.9 527h1.2v1.2h-1.2zM567.8 527h1.2v1.2h-1.2zM590.5 530.4h8.6v10.3h-8.6zM590.5 527h1.2v1.2h-1.2zM592.4 527h1.2v1.2h-1.2zM594.3 527h1.2v1.2h-1.2zM596.2 527h1.2v1.2h-1.2zM600.5 530.4h8.7v10.3h-8.7zM600.5 527h1.2v1.2h-1.2zM602.4 527h1.2v1.2h-1.2zM604.3 527h1.2v1.2h-1.2zM606.2 527h1.2v1.2h-1.2zM573.6 528.7h14.2v11.1h-14.2z"/>
<path fill="#b0b0b4" d="M613.5 521h4v2.5h-4zM602 517.4h1.6v2.6h-1.6zM593.9 516.7h3v3h-3z"/>
<path fill="#8f8a50" d="M596.7 513.1h2.8v2.8h-2.8z"/>
<path fill="#2f2b31" d="M556.1 531.4h.8v8.3h-.8zM553.5 534.8h6v1.1h-6zM566 531.4h.8v8.3h-.8zM563.4 534.8h6v1.1h-6zM594.4 531.4h.8v8.3h-.8zM591.8 534.8h6v1.1h-6zM604.4 531.4h.8v8.3h-.8zM601.8 534.8h6.1v1.1h-6.1zM574.5 529.6h12.4v9.3h-12.4z"/>
<path fill="#f2d000" d="M575.6 529.6h1v1.7h-1zM575.6 537.2h1v1.7h-1zM577.6 529.6h1v1.7h-1zM577.6 537.2h1v1.7h-1zM579.7 529.6h1v1.7h-1zM579.7 537.2h1v1.7h-1zM581.7 529.6h1v1.7h-1zM581.7 537.2h1v1.7h-1zM583.8 529.6h1v1.7h-1zM583.8 537.2h1v1.7h-1zM574.5 530.7h1.7v1h-1.7zM585.2 530.7h1.7v1h-1.7zM574.5 532.5h1.7v1h-1.7zM585.2 532.5h1.7v1h-1.7zM574.5 534.2h1.7v1h-1.7zM585.2 534.2h1.7v1h-1.7zM574.5 536h1.7v1h-1.7zM585.2 536h1.7v1h-1.7zM552.8 541.8h2v2h-2zM556.3 541.8h2v2h-2zM559.8 541.8h2v2h-2zM563.2 541.8h2v2h-2zM568.3 541.8h2v2h-2zM571.8 541.8h2v2h-2zM575.3 541.8h2v2h-2zM581.2 541.8h2v2h-2zM584.7 541.8h2v2h-2zM587.7 541.8h2v2h-2zM591.2 541.8h2v2h-2zM594.6 541.8h2v2h-2zM597.8 541.8h2v2h-2zM601.3 541.8h2v2h-2zM610.6 533.2h1.3v1.3h-1.3zM613.7 531.4h3v3h-3zM619.3 527.3h2v2h-2z"/>
<path fill="#b0b0b4" d="M576.6 531.7h8.2v5.1h-8.2zM610.6 530.4h1.3v1.3h-1.3zM618.5 531.4h3v3h-3zM623.2 527.3h2v2h-2z"/>
<path fill="#8f8a50" d="M615 527.2h2.5v2.1h-2.5z"/>
<rect x="643.1" y="513.5" width="11.1" height="10.2" fill="url(#bga)"/>
<path fill="#f2d000" d="M643.1 513.5h11.1v.9h-11.1zM643.1 522.8h11.1v.9h-11.1zM643.1 514.4h.9v8.4h-.9zM653.3 514.4h.9v8.4h-.9zM636.9 514h2.2v2.2h-2.2zM636.9 516.8h2.2v2.2h-2.2zM640.1 515.6h1.3v1.3h-1.3zM640.1 518.1h1.3v1.3h-1.3zM640.1 520.6h1.3v1.3h-1.3zM640.1 523.1h1.3v1.3h-1.3zM655.6 513.1h1.2v1.2h-1.2zM657.5 513.1h1.2v1.2h-1.2zM655.6 515h1.2v1.2h-1.2zM657.5 515h1.2v1.2h-1.2zM655.6 516.9h1.2v1.2h-1.2zM655.6 518.8h1.2v1.2h-1.2zM657.5 518.8h1.2v1.2h-1.2zM646.6 525.1h1.2v1.2h-1.2zM648.5 525.1h1.2v1.2h-1.2zM646.6 527h1.2v1.2h-1.2zM648.5 527h1.2v1.2h-1.2zM639 529.5h1.8v1.8h-1.8zM650.3 530.2h3v3h-3z"/>
<path fill="#0a12de" d="M648.3 519.6h1.6v1.6h-1.6z"/>
<path fill="#b0b0b4" d="M636.9 510.6h2.2v2.2h-2.2zM636.9 520.7h2.2v2.2h-2.2zM647.7 510.1h1.3v1.3h-1.3zM650.1 510.1h1.3v1.3h-1.3zM642.2 529.2h1.8v1.8h-1.8zM644 531.5h1.8v1.8h-1.8zM655.5 530.2h3v3h-3z"/>
<path fill="#8f8a50" d="M646.6 530.4h3.5v3.5h-3.5z"/>
<rect x="631.8" y="536.8" width="22.4" height="15.8" fill="url(#bgb)"/>
<path fill="#f2d000" d="M631.8 536.8h22.4v.9h-22.4zM631.8 551.7h22.4v.9h-22.4zM631.8 537.7h.9v14h-.9zM653.3 537.7h.9v14h-.9z"/>
<path fill="#0a12de" d="M647.3 544.1h2.2v1.2h-2.2zM642.6 543.3h1.2v2.5h-1.2zM636.1 548.4h2.9v1.2h-2.9zM643.5 543.1h1.2v1.9h-1.2zM644.3 543.1h1.2v2.5h-1.2zM633.7 542.2h3.2v1.2h-3.2zM647.8 542.7h1.3v1.2h-1.3zM648.5 548.6h1.2v1.9h-1.2zM635.8 548.8h1.2v2.2h-1.2zM647.9 542.8h1.7v1.2h-1.7zM641.2 541.8h1.3v1.2h-1.3zM642.5 538.6h2v1.2h-2zM636.2 540.9h1.2v2.4h-1.2zM640.7 541.2h1.6v1.2h-1.6zM636.9 544.9h2.8v1.2h-2.8zM633.8 541.1h1.6v1.2h-1.6zM636.5 541.7h2.8v1.2h-2.8zM648.5 544.9h1.2v2.1h-1.2zM633.6 548.7h2.5v1.2h-2.5zM634.4 548.2h3.2v1.2h-3.2zM647.5 539.6h3.4v1.2h-3.4zM633.4 544.3h1.2v2.5h-1.2zM644.8 541.8h2.8v1.2h-2.8zM647.3 548.5h1.2v2.2h-1.2zM637.7 544.8h2.2v1.2h-2.2zM642.5 538.4h3v1.2h-3zM638.4 544.5h2.6v1.2h-2.6zM642.7 547.6h1.2v2.8h-1.2zM640.3 545.2h1.2v2.6h-1.2zM647.5 539.5h1.2v1.5h-1.2zM644.1 541.8h3v1.2h-3zM645.5 543.6h1.2v2.8h-1.2zM639.5 545h1.2v1.3h-1.2zM647.2 542.3h1.2v2.7h-1.2zM650.3 546.5h1.2v3.1h-1.2zM634.3 548h1.2v1.3h-1.2zM645.8 546.3h3.3v1.2h-3.3zM649.4 543.2h2.1v1.2h-2.1zM645.1 538.9h3.4v1.2h-3.4zM650.1 540.7h1.2v1.6h-1.2z"/>
<path fill="#f2d000" d="M627.2 535.9h2v2h-2zM627.2 542.1h2v2h-2zM627.2 546h2v2h-2zM627.2 549.4h2v2h-2zM656 549.8h2v2h-2zM572.1 547h14.7v1.1h-14.7zM572.1 557.6h14.7v1.1h-14.7zM572.1 548.1h1.1v9.5h-1.1zM585.7 548.1h1.1v9.5h-1.1zM575 548.4h1v2h-1zM576.9 548.4h1v2h-1zM578.8 548.4h1v2h-1zM580.7 548.4h1v2h-1zM582.6 548.4h1v2h-1zM568.5 545.6h2v2h-2zM588.1 545.6h2v2h-2zM567.4 551.6h1.2v1.2h-1.2zM569.3 555.4h1.2v1.2h-1.2zM614.9 554h1.9v1.9h-1.9zM617.9 554h1.9v1.9h-1.9zM621.4 554h1.9v1.9h-1.9zM623.8 554h1.9v1.9h-1.9zM614.9 556.7h1.9v1.9h-1.9zM614.9 559.8h1.9v1.9h-1.9zM628 554.7h1.9v1.9h-1.9zM631.8 554.7h1.9v1.9h-1.9zM635.2 554.7h1.9v1.9h-1.9zM638.7 554.7h1.9v1.9h-1.9zM645.6 554.7h1.9v1.9h-1.9zM654.6 554.7h1.9v1.9h-1.9zM642.2 556.7h1.9v1.9h-1.9zM645.6 557.8h1.9v1.9h-1.9zM648.4 557.4h1.9v1.9h-1.9zM627.6 561.6h1.9v1.9h-1.9zM631.1 563.9h1.9v1.9h-1.9zM627.6 564.3h1.9v1.9h-1.9zM617.7 558.6h2.4v2.4h-2.4zM621.4 558.6h2.4v2.4h-2.4zM631.8 557.2h2.4v2.4h-2.4zM635.3 561.7h2.4v2.4h-2.4zM638.7 561.7h2.4v2.4h-2.4zM625.2 563.3h1.3v1.3h-1.3zM631.4 561.9h1.3v1.3h-1.3zM623.8 557h1.3v1.3h-1.3zM623.8 560.1h1.3v1.3h-1.3zM648.2 561.8h1.2v1.2h-1.2zM648.2 563.7h1.2v1.2h-1.2zM646.3 567.5h1.2v1.2h-1.2zM547.2 565.3h11.2v1h-11.2zM547.2 575h11.2v1h-11.2zM547.2 566.3h1v8.7h-1zM557.4 566.3h1v8.7h-1zM551.2 573.2h3.1v1.8h-3.1zM553.6 581.8h1.2v1.2h-1.2zM555.6 583.8h1.2v1.2h-1.2zM554.5 593h11.8v6.2h-11.8zM615.4 566.4h1.4v1.4h-1.4zM615.4 569.2h1.4v1.4h-1.4zM625.8 580.1h10.8v1h-10.8zM625.8 589.9h10.8v1h-10.8zM625.8 581.1h1v8.8h-1zM635.6 581.1h1v8.8h-1zM629.7 588.1h3v1.8h-3zM630.7 591.6h1.2v1.2h-1.2zM632.6 591.6h1.2v1.2h-1.2zM634.5 591.6h1.2v1.2h-1.2zM630.7 593.5h1.2v1.2h-1.2zM632.6 593.5h1.2v1.2h-1.2zM635.9 598.9h6.9v12.1h-6.9zM645.2 593.4h12.2v1h-12.2zM645.2 608.2h12.2v1h-12.2zM645.2 594.4h1v13.8h-1zM656.4 594.4h1v13.8h-1zM646.6 595.6h9.4v3h-9.4zM683.9 577.5h11.8v6.5h-11.8zM699.4 577.5h11.6v6.5h-11.6zM737 567.1h12.2v6.9h-12.2zM756.9 567.1h12.3v6.9h-12.3zM789.4 568.5h25.9v1h-25.9zM789.4 578.8h25.9v1h-25.9zM789.4 569.5h1v9.3h-1zM814.3 569.5h1v9.3h-1zM821.2 567.4h10.7v1h-10.7zM821.2 577.4h10.7v1h-10.7zM821.2 568.4h1v9h-1zM830.9 568.4h1v9h-1zM825.1 575.6h3v1.8h-3zM819.8 583.3h11.7v6.2h-11.7z"/>
<path fill="#8a8ca6" d="M645.5 547.9h2.4v1.2h-2.4zM644.3 548h1.1v1.2h-1.1zM634.7 539.4h1.2v2h-1.2zM640.7 542.2h1.2v2h-1.2zM640.1 546.8h2.4v1.2h-2.4zM637.3 546.8h1.1v1.2h-1.1zM645.7 548.8h1.2v1.6h-1.2zM639.5 542h1.2v2.1h-1.2zM641.4 545.4h2v1h-2zM634 539.8h1.3v1.2h-1.3zM651.1 545.2h1.2v1.8h-1.2zM639.2 547.4h1.2v1.4h-1.2zM639.2 548.2h1.2v1.4h-1.2zM646.6 545.8h1.8v1.2h-1.8z"/>
<path fill="#b0b0b4" d="M627.2 539.1h2v2h-2zM623.2 540.4h2v2h-2zM623.2 546h2v2h-2zM623.2 549.4h2v2h-2zM656 546h2v2h-2zM569.3 549.7h1.2v1.2h-1.2zM569.3 551.6h1.2v1.2h-1.2zM567.4 553.5h1.2v1.2h-1.2zM569.3 553.5h1.2v1.2h-1.2zM567.4 555.4h1.2v1.2h-1.2zM642.2 554.7h1.9v1.9h-1.9zM649.8 554.7h1.9v1.9h-1.9zM628 558.4h1.9v1.9h-1.9zM635.5 558.4h1.9v1.9h-1.9zM639 558.4h1.9v1.9h-1.9zM654.6 558.4h1.9v1.9h-1.9zM632.4 561.5h1.3v1.3h-1.3zM548.8 567.3h2.4v6.1h-2.4zM554.4 567.3h2.4v6.1h-2.4zM553.6 577.8h1.2v1.2h-1.2zM555.6 577.8h1.2v1.2h-1.2zM555.6 579.8h1.2v1.2h-1.2zM555.6 581.8h1.2v1.2h-1.2zM627.4 582.1h2.3v6.2h-2.3zM632.7 582.1h2.3v6.2h-2.3zM648.4 604.6a2.8 2.8 0 1 0 5.6 0a2.8 2.8 0 1 0 -5.6 0zM651.2 590.4h1.2v1.2h-1.2zM653.7 590.4h1.2v1.2h-1.2zM662.9 601.7h5.8v7.5h-5.8zM691.2 575.2h1v1h-1zM703.3 575.2h1v1h-1zM705.4 575.2h1v1h-1zM822.8 569.4h2.3v6.4h-2.3zM828 569.4h2.3v6.4h-2.3zM826.8 578.7h1v1h-1zM828.7 578.7h1v1h-1z"/>
<path fill="#8f8a50" d="M618.9 545.3h2.8v3h-2.8z"/>
<path fill="#8a8a94" d="M575 555.4h1v2.4h-1zM576.9 555.4h1v2.4h-1zM578.8 555.4h1v2.4h-1zM580.7 555.4h1v2.4h-1zM582.6 555.4h1v2.4h-1zM582.5 549.5h2.5v7h-2.5z"/>
<path fill="#0a12de" d="M574 552h2v1.2h-2z"/>
<path fill="#dcbc0a" d="M790.4 569.3h.9v1.6h-.9zM790.4 577.4h.9v1.6h-.9zM791.8 569.3h.9v1.6h-.9zM791.8 577.4h.9v1.6h-.9zM793.2 569.3h.9v1.6h-.9zM793.2 577.4h.9v1.6h-.9zM794.6 569.3h.9v1.6h-.9zM794.6 577.4h.9v1.6h-.9zM796 569.3h.9v1.6h-.9zM796 577.4h.9v1.6h-.9zM797.4 569.3h.9v1.6h-.9zM797.4 577.4h.9v1.6h-.9zM798.8 569.3h.9v1.6h-.9zM798.8 577.4h.9v1.6h-.9zM800.2 569.3h.9v1.6h-.9zM800.2 577.4h.9v1.6h-.9zM801.6 569.3h.9v1.6h-.9zM801.6 577.4h.9v1.6h-.9zM803.1 569.3h.9v1.6h-.9zM803.1 577.4h.9v1.6h-.9zM804.5 569.3h.9v1.6h-.9zM804.5 577.4h.9v1.6h-.9zM805.9 569.3h.9v1.6h-.9zM805.9 577.4h.9v1.6h-.9zM807.3 569.3h.9v1.6h-.9zM807.3 577.4h.9v1.6h-.9zM808.7 569.3h.9v1.6h-.9zM808.7 577.4h.9v1.6h-.9zM810.1 569.3h.9v1.6h-.9zM810.1 577.4h.9v1.6h-.9zM811.5 569.3h.9v1.6h-.9zM811.5 577.4h.9v1.6h-.9zM812.9 569.3h.9v1.6h-.9zM812.9 577.4h.9v1.6h-.9z"/>
<path fill="#5a7ad0" d="M791.8 570.9h.8v.8h-.8zM791.8 576.6h.8v.8h-.8zM797.4 570.9h.8v.8h-.8zM797.4 576.6h.8v.8h-.8zM803.1 570.9h.8v.8h-.8zM803.1 576.6h.8v.8h-.8zM808.7 570.9h.8v.8h-.8zM808.7 576.6h.8v.8h-.8z"/>
<path fill="#2f2b31" d="M650.6 594.4h1.4v3.6h-1.4z"/></svg>
</div>
<div id="status"><div class="seg"></div><div class="lt">LATTUN_K-A1</div>
<div id="combo"><span>Search network number</span><svg width="6" height="4" viewBox="0 0 6 4" fill="none" stroke="#444" stroke-width="0.900"><path d="M0.500 0.500l2.500 2.600l2.500-2.600"/></svg></div></div>
</div>
</body></html>
